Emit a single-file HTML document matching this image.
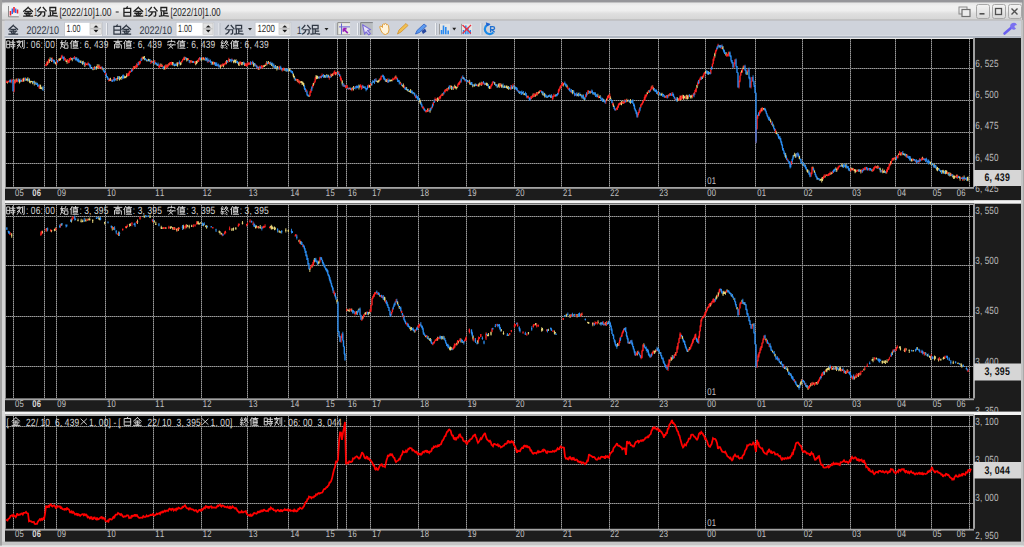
<!DOCTYPE html>
<html><head><meta charset="utf-8"><style>
html,body{margin:0;padding:0;width:1024px;height:547px;overflow:hidden;background:#a9a9a9;}
svg{display:block;} text{white-space:pre;}
</style></head><body>
<svg width="1024" height="547" viewBox="0 0 1024 547" xml:space="preserve" text-rendering="geometricPrecision">
<defs>
<symbol id="g_kin" viewBox="0 0 10 10" overflow="visible"><path d="M5 0.5L0.5 4.5M5 0.5L9.5 4.5M2.5 4.5H7.5M1.5 6.5H8.5M5 4.5V9.5M0.5 9.5H9.5M3 7.5L3.8 9M7 7.5L6.2 9" fill="none" stroke="currentColor" stroke-linecap="square"/></symbol>
<symbol id="g_haku" viewBox="0 0 10 10" overflow="visible"><path d="M5 0L4 1.5M1.5 1.5H8.5V9.5H1.5ZM1.5 5.5H8.5" fill="none" stroke="currentColor" stroke-linecap="square"/></symbol>
<symbol id="g_bun" viewBox="0 0 10 10" overflow="visible"><path d="M3.5 0.5L0.5 4M6.5 0.5L9.5 4M2 5H8V8.5Q8 9.5 6.5 9.5M4.5 5Q4.5 8 1 9.5" fill="none" stroke="currentColor" stroke-linecap="square"/></symbol>
<symbol id="g_soku" viewBox="0 0 10 10" overflow="visible"><path d="M2 0.5H8V4H2ZM5 4V8.5M5 6.5H8.5M2.5 5.5V8.5M0.5 9.5Q5 8.5 9.5 9.5" fill="none" stroke="currentColor" stroke-linecap="square"/></symbol>
<symbol id="g_ji" viewBox="0 0 10 10" overflow="visible"><path d="M0.5 1H3.5V9H0.5ZM0.5 5H3.5M4.5 2.5H9.5M7 0.5V5M4.5 5H9.5M5 7H9.5M8 5V9.5L7 9.5M5.5 7.5L6.3 8.5" fill="none" stroke="currentColor" stroke-linecap="square"/></symbol>
<symbol id="g_koku" viewBox="0 0 10 10" overflow="visible"><path d="M3 0.5V1.5M0.5 1.5H6M1 3H5L1 6.5M3.5 5L1 9.5M3.5 6L5.5 9M7 1V7.5M9 0.5V9.5L8 9.5" fill="none" stroke="currentColor" stroke-linecap="square"/></symbol>
<symbol id="g_shi" viewBox="0 0 10 10" overflow="visible"><path d="M2 0.5L1 5L4 5.5M0.5 3H4M3 3L0.5 9.5M1.5 7L4 8.5M6.5 0.5L5 3.5H9L8.5 3M5.5 5.5H9V9.5H5.5Z" fill="none" stroke="currentColor" stroke-linecap="square"/></symbol>
<symbol id="g_ne" viewBox="0 0 10 10" overflow="visible"><path d="M2.5 0.5L0.5 4M1.5 3V9.5M3.5 1.5H9.5M6.5 0.5V2.5M4.5 2.5H8.5V8H4.5ZM4.5 4.5H8.5M4.5 6.2H8.5M3.5 9.5H9.5" fill="none" stroke="currentColor" stroke-linecap="square"/></symbol>
<symbol id="g_taka" viewBox="0 0 10 10" overflow="visible"><path d="M5 0V1.5M0.5 1.5H9.5M3 2.8H7V4.5H3ZM1 5.5H9V9.5M1 5.5V9.5M3.5 7H6.5V8.8H3.5Z" fill="none" stroke="currentColor" stroke-linecap="square"/></symbol>
<symbol id="g_an" viewBox="0 0 10 10" overflow="visible"><path d="M5 0V1.5M1 3V1.5H9V3M0.5 5.5H9.5M4.5 3.5L3 6.5L6.5 9.5M7 5.5L2 9.5" fill="none" stroke="currentColor" stroke-linecap="square"/></symbol>
<symbol id="g_shu" viewBox="0 0 10 10" overflow="visible"><path d="M2 0.5L0.5 3.5L3 4M3 2L0.5 6.5H3.5M2 6.5V9.5M0.5 8L1 9M3.5 8L4 9M6.5 0.5L4.5 4M5.5 2H8.5L5 6.5M6 3L9.5 6M6.5 7L7.5 7.8M6 9L7.5 9.8" fill="none" stroke="currentColor" stroke-linecap="square"/></symbol>
</defs>
<rect x="0" y="0" width="1024" height="547" fill="#a2a2a2"/><rect x="0" y="0" width="1024" height="2.7" fill="#96969a"/>
<rect x="2" y="2.5" width="1020" height="545" fill="#d4d4d4"/>
<linearGradient id="tg" x1="0" y1="0" x2="0" y2="1"><stop offset="0" stop-color="#e6e6e6"/><stop offset="0.2" stop-color="#f1f1f1"/><stop offset="0.45" stop-color="#eeeeee"/><stop offset="0.62" stop-color="#dfdfdf"/><stop offset="1" stop-color="#d5d5d5"/></linearGradient>
<path d="M2 20.3V6Q2 2.7 5.5 2.7H1018.5Q1021.5 2.7 1021.5 6V20.3Z" fill="url(#tg)"/>
<rect x="2" y="19.6" width="1019.5" height="1" fill="#a8a8a8"/>
<rect x="8" y="6" width="10.8" height="10.5" fill="#f2f2f2"/>
<path d="M8.5 6V16.8H18.8" fill="none" stroke="#8a8a8a" stroke-width="1"/>
<path d="M10.5 15.5V11M14 12.5V7M17.5 13.5V9.5" stroke="#f02030" stroke-width="1.6"/>
<path d="M12.3 14V8.5M15.7 13V8.5" stroke="#2a70f0" stroke-width="1.4"/>
<use href="#g_kin" x="23.3" y="7.0" width="9.6" height="9.6" stroke-width="1.35" style="color:#202020"/>
<text x="34.00" y="15.6" font-size="11.5" fill="#202020" font-family="Liberation Sans, sans-serif" font-weight="normal" text-anchor="start" textLength="3.20" lengthAdjust="spacingAndGlyphs">1</text>
<use href="#g_bun" x="37" y="7.0" width="9.6" height="9.6" stroke-width="1.35" style="color:#202020"/>
<use href="#g_soku" x="48" y="7.0" width="9.6" height="9.6" stroke-width="1.35" style="color:#202020"/>
<text x="59.50" y="15.6" font-size="11.5" fill="#202020" font-family="Liberation Sans, sans-serif" font-weight="normal" text-anchor="start" textLength="52.00" lengthAdjust="spacingAndGlyphs">[2022/10]1.00</text>
<rect x="115.7" y="11.5" width="3" height="1" fill="#202020"/>
<use href="#g_haku" x="122.5" y="7.0" width="9.6" height="9.6" stroke-width="1.35" style="color:#202020"/>
<use href="#g_kin" x="133.5" y="7.0" width="9.6" height="9.6" stroke-width="1.35" style="color:#202020"/>
<text x="144.50" y="15.6" font-size="11.5" fill="#202020" font-family="Liberation Sans, sans-serif" font-weight="normal" text-anchor="start" textLength="3.20" lengthAdjust="spacingAndGlyphs">1</text>
<use href="#g_bun" x="148" y="7.0" width="9.6" height="9.6" stroke-width="1.35" style="color:#202020"/>
<use href="#g_soku" x="159" y="7.0" width="9.6" height="9.6" stroke-width="1.35" style="color:#202020"/>
<text x="170.50" y="15.6" font-size="11.5" fill="#202020" font-family="Liberation Sans, sans-serif" font-weight="normal" text-anchor="start" textLength="50.00" lengthAdjust="spacingAndGlyphs">[2022/10]1.00</text>
<rect x="959" y="7" width="8" height="7" fill="none" stroke="#8a8a8a" stroke-width="1"/>
<rect x="962" y="9.5" width="8" height="7" fill="#ececec" stroke="#707070" stroke-width="1.2"/>
<linearGradient id="bg" x1="0" y1="0" x2="0" y2="1"><stop offset="0" stop-color="#f4f4f4"/><stop offset="1" stop-color="#d8d8d8"/></linearGradient>
<rect x="976.5" y="4.5" width="13" height="14" rx="2" fill="url(#bg)" stroke="#a8a8a8"/>
<rect x="992.5" y="4.5" width="13" height="14" rx="2" fill="url(#bg)" stroke="#a8a8a8"/>
<rect x="1008.5" y="4.5" width="13" height="14" rx="2" fill="url(#bg)" stroke="#a8a8a8"/>
<rect x="979.5" y="13" width="5" height="1.6" fill="#505050"/>
<rect x="995.5" y="8.5" width="6" height="6" fill="none" stroke="#505050" stroke-width="1.3"/>
<path d="M1011.5 8.5L1017.5 14.5M1017.5 8.5L1011.5 14.5" stroke="#505050" stroke-width="1.4"/>
<rect x="4.6" y="20.6" width="1016.4" height="15.4" fill="#cfd3db"/>
<rect x="4.6" y="35" width="1016.4" height="1" fill="#d9dce2"/>
<rect x="4.6" y="36" width="1016.4" height="2" fill="#b0b7c2"/>
<use href="#g_kin" x="8.5" y="25" width="9.5" height="9.5" stroke-width="1.3" style="color:#303844"/>
<text x="26.5" y="33.6" font-size="11" fill="#303844" font-family="Liberation Sans, sans-serif" font-weight="normal" text-anchor="start" textLength="32.5" lengthAdjust="spacingAndGlyphs">2022/10</text>
<rect x="64.2" y="21.9" width="38.6" height="14.4" fill="#c2c6ce"/>
<rect x="65" y="22.7" width="37" height="13.1" fill="#ffffff"/>
<rect x="90" y="23.1" width="11.5" height="11.2" fill="#e2e2e2" stroke="#c4c4c4" stroke-width="0.7"/>
<path d="M93.5 27.6L96.0 25.2L98.5 27.6ZM93.5 29.8L96.0 32.4L98.5 29.8Z" fill="#181818"/>
<rect x="90.5" y="28.4" width="10.5" height="0.8" fill="#b0b0b0"/>
<text x="66.5" y="31.5" font-size="10.5" fill="#2a2a2a" font-family="Liberation Sans, sans-serif" font-weight="normal" text-anchor="start" textLength="14" lengthAdjust="spacingAndGlyphs">1.00</text>
<rect x="106" y="23" width="1" height="12" fill="#eef0f3"/><rect x="107" y="23" width="1" height="12" fill="#b8bdc6"/>
<use href="#g_haku" x="112.5" y="25" width="9.5" height="9.5" stroke-width="1.3" style="color:#303844"/>
<use href="#g_kin" x="121.5" y="25" width="9.5" height="9.5" stroke-width="1.3" style="color:#303844"/>
<text x="139.5" y="33.6" font-size="11" fill="#303844" font-family="Liberation Sans, sans-serif" font-weight="normal" text-anchor="start" textLength="32.5" lengthAdjust="spacingAndGlyphs">2022/10</text>
<rect x="175.7" y="21.9" width="38.6" height="14.4" fill="#c2c6ce"/>
<rect x="176.5" y="22.7" width="37.0" height="13.1" fill="#ffffff"/>
<rect x="203" y="23.1" width="10.0" height="11.2" fill="#e2e2e2" stroke="#c4c4c4" stroke-width="0.7"/>
<path d="M205.75 27.6L208.25 25.2L210.75 27.6ZM205.75 29.8L208.25 32.4L210.75 29.8Z" fill="#181818"/>
<rect x="203.5" y="28.4" width="9.0" height="0.8" fill="#b0b0b0"/>
<text x="178" y="31.5" font-size="10.5" fill="#2a2a2a" font-family="Liberation Sans, sans-serif" font-weight="normal" text-anchor="start" textLength="14" lengthAdjust="spacingAndGlyphs">1.00</text>
<rect x="218.5" y="23" width="1" height="12" fill="#eef0f3"/><rect x="219.5" y="23" width="1" height="12" fill="#b8bdc6"/>
<use href="#g_bun" x="225" y="25" width="9.5" height="9.5" stroke-width="1.3" style="color:#303844"/>
<use href="#g_soku" x="234" y="25" width="9.5" height="9.5" stroke-width="1.3" style="color:#303844"/>
<path d="M248 28L252 28L250 30.5Z" fill="#202020"/>
<rect x="254.7" y="21.9" width="36.6" height="14.4" fill="#c2c6ce"/>
<rect x="255.5" y="22.7" width="35.0" height="13.1" fill="#ffffff"/>
<rect x="279" y="23.1" width="11.0" height="11.2" fill="#e2e2e2" stroke="#c4c4c4" stroke-width="0.7"/>
<path d="M282.25 27.6L284.75 25.2L287.25 27.6ZM282.25 29.8L284.75 32.4L287.25 29.8Z" fill="#181818"/>
<rect x="279.5" y="28.4" width="10.0" height="0.8" fill="#b0b0b0"/>
<text x="257.5" y="31.5" font-size="10.5" fill="#2a2a2a" font-family="Liberation Sans, sans-serif" font-weight="normal" text-anchor="start" textLength="17.5" lengthAdjust="spacingAndGlyphs">1200</text>
<text x="296.8" y="33.6" font-size="11" fill="#303844" font-family="Liberation Sans, sans-serif" font-weight="normal" text-anchor="start" textLength="5" lengthAdjust="spacingAndGlyphs">1</text>
<use href="#g_bun" x="301.5" y="25" width="9.5" height="9.5" stroke-width="1.3" style="color:#303844"/>
<use href="#g_soku" x="310.5" y="25" width="9.5" height="9.5" stroke-width="1.3" style="color:#303844"/>
<path d="M324.5 28L328.5 28L326.5 30.5Z" fill="#202020"/>
<rect x="334.5" y="23" width="1" height="12" fill="#eef0f3"/><rect x="335.5" y="23" width="1" height="12" fill="#b8bdc6"/>
<rect x="357" y="23" width="1" height="12" fill="#eef0f3"/><rect x="358" y="23" width="1" height="12" fill="#b8bdc6"/>
<rect x="435" y="23" width="1" height="12" fill="#eef0f3"/><rect x="436" y="23" width="1" height="12" fill="#b8bdc6"/>
<rect x="480.5" y="23" width="1" height="12" fill="#eef0f3"/><rect x="481.5" y="23" width="1" height="12" fill="#b8bdc6"/>
<rect x="337.2" y="22.1" width="12.9" height="12.9" fill="#e9e9e2"/><path d="M337.7 35V22.6H350.1" fill="none" stroke="#8a8a8a" stroke-width="1"/><path d="M337.7 34.5H350" stroke="#a8a8a8" stroke-width="0.8"/>
<path d="M339 26.8H350" stroke="#9898dc" stroke-width="1.6"/><path d="M341.5 23.5V34.5" stroke="#6a64d0" stroke-width="1"/>
<path d="M347.8 33.2L343.6 29M343.4 28.6V31.8M343.4 28.6H346.6" stroke="#9a20b8" stroke-width="1.7"/>
<rect x="360.2" y="22.1" width="12.6" height="12.9" fill="#b9bdc1"/><path d="M360.7 35V22.6H372.8" fill="none" stroke="#7e8286" stroke-width="1"/>
<path d="M362.6 24.8L370.6 29.6L367.6 30.6L370.4 33.6L368.9 34.8L366.1 31.8L364.6 34.2Z" fill="#e6e2fa" stroke="#7a6ad8" stroke-width="1.1" stroke-linejoin="round"/>
<path d="M380 28Q379 26 381 26L382.5 27.5V24.5Q383.5 23.5 384.5 24.5V23.8Q385.7 23 386.5 24V24.8Q388 24.3 388.5 25.5L389 30Q389 34 385.5 34.5Q382 34.5 380 28Z" fill="#fff4dc" stroke="#e0a040" stroke-width="1"/>
<path d="M397.5 34L399 30L406 23.5L408 25.5L401 32Z" fill="#f2c050" stroke="#d09030" stroke-width="0.8"/>
<path d="M415.5 34L417 30.5L424 24L426.5 26L419.5 32.5Z" fill="#5a9af0" stroke="#3060c0" stroke-width="0.8"/><path d="M421.5 31L425 28.5L426.5 31.5L423 34Z" fill="#2a4aa0"/>
<rect x="439" y="23.8" width="11" height="10.7" fill="#e6e6e6"/><path d="M439.5 23.8V34.5" stroke="#9a9a9a" stroke-width="1"/>
<path d="M441.5 34.3V30M443.5 34.3V25.5M445.8 34.3V27M448.2 34.3V30.5" stroke="#2a8af0" stroke-width="1.6"/>
<path d="M452.3 27.8L456.2 27.8L454.25 30.5Z" fill="#202020"/>
<rect x="461" y="23.8" width="11" height="10.7" fill="#e6e6e6"/><path d="M461.5 23.8V34.5" stroke="#9a9a9a" stroke-width="1"/>
<path d="M463.5 34.3V30M465.8 34.3V25.5M468 34.3V27.5M470.3 34.3V30" stroke="#2a8af0" stroke-width="1.5"/>
<path d="M462.5 25L471 33.5M471 25L462.5 33.5" stroke="#e83040" stroke-width="1.3"/>
<path d="M489.5 24.3A4.9 4.9 0 1 0 493.3 32.6" fill="none" stroke="#1a8ae8" stroke-width="2.1"/><path d="M485.8 22.3L490.6 24.3L486.8 26.6Z" fill="#2060d0"/>
<path d="M490.6 32.3V26.6H492.8Q494.6 26.6 494.6 28.2Q494.6 29.6 492.8 29.6H491.6L494.6 32.3" fill="none" stroke="#2070d0" stroke-width="1.3"/>
<g transform="translate(18.5 0)"><path d="M986 33.5L993 27.5" stroke="#6a60f0" stroke-width="2.6" stroke-linecap="round"/><path d="M992 27.5A3.2 3.2 0 1 1 998.5 25L996.5 25.5L995.8 27L997.5 28.5A3.2 3.2 0 0 1 992 27.5Z" fill="#7a70f0"/></g>
<rect x="5" y="38" width="1016" height="505" fill="#1c1c1c"/>
<rect x="6" y="39" width="967" height="148" fill="#000"/>
<rect x="5" y="38" width="969" height="1" fill="#e8e8e8"/>
<rect x="5" y="39" width="1" height="148" fill="#8c8c8c"/>
<rect x="973" y="38" width="2" height="149" fill="#a0a0a0"/>
<rect x="5" y="187" width="969" height="1.8" fill="#a4a4a4"/>
<line x1="6" y1="68.5" x2="973" y2="68.5" stroke="#5c5c5c" stroke-width="1"/><line x1="6" y1="68.5" x2="973" y2="68.5" stroke="#9c9c9c" stroke-width="1" stroke-dasharray="1 1"/>
<line x1="6" y1="100.5" x2="973" y2="100.5" stroke="#5c5c5c" stroke-width="1"/><line x1="6" y1="100.5" x2="973" y2="100.5" stroke="#9c9c9c" stroke-width="1" stroke-dasharray="1 1"/>
<line x1="6" y1="132.5" x2="973" y2="132.5" stroke="#5c5c5c" stroke-width="1"/><line x1="6" y1="132.5" x2="973" y2="132.5" stroke="#9c9c9c" stroke-width="1" stroke-dasharray="1 1"/>
<line x1="6" y1="163.5" x2="973" y2="163.5" stroke="#5c5c5c" stroke-width="1"/><line x1="6" y1="163.5" x2="973" y2="163.5" stroke="#9c9c9c" stroke-width="1" stroke-dasharray="1 1"/>
<line x1="13.5" y1="39" x2="13.5" y2="187" stroke="#5c5c5c" stroke-width="1"/><line x1="13.5" y1="39" x2="13.5" y2="187" stroke="#9c9c9c" stroke-width="1" stroke-dasharray="1 1"/>
<line x1="44.5" y1="39" x2="44.5" y2="187" stroke="#5c5c5c" stroke-width="1"/><line x1="44.5" y1="39" x2="44.5" y2="187" stroke="#9c9c9c" stroke-width="1" stroke-dasharray="1 1"/>
<line x1="56.5" y1="39" x2="56.5" y2="187" stroke="#5c5c5c" stroke-width="1"/><line x1="56.5" y1="39" x2="56.5" y2="187" stroke="#9c9c9c" stroke-width="1" stroke-dasharray="1 1"/>
<line x1="105.5" y1="39" x2="105.5" y2="187" stroke="#5c5c5c" stroke-width="1"/><line x1="105.5" y1="39" x2="105.5" y2="187" stroke="#9c9c9c" stroke-width="1" stroke-dasharray="1 1"/>
<line x1="153.5" y1="39" x2="153.5" y2="187" stroke="#5c5c5c" stroke-width="1"/><line x1="153.5" y1="39" x2="153.5" y2="187" stroke="#9c9c9c" stroke-width="1" stroke-dasharray="1 1"/>
<line x1="201.5" y1="39" x2="201.5" y2="187" stroke="#5c5c5c" stroke-width="1"/><line x1="201.5" y1="39" x2="201.5" y2="187" stroke="#9c9c9c" stroke-width="1" stroke-dasharray="1 1"/>
<line x1="247.5" y1="39" x2="247.5" y2="187" stroke="#5c5c5c" stroke-width="1"/><line x1="247.5" y1="39" x2="247.5" y2="187" stroke="#9c9c9c" stroke-width="1" stroke-dasharray="1 1"/>
<line x1="288.5" y1="39" x2="288.5" y2="187" stroke="#5c5c5c" stroke-width="1"/><line x1="288.5" y1="39" x2="288.5" y2="187" stroke="#9c9c9c" stroke-width="1" stroke-dasharray="1 1"/>
<line x1="337.5" y1="39" x2="337.5" y2="187" stroke="#5c5c5c" stroke-width="1"/><line x1="337.5" y1="39" x2="337.5" y2="187" stroke="#9c9c9c" stroke-width="1" stroke-dasharray="1 1"/>
<line x1="346.5" y1="39" x2="346.5" y2="187" stroke="#5c5c5c" stroke-width="1"/><line x1="346.5" y1="39" x2="346.5" y2="187" stroke="#9c9c9c" stroke-width="1" stroke-dasharray="1 1"/>
<line x1="370.5" y1="39" x2="370.5" y2="187" stroke="#5c5c5c" stroke-width="1"/><line x1="370.5" y1="39" x2="370.5" y2="187" stroke="#9c9c9c" stroke-width="1" stroke-dasharray="1 1"/>
<line x1="418.5" y1="39" x2="418.5" y2="187" stroke="#5c5c5c" stroke-width="1"/><line x1="418.5" y1="39" x2="418.5" y2="187" stroke="#9c9c9c" stroke-width="1" stroke-dasharray="1 1"/>
<line x1="466.5" y1="39" x2="466.5" y2="187" stroke="#5c5c5c" stroke-width="1"/><line x1="466.5" y1="39" x2="466.5" y2="187" stroke="#9c9c9c" stroke-width="1" stroke-dasharray="1 1"/>
<line x1="514.5" y1="39" x2="514.5" y2="187" stroke="#5c5c5c" stroke-width="1"/><line x1="514.5" y1="39" x2="514.5" y2="187" stroke="#9c9c9c" stroke-width="1" stroke-dasharray="1 1"/>
<line x1="561.5" y1="39" x2="561.5" y2="187" stroke="#5c5c5c" stroke-width="1"/><line x1="561.5" y1="39" x2="561.5" y2="187" stroke="#9c9c9c" stroke-width="1" stroke-dasharray="1 1"/>
<line x1="609.5" y1="39" x2="609.5" y2="187" stroke="#5c5c5c" stroke-width="1"/><line x1="609.5" y1="39" x2="609.5" y2="187" stroke="#9c9c9c" stroke-width="1" stroke-dasharray="1 1"/>
<line x1="658.5" y1="39" x2="658.5" y2="187" stroke="#5c5c5c" stroke-width="1"/><line x1="658.5" y1="39" x2="658.5" y2="187" stroke="#9c9c9c" stroke-width="1" stroke-dasharray="1 1"/>
<line x1="705.5" y1="39" x2="705.5" y2="187" stroke="#5c5c5c" stroke-width="1"/><line x1="705.5" y1="39" x2="705.5" y2="187" stroke="#9c9c9c" stroke-width="1" stroke-dasharray="1 1"/>
<line x1="755.5" y1="39" x2="755.5" y2="187" stroke="#5c5c5c" stroke-width="1"/><line x1="755.5" y1="39" x2="755.5" y2="187" stroke="#9c9c9c" stroke-width="1" stroke-dasharray="1 1"/>
<line x1="802.5" y1="39" x2="802.5" y2="187" stroke="#5c5c5c" stroke-width="1"/><line x1="802.5" y1="39" x2="802.5" y2="187" stroke="#9c9c9c" stroke-width="1" stroke-dasharray="1 1"/>
<line x1="850.5" y1="39" x2="850.5" y2="187" stroke="#5c5c5c" stroke-width="1"/><line x1="850.5" y1="39" x2="850.5" y2="187" stroke="#9c9c9c" stroke-width="1" stroke-dasharray="1 1"/>
<line x1="895.5" y1="39" x2="895.5" y2="187" stroke="#5c5c5c" stroke-width="1"/><line x1="895.5" y1="39" x2="895.5" y2="187" stroke="#9c9c9c" stroke-width="1" stroke-dasharray="1 1"/>
<line x1="931.5" y1="39" x2="931.5" y2="187" stroke="#5c5c5c" stroke-width="1"/><line x1="931.5" y1="39" x2="931.5" y2="187" stroke="#9c9c9c" stroke-width="1" stroke-dasharray="1 1"/>
<line x1="969.5" y1="39" x2="969.5" y2="187" stroke="#5c5c5c" stroke-width="1"/><line x1="969.5" y1="39" x2="969.5" y2="187" stroke="#9c9c9c" stroke-width="1" stroke-dasharray="1 1"/>
<g transform="translate(14.50 0) scale(0.78 1)"><text x="0.59 6.49" y="195.60" font-size="9.8" fill="#c4c4c4" font-family="Liberation Sans, sans-serif" font-weight="normal">05</text></g>
<g transform="translate(31.70 0) scale(0.78 1)"><text x="0.59 6.49" y="195.60" font-size="9.8" fill="#dadada" font-family="Liberation Sans, sans-serif" font-weight="bold">06</text></g>
<g transform="translate(56.70 0) scale(0.78 1)"><text x="0.59 6.49" y="195.60" font-size="9.8" fill="#c4c4c4" font-family="Liberation Sans, sans-serif" font-weight="normal">09</text></g>
<g transform="translate(106.50 0) scale(0.78 1)"><text x="0.59 6.49" y="195.60" font-size="9.8" fill="#c4c4c4" font-family="Liberation Sans, sans-serif" font-weight="normal">10</text></g>
<g transform="translate(154.90 0) scale(0.78 1)"><text x="0.59 6.49" y="195.60" font-size="9.8" fill="#c4c4c4" font-family="Liberation Sans, sans-serif" font-weight="normal">11</text></g>
<g transform="translate(202.20 0) scale(0.78 1)"><text x="0.59 6.49" y="195.60" font-size="9.8" fill="#c4c4c4" font-family="Liberation Sans, sans-serif" font-weight="normal">12</text></g>
<g transform="translate(248.20 0) scale(0.78 1)"><text x="0.59 6.49" y="195.60" font-size="9.8" fill="#c4c4c4" font-family="Liberation Sans, sans-serif" font-weight="normal">13</text></g>
<g transform="translate(290.00 0) scale(0.78 1)"><text x="0.59 6.49" y="195.60" font-size="9.8" fill="#c4c4c4" font-family="Liberation Sans, sans-serif" font-weight="normal">14</text></g>
<g transform="translate(325.40 0) scale(0.78 1)"><text x="0.59 6.49" y="195.60" font-size="9.8" fill="#c4c4c4" font-family="Liberation Sans, sans-serif" font-weight="normal">15</text></g>
<g transform="translate(347.50 0) scale(0.78 1)"><text x="0.59 6.49" y="195.60" font-size="9.8" fill="#c4c4c4" font-family="Liberation Sans, sans-serif" font-weight="normal">16</text></g>
<g transform="translate(371.70 0) scale(0.78 1)"><text x="0.59 6.49" y="195.60" font-size="9.8" fill="#c4c4c4" font-family="Liberation Sans, sans-serif" font-weight="normal">17</text></g>
<g transform="translate(419.70 0) scale(0.78 1)"><text x="0.59 6.49" y="195.60" font-size="9.8" fill="#c4c4c4" font-family="Liberation Sans, sans-serif" font-weight="normal">18</text></g>
<g transform="translate(467.20 0) scale(0.78 1)"><text x="0.59 6.49" y="195.60" font-size="9.8" fill="#c4c4c4" font-family="Liberation Sans, sans-serif" font-weight="normal">19</text></g>
<g transform="translate(515.20 0) scale(0.78 1)"><text x="0.59 6.49" y="195.60" font-size="9.8" fill="#c4c4c4" font-family="Liberation Sans, sans-serif" font-weight="normal">20</text></g>
<g transform="translate(562.60 0) scale(0.78 1)"><text x="0.59 6.49" y="195.60" font-size="9.8" fill="#c4c4c4" font-family="Liberation Sans, sans-serif" font-weight="normal">21</text></g>
<g transform="translate(609.70 0) scale(0.78 1)"><text x="0.59 6.49" y="195.60" font-size="9.8" fill="#c4c4c4" font-family="Liberation Sans, sans-serif" font-weight="normal">22</text></g>
<g transform="translate(658.70 0) scale(0.78 1)"><text x="0.59 6.49" y="195.60" font-size="9.8" fill="#c4c4c4" font-family="Liberation Sans, sans-serif" font-weight="normal">23</text></g>
<g transform="translate(706.70 0) scale(0.78 1)"><text x="0.59 6.49" y="195.60" font-size="9.8" fill="#c4c4c4" font-family="Liberation Sans, sans-serif" font-weight="normal">00</text></g>
<g transform="translate(756.70 0) scale(0.78 1)"><text x="0.59 6.49" y="195.60" font-size="9.8" fill="#c4c4c4" font-family="Liberation Sans, sans-serif" font-weight="normal">01</text></g>
<g transform="translate(803.20 0) scale(0.78 1)"><text x="0.59 6.49" y="195.60" font-size="9.8" fill="#c4c4c4" font-family="Liberation Sans, sans-serif" font-weight="normal">02</text></g>
<g transform="translate(851.70 0) scale(0.78 1)"><text x="0.59 6.49" y="195.60" font-size="9.8" fill="#c4c4c4" font-family="Liberation Sans, sans-serif" font-weight="normal">03</text></g>
<g transform="translate(896.70 0) scale(0.78 1)"><text x="0.59 6.49" y="195.60" font-size="9.8" fill="#c4c4c4" font-family="Liberation Sans, sans-serif" font-weight="normal">04</text></g>
<g transform="translate(932.20 0) scale(0.78 1)"><text x="0.59 6.49" y="195.60" font-size="9.8" fill="#c4c4c4" font-family="Liberation Sans, sans-serif" font-weight="normal">05</text></g>
<g transform="translate(956.20 0) scale(0.78 1)"><text x="0.59 6.49" y="195.60" font-size="9.8" fill="#c4c4c4" font-family="Liberation Sans, sans-serif" font-weight="normal">06</text></g>
<g transform="translate(706.70 0) scale(0.78 1)"><text x="0.59 6.49" y="184.00" font-size="9.8" fill="#c4c4c4" font-family="Liberation Sans, sans-serif" font-weight="normal">01</text></g>
<rect x="6" y="205" width="967" height="193.39999999999998" fill="#000"/>
<rect x="5" y="204" width="969" height="1" fill="#b4b4b4"/>
<rect x="5" y="205" width="1" height="193.39999999999998" fill="#8c8c8c"/>
<rect x="973" y="204" width="2" height="194.39999999999998" fill="#a0a0a0"/>
<rect x="5" y="398.4" width="969" height="1.8" fill="#a4a4a4"/>
<line x1="6" y1="216.5" x2="973" y2="216.5" stroke="#5c5c5c" stroke-width="1"/><line x1="6" y1="216.5" x2="973" y2="216.5" stroke="#9c9c9c" stroke-width="1" stroke-dasharray="1 1"/>
<line x1="6" y1="265.5" x2="973" y2="265.5" stroke="#5c5c5c" stroke-width="1"/><line x1="6" y1="265.5" x2="973" y2="265.5" stroke="#9c9c9c" stroke-width="1" stroke-dasharray="1 1"/>
<line x1="6" y1="316.5" x2="973" y2="316.5" stroke="#5c5c5c" stroke-width="1"/><line x1="6" y1="316.5" x2="973" y2="316.5" stroke="#9c9c9c" stroke-width="1" stroke-dasharray="1 1"/>
<line x1="6" y1="366.5" x2="973" y2="366.5" stroke="#5c5c5c" stroke-width="1"/><line x1="6" y1="366.5" x2="973" y2="366.5" stroke="#9c9c9c" stroke-width="1" stroke-dasharray="1 1"/>
<line x1="13.5" y1="205" x2="13.5" y2="398.4" stroke="#5c5c5c" stroke-width="1"/><line x1="13.5" y1="205" x2="13.5" y2="398.4" stroke="#9c9c9c" stroke-width="1" stroke-dasharray="1 1"/>
<line x1="44.5" y1="205" x2="44.5" y2="398.4" stroke="#5c5c5c" stroke-width="1"/><line x1="44.5" y1="205" x2="44.5" y2="398.4" stroke="#9c9c9c" stroke-width="1" stroke-dasharray="1 1"/>
<line x1="56.5" y1="205" x2="56.5" y2="398.4" stroke="#5c5c5c" stroke-width="1"/><line x1="56.5" y1="205" x2="56.5" y2="398.4" stroke="#9c9c9c" stroke-width="1" stroke-dasharray="1 1"/>
<line x1="105.5" y1="205" x2="105.5" y2="398.4" stroke="#5c5c5c" stroke-width="1"/><line x1="105.5" y1="205" x2="105.5" y2="398.4" stroke="#9c9c9c" stroke-width="1" stroke-dasharray="1 1"/>
<line x1="153.5" y1="205" x2="153.5" y2="398.4" stroke="#5c5c5c" stroke-width="1"/><line x1="153.5" y1="205" x2="153.5" y2="398.4" stroke="#9c9c9c" stroke-width="1" stroke-dasharray="1 1"/>
<line x1="201.5" y1="205" x2="201.5" y2="398.4" stroke="#5c5c5c" stroke-width="1"/><line x1="201.5" y1="205" x2="201.5" y2="398.4" stroke="#9c9c9c" stroke-width="1" stroke-dasharray="1 1"/>
<line x1="247.5" y1="205" x2="247.5" y2="398.4" stroke="#5c5c5c" stroke-width="1"/><line x1="247.5" y1="205" x2="247.5" y2="398.4" stroke="#9c9c9c" stroke-width="1" stroke-dasharray="1 1"/>
<line x1="288.5" y1="205" x2="288.5" y2="398.4" stroke="#5c5c5c" stroke-width="1"/><line x1="288.5" y1="205" x2="288.5" y2="398.4" stroke="#9c9c9c" stroke-width="1" stroke-dasharray="1 1"/>
<line x1="337.5" y1="205" x2="337.5" y2="398.4" stroke="#5c5c5c" stroke-width="1"/><line x1="337.5" y1="205" x2="337.5" y2="398.4" stroke="#9c9c9c" stroke-width="1" stroke-dasharray="1 1"/>
<line x1="346.5" y1="205" x2="346.5" y2="398.4" stroke="#5c5c5c" stroke-width="1"/><line x1="346.5" y1="205" x2="346.5" y2="398.4" stroke="#9c9c9c" stroke-width="1" stroke-dasharray="1 1"/>
<line x1="370.5" y1="205" x2="370.5" y2="398.4" stroke="#5c5c5c" stroke-width="1"/><line x1="370.5" y1="205" x2="370.5" y2="398.4" stroke="#9c9c9c" stroke-width="1" stroke-dasharray="1 1"/>
<line x1="418.5" y1="205" x2="418.5" y2="398.4" stroke="#5c5c5c" stroke-width="1"/><line x1="418.5" y1="205" x2="418.5" y2="398.4" stroke="#9c9c9c" stroke-width="1" stroke-dasharray="1 1"/>
<line x1="466.5" y1="205" x2="466.5" y2="398.4" stroke="#5c5c5c" stroke-width="1"/><line x1="466.5" y1="205" x2="466.5" y2="398.4" stroke="#9c9c9c" stroke-width="1" stroke-dasharray="1 1"/>
<line x1="514.5" y1="205" x2="514.5" y2="398.4" stroke="#5c5c5c" stroke-width="1"/><line x1="514.5" y1="205" x2="514.5" y2="398.4" stroke="#9c9c9c" stroke-width="1" stroke-dasharray="1 1"/>
<line x1="561.5" y1="205" x2="561.5" y2="398.4" stroke="#5c5c5c" stroke-width="1"/><line x1="561.5" y1="205" x2="561.5" y2="398.4" stroke="#9c9c9c" stroke-width="1" stroke-dasharray="1 1"/>
<line x1="609.5" y1="205" x2="609.5" y2="398.4" stroke="#5c5c5c" stroke-width="1"/><line x1="609.5" y1="205" x2="609.5" y2="398.4" stroke="#9c9c9c" stroke-width="1" stroke-dasharray="1 1"/>
<line x1="658.5" y1="205" x2="658.5" y2="398.4" stroke="#5c5c5c" stroke-width="1"/><line x1="658.5" y1="205" x2="658.5" y2="398.4" stroke="#9c9c9c" stroke-width="1" stroke-dasharray="1 1"/>
<line x1="705.5" y1="205" x2="705.5" y2="398.4" stroke="#5c5c5c" stroke-width="1"/><line x1="705.5" y1="205" x2="705.5" y2="398.4" stroke="#9c9c9c" stroke-width="1" stroke-dasharray="1 1"/>
<line x1="755.5" y1="205" x2="755.5" y2="398.4" stroke="#5c5c5c" stroke-width="1"/><line x1="755.5" y1="205" x2="755.5" y2="398.4" stroke="#9c9c9c" stroke-width="1" stroke-dasharray="1 1"/>
<line x1="802.5" y1="205" x2="802.5" y2="398.4" stroke="#5c5c5c" stroke-width="1"/><line x1="802.5" y1="205" x2="802.5" y2="398.4" stroke="#9c9c9c" stroke-width="1" stroke-dasharray="1 1"/>
<line x1="850.5" y1="205" x2="850.5" y2="398.4" stroke="#5c5c5c" stroke-width="1"/><line x1="850.5" y1="205" x2="850.5" y2="398.4" stroke="#9c9c9c" stroke-width="1" stroke-dasharray="1 1"/>
<line x1="895.5" y1="205" x2="895.5" y2="398.4" stroke="#5c5c5c" stroke-width="1"/><line x1="895.5" y1="205" x2="895.5" y2="398.4" stroke="#9c9c9c" stroke-width="1" stroke-dasharray="1 1"/>
<line x1="931.5" y1="205" x2="931.5" y2="398.4" stroke="#5c5c5c" stroke-width="1"/><line x1="931.5" y1="205" x2="931.5" y2="398.4" stroke="#9c9c9c" stroke-width="1" stroke-dasharray="1 1"/>
<line x1="969.5" y1="205" x2="969.5" y2="398.4" stroke="#5c5c5c" stroke-width="1"/><line x1="969.5" y1="205" x2="969.5" y2="398.4" stroke="#9c9c9c" stroke-width="1" stroke-dasharray="1 1"/>
<g transform="translate(14.50 0) scale(0.78 1)"><text x="0.59 6.49" y="407.00" font-size="9.8" fill="#c4c4c4" font-family="Liberation Sans, sans-serif" font-weight="normal">05</text></g>
<g transform="translate(31.70 0) scale(0.78 1)"><text x="0.59 6.49" y="407.00" font-size="9.8" fill="#dadada" font-family="Liberation Sans, sans-serif" font-weight="bold">06</text></g>
<g transform="translate(56.70 0) scale(0.78 1)"><text x="0.59 6.49" y="407.00" font-size="9.8" fill="#c4c4c4" font-family="Liberation Sans, sans-serif" font-weight="normal">09</text></g>
<g transform="translate(106.50 0) scale(0.78 1)"><text x="0.59 6.49" y="407.00" font-size="9.8" fill="#c4c4c4" font-family="Liberation Sans, sans-serif" font-weight="normal">10</text></g>
<g transform="translate(154.90 0) scale(0.78 1)"><text x="0.59 6.49" y="407.00" font-size="9.8" fill="#c4c4c4" font-family="Liberation Sans, sans-serif" font-weight="normal">11</text></g>
<g transform="translate(202.20 0) scale(0.78 1)"><text x="0.59 6.49" y="407.00" font-size="9.8" fill="#c4c4c4" font-family="Liberation Sans, sans-serif" font-weight="normal">12</text></g>
<g transform="translate(248.20 0) scale(0.78 1)"><text x="0.59 6.49" y="407.00" font-size="9.8" fill="#c4c4c4" font-family="Liberation Sans, sans-serif" font-weight="normal">13</text></g>
<g transform="translate(290.00 0) scale(0.78 1)"><text x="0.59 6.49" y="407.00" font-size="9.8" fill="#c4c4c4" font-family="Liberation Sans, sans-serif" font-weight="normal">14</text></g>
<g transform="translate(325.40 0) scale(0.78 1)"><text x="0.59 6.49" y="407.00" font-size="9.8" fill="#c4c4c4" font-family="Liberation Sans, sans-serif" font-weight="normal">15</text></g>
<g transform="translate(347.50 0) scale(0.78 1)"><text x="0.59 6.49" y="407.00" font-size="9.8" fill="#c4c4c4" font-family="Liberation Sans, sans-serif" font-weight="normal">16</text></g>
<g transform="translate(371.70 0) scale(0.78 1)"><text x="0.59 6.49" y="407.00" font-size="9.8" fill="#c4c4c4" font-family="Liberation Sans, sans-serif" font-weight="normal">17</text></g>
<g transform="translate(419.70 0) scale(0.78 1)"><text x="0.59 6.49" y="407.00" font-size="9.8" fill="#c4c4c4" font-family="Liberation Sans, sans-serif" font-weight="normal">18</text></g>
<g transform="translate(467.20 0) scale(0.78 1)"><text x="0.59 6.49" y="407.00" font-size="9.8" fill="#c4c4c4" font-family="Liberation Sans, sans-serif" font-weight="normal">19</text></g>
<g transform="translate(515.20 0) scale(0.78 1)"><text x="0.59 6.49" y="407.00" font-size="9.8" fill="#c4c4c4" font-family="Liberation Sans, sans-serif" font-weight="normal">20</text></g>
<g transform="translate(562.60 0) scale(0.78 1)"><text x="0.59 6.49" y="407.00" font-size="9.8" fill="#c4c4c4" font-family="Liberation Sans, sans-serif" font-weight="normal">21</text></g>
<g transform="translate(609.70 0) scale(0.78 1)"><text x="0.59 6.49" y="407.00" font-size="9.8" fill="#c4c4c4" font-family="Liberation Sans, sans-serif" font-weight="normal">22</text></g>
<g transform="translate(658.70 0) scale(0.78 1)"><text x="0.59 6.49" y="407.00" font-size="9.8" fill="#c4c4c4" font-family="Liberation Sans, sans-serif" font-weight="normal">23</text></g>
<g transform="translate(706.70 0) scale(0.78 1)"><text x="0.59 6.49" y="407.00" font-size="9.8" fill="#c4c4c4" font-family="Liberation Sans, sans-serif" font-weight="normal">00</text></g>
<g transform="translate(756.70 0) scale(0.78 1)"><text x="0.59 6.49" y="407.00" font-size="9.8" fill="#c4c4c4" font-family="Liberation Sans, sans-serif" font-weight="normal">01</text></g>
<g transform="translate(803.20 0) scale(0.78 1)"><text x="0.59 6.49" y="407.00" font-size="9.8" fill="#c4c4c4" font-family="Liberation Sans, sans-serif" font-weight="normal">02</text></g>
<g transform="translate(851.70 0) scale(0.78 1)"><text x="0.59 6.49" y="407.00" font-size="9.8" fill="#c4c4c4" font-family="Liberation Sans, sans-serif" font-weight="normal">03</text></g>
<g transform="translate(896.70 0) scale(0.78 1)"><text x="0.59 6.49" y="407.00" font-size="9.8" fill="#c4c4c4" font-family="Liberation Sans, sans-serif" font-weight="normal">04</text></g>
<g transform="translate(932.20 0) scale(0.78 1)"><text x="0.59 6.49" y="407.00" font-size="9.8" fill="#c4c4c4" font-family="Liberation Sans, sans-serif" font-weight="normal">05</text></g>
<g transform="translate(956.20 0) scale(0.78 1)"><text x="0.59 6.49" y="407.00" font-size="9.8" fill="#c4c4c4" font-family="Liberation Sans, sans-serif" font-weight="normal">06</text></g>
<g transform="translate(706.70 0) scale(0.78 1)"><text x="0.59 6.49" y="395.40" font-size="9.8" fill="#c4c4c4" font-family="Liberation Sans, sans-serif" font-weight="normal">01</text></g>
<rect x="6" y="416" width="967" height="112.79999999999995" fill="#000"/>
<rect x="5" y="415" width="969" height="1" fill="#b4b4b4"/>
<rect x="5" y="416" width="1" height="112.79999999999995" fill="#8c8c8c"/>
<rect x="973" y="415" width="2" height="113.79999999999995" fill="#a0a0a0"/>
<rect x="5" y="528.8" width="969" height="1.8" fill="#a4a4a4"/>
<line x1="6" y1="426.5" x2="973" y2="426.5" stroke="#5c5c5c" stroke-width="1"/><line x1="6" y1="426.5" x2="973" y2="426.5" stroke="#9c9c9c" stroke-width="1" stroke-dasharray="1 1"/>
<line x1="6" y1="464.5" x2="973" y2="464.5" stroke="#5c5c5c" stroke-width="1"/><line x1="6" y1="464.5" x2="973" y2="464.5" stroke="#9c9c9c" stroke-width="1" stroke-dasharray="1 1"/>
<line x1="6" y1="503.5" x2="973" y2="503.5" stroke="#5c5c5c" stroke-width="1"/><line x1="6" y1="503.5" x2="973" y2="503.5" stroke="#9c9c9c" stroke-width="1" stroke-dasharray="1 1"/>
<line x1="13.5" y1="416" x2="13.5" y2="528.8" stroke="#5c5c5c" stroke-width="1"/><line x1="13.5" y1="416" x2="13.5" y2="528.8" stroke="#9c9c9c" stroke-width="1" stroke-dasharray="1 1"/>
<line x1="44.5" y1="416" x2="44.5" y2="528.8" stroke="#5c5c5c" stroke-width="1"/><line x1="44.5" y1="416" x2="44.5" y2="528.8" stroke="#9c9c9c" stroke-width="1" stroke-dasharray="1 1"/>
<line x1="56.5" y1="416" x2="56.5" y2="528.8" stroke="#5c5c5c" stroke-width="1"/><line x1="56.5" y1="416" x2="56.5" y2="528.8" stroke="#9c9c9c" stroke-width="1" stroke-dasharray="1 1"/>
<line x1="105.5" y1="416" x2="105.5" y2="528.8" stroke="#5c5c5c" stroke-width="1"/><line x1="105.5" y1="416" x2="105.5" y2="528.8" stroke="#9c9c9c" stroke-width="1" stroke-dasharray="1 1"/>
<line x1="153.5" y1="416" x2="153.5" y2="528.8" stroke="#5c5c5c" stroke-width="1"/><line x1="153.5" y1="416" x2="153.5" y2="528.8" stroke="#9c9c9c" stroke-width="1" stroke-dasharray="1 1"/>
<line x1="201.5" y1="416" x2="201.5" y2="528.8" stroke="#5c5c5c" stroke-width="1"/><line x1="201.5" y1="416" x2="201.5" y2="528.8" stroke="#9c9c9c" stroke-width="1" stroke-dasharray="1 1"/>
<line x1="247.5" y1="416" x2="247.5" y2="528.8" stroke="#5c5c5c" stroke-width="1"/><line x1="247.5" y1="416" x2="247.5" y2="528.8" stroke="#9c9c9c" stroke-width="1" stroke-dasharray="1 1"/>
<line x1="288.5" y1="416" x2="288.5" y2="528.8" stroke="#5c5c5c" stroke-width="1"/><line x1="288.5" y1="416" x2="288.5" y2="528.8" stroke="#9c9c9c" stroke-width="1" stroke-dasharray="1 1"/>
<line x1="337.5" y1="416" x2="337.5" y2="528.8" stroke="#5c5c5c" stroke-width="1"/><line x1="337.5" y1="416" x2="337.5" y2="528.8" stroke="#9c9c9c" stroke-width="1" stroke-dasharray="1 1"/>
<line x1="346.5" y1="416" x2="346.5" y2="528.8" stroke="#5c5c5c" stroke-width="1"/><line x1="346.5" y1="416" x2="346.5" y2="528.8" stroke="#9c9c9c" stroke-width="1" stroke-dasharray="1 1"/>
<line x1="370.5" y1="416" x2="370.5" y2="528.8" stroke="#5c5c5c" stroke-width="1"/><line x1="370.5" y1="416" x2="370.5" y2="528.8" stroke="#9c9c9c" stroke-width="1" stroke-dasharray="1 1"/>
<line x1="418.5" y1="416" x2="418.5" y2="528.8" stroke="#5c5c5c" stroke-width="1"/><line x1="418.5" y1="416" x2="418.5" y2="528.8" stroke="#9c9c9c" stroke-width="1" stroke-dasharray="1 1"/>
<line x1="466.5" y1="416" x2="466.5" y2="528.8" stroke="#5c5c5c" stroke-width="1"/><line x1="466.5" y1="416" x2="466.5" y2="528.8" stroke="#9c9c9c" stroke-width="1" stroke-dasharray="1 1"/>
<line x1="514.5" y1="416" x2="514.5" y2="528.8" stroke="#5c5c5c" stroke-width="1"/><line x1="514.5" y1="416" x2="514.5" y2="528.8" stroke="#9c9c9c" stroke-width="1" stroke-dasharray="1 1"/>
<line x1="561.5" y1="416" x2="561.5" y2="528.8" stroke="#5c5c5c" stroke-width="1"/><line x1="561.5" y1="416" x2="561.5" y2="528.8" stroke="#9c9c9c" stroke-width="1" stroke-dasharray="1 1"/>
<line x1="609.5" y1="416" x2="609.5" y2="528.8" stroke="#5c5c5c" stroke-width="1"/><line x1="609.5" y1="416" x2="609.5" y2="528.8" stroke="#9c9c9c" stroke-width="1" stroke-dasharray="1 1"/>
<line x1="658.5" y1="416" x2="658.5" y2="528.8" stroke="#5c5c5c" stroke-width="1"/><line x1="658.5" y1="416" x2="658.5" y2="528.8" stroke="#9c9c9c" stroke-width="1" stroke-dasharray="1 1"/>
<line x1="705.5" y1="416" x2="705.5" y2="528.8" stroke="#5c5c5c" stroke-width="1"/><line x1="705.5" y1="416" x2="705.5" y2="528.8" stroke="#9c9c9c" stroke-width="1" stroke-dasharray="1 1"/>
<line x1="755.5" y1="416" x2="755.5" y2="528.8" stroke="#5c5c5c" stroke-width="1"/><line x1="755.5" y1="416" x2="755.5" y2="528.8" stroke="#9c9c9c" stroke-width="1" stroke-dasharray="1 1"/>
<line x1="802.5" y1="416" x2="802.5" y2="528.8" stroke="#5c5c5c" stroke-width="1"/><line x1="802.5" y1="416" x2="802.5" y2="528.8" stroke="#9c9c9c" stroke-width="1" stroke-dasharray="1 1"/>
<line x1="850.5" y1="416" x2="850.5" y2="528.8" stroke="#5c5c5c" stroke-width="1"/><line x1="850.5" y1="416" x2="850.5" y2="528.8" stroke="#9c9c9c" stroke-width="1" stroke-dasharray="1 1"/>
<line x1="895.5" y1="416" x2="895.5" y2="528.8" stroke="#5c5c5c" stroke-width="1"/><line x1="895.5" y1="416" x2="895.5" y2="528.8" stroke="#9c9c9c" stroke-width="1" stroke-dasharray="1 1"/>
<line x1="931.5" y1="416" x2="931.5" y2="528.8" stroke="#5c5c5c" stroke-width="1"/><line x1="931.5" y1="416" x2="931.5" y2="528.8" stroke="#9c9c9c" stroke-width="1" stroke-dasharray="1 1"/>
<line x1="969.5" y1="416" x2="969.5" y2="528.8" stroke="#5c5c5c" stroke-width="1"/><line x1="969.5" y1="416" x2="969.5" y2="528.8" stroke="#9c9c9c" stroke-width="1" stroke-dasharray="1 1"/>
<g transform="translate(14.50 0) scale(0.78 1)"><text x="0.59 6.49" y="537.40" font-size="9.8" fill="#c4c4c4" font-family="Liberation Sans, sans-serif" font-weight="normal">05</text></g>
<g transform="translate(31.70 0) scale(0.78 1)"><text x="0.59 6.49" y="537.40" font-size="9.8" fill="#dadada" font-family="Liberation Sans, sans-serif" font-weight="bold">06</text></g>
<g transform="translate(56.70 0) scale(0.78 1)"><text x="0.59 6.49" y="537.40" font-size="9.8" fill="#c4c4c4" font-family="Liberation Sans, sans-serif" font-weight="normal">09</text></g>
<g transform="translate(106.50 0) scale(0.78 1)"><text x="0.59 6.49" y="537.40" font-size="9.8" fill="#c4c4c4" font-family="Liberation Sans, sans-serif" font-weight="normal">10</text></g>
<g transform="translate(154.90 0) scale(0.78 1)"><text x="0.59 6.49" y="537.40" font-size="9.8" fill="#c4c4c4" font-family="Liberation Sans, sans-serif" font-weight="normal">11</text></g>
<g transform="translate(202.20 0) scale(0.78 1)"><text x="0.59 6.49" y="537.40" font-size="9.8" fill="#c4c4c4" font-family="Liberation Sans, sans-serif" font-weight="normal">12</text></g>
<g transform="translate(248.20 0) scale(0.78 1)"><text x="0.59 6.49" y="537.40" font-size="9.8" fill="#c4c4c4" font-family="Liberation Sans, sans-serif" font-weight="normal">13</text></g>
<g transform="translate(290.00 0) scale(0.78 1)"><text x="0.59 6.49" y="537.40" font-size="9.8" fill="#c4c4c4" font-family="Liberation Sans, sans-serif" font-weight="normal">14</text></g>
<g transform="translate(325.40 0) scale(0.78 1)"><text x="0.59 6.49" y="537.40" font-size="9.8" fill="#c4c4c4" font-family="Liberation Sans, sans-serif" font-weight="normal">15</text></g>
<g transform="translate(347.50 0) scale(0.78 1)"><text x="0.59 6.49" y="537.40" font-size="9.8" fill="#c4c4c4" font-family="Liberation Sans, sans-serif" font-weight="normal">16</text></g>
<g transform="translate(371.70 0) scale(0.78 1)"><text x="0.59 6.49" y="537.40" font-size="9.8" fill="#c4c4c4" font-family="Liberation Sans, sans-serif" font-weight="normal">17</text></g>
<g transform="translate(419.70 0) scale(0.78 1)"><text x="0.59 6.49" y="537.40" font-size="9.8" fill="#c4c4c4" font-family="Liberation Sans, sans-serif" font-weight="normal">18</text></g>
<g transform="translate(467.20 0) scale(0.78 1)"><text x="0.59 6.49" y="537.40" font-size="9.8" fill="#c4c4c4" font-family="Liberation Sans, sans-serif" font-weight="normal">19</text></g>
<g transform="translate(515.20 0) scale(0.78 1)"><text x="0.59 6.49" y="537.40" font-size="9.8" fill="#c4c4c4" font-family="Liberation Sans, sans-serif" font-weight="normal">20</text></g>
<g transform="translate(562.60 0) scale(0.78 1)"><text x="0.59 6.49" y="537.40" font-size="9.8" fill="#c4c4c4" font-family="Liberation Sans, sans-serif" font-weight="normal">21</text></g>
<g transform="translate(609.70 0) scale(0.78 1)"><text x="0.59 6.49" y="537.40" font-size="9.8" fill="#c4c4c4" font-family="Liberation Sans, sans-serif" font-weight="normal">22</text></g>
<g transform="translate(658.70 0) scale(0.78 1)"><text x="0.59 6.49" y="537.40" font-size="9.8" fill="#c4c4c4" font-family="Liberation Sans, sans-serif" font-weight="normal">23</text></g>
<g transform="translate(706.70 0) scale(0.78 1)"><text x="0.59 6.49" y="537.40" font-size="9.8" fill="#c4c4c4" font-family="Liberation Sans, sans-serif" font-weight="normal">00</text></g>
<g transform="translate(756.70 0) scale(0.78 1)"><text x="0.59 6.49" y="537.40" font-size="9.8" fill="#c4c4c4" font-family="Liberation Sans, sans-serif" font-weight="normal">01</text></g>
<g transform="translate(803.20 0) scale(0.78 1)"><text x="0.59 6.49" y="537.40" font-size="9.8" fill="#c4c4c4" font-family="Liberation Sans, sans-serif" font-weight="normal">02</text></g>
<g transform="translate(851.70 0) scale(0.78 1)"><text x="0.59 6.49" y="537.40" font-size="9.8" fill="#c4c4c4" font-family="Liberation Sans, sans-serif" font-weight="normal">03</text></g>
<g transform="translate(896.70 0) scale(0.78 1)"><text x="0.59 6.49" y="537.40" font-size="9.8" fill="#c4c4c4" font-family="Liberation Sans, sans-serif" font-weight="normal">04</text></g>
<g transform="translate(932.20 0) scale(0.78 1)"><text x="0.59 6.49" y="537.40" font-size="9.8" fill="#c4c4c4" font-family="Liberation Sans, sans-serif" font-weight="normal">05</text></g>
<g transform="translate(956.20 0) scale(0.78 1)"><text x="0.59 6.49" y="537.40" font-size="9.8" fill="#c4c4c4" font-family="Liberation Sans, sans-serif" font-weight="normal">06</text></g>
<g transform="translate(706.70 0) scale(0.78 1)"><text x="0.59 6.49" y="525.80" font-size="9.8" fill="#c4c4c4" font-family="Liberation Sans, sans-serif" font-weight="normal">01</text></g>
<rect x="0" y="200.3" width="1021" height="3.1" fill="#f4f4f4"/>
<rect x="0" y="411.6" width="1021" height="3.1" fill="#f4f4f4"/>
<rect x="2" y="200" width="3" height="5" fill="#d9d9d9"/><rect x="2" y="411.5" width="3" height="5" fill="#d9d9d9"/>
<path fill="#e6d67a" d="M7.1 81.6h0.9v2.0h-0.9zM6.8 81.7h1.4v1.3h-1.4zM14.3 79.5h0.9v3.9h-0.9zM14.1 80.9h1.4v1.3h-1.4zM15.8 78.4h0.9v3.3h-0.9zM15.6 80.3h1.4v1.3h-1.4zM18.9 78.8h0.9v4.6h-0.9zM18.6 80.3h1.4v1.3h-1.4zM19.6 80.1h0.9v2.5h-0.9zM19.3 80.1h1.4v1.3h-1.4zM21.2 79.9h0.9v1.9h-0.9zM20.9 79.9h1.4v1.3h-1.4zM22.7 78.3h0.9v3.4h-0.9zM22.4 78.8h1.4v1.3h-1.4zM23.5 77.6h0.9v3.8h-0.9zM23.2 78.4h1.4v1.3h-1.4zM25.8 78.6h0.9v2.2h-0.9zM25.5 78.8h1.4v1.3h-1.4zM26.6 78.8h0.9v1.8h-0.9zM26.3 78.8h1.4v1.3h-1.4zM27.4 77.3h0.9v4.3h-0.9zM27.1 79.2h1.4v1.3h-1.4zM29.0 78.5h0.9v4.3h-0.9zM28.7 80.1h1.4v1.3h-1.4zM29.8 81.2h0.9v2.4h-0.9zM29.5 81.3h1.4v1.3h-1.4zM30.6 80.7h0.9v1.6h-0.9zM30.3 80.9h1.4v1.3h-1.4zM31.4 80.9h0.9v1.4h-0.9zM31.1 80.9h1.4v1.3h-1.4zM32.2 81.3h0.9v2.9h-0.9zM31.9 81.3h1.4v1.3h-1.4zM33.8 80.8h0.9v4.8h-0.9zM33.5 82.3h1.4v1.3h-1.4zM35.4 81.7h0.9v2.9h-0.9zM35.1 83.2h1.4v1.3h-1.4zM39.4 84.4h0.9v4.7h-0.9zM39.1 85.9h1.4v1.3h-1.4zM40.2 84.8h0.9v4.1h-0.9zM39.9 86.3h1.4v1.4h-1.4zM41.0 87.2h0.9v1.7h-0.9zM40.7 87.6h1.4v1.3h-1.4zM41.8 87.2h0.9v2.7h-0.9zM41.5 87.5h1.4v1.3h-1.4zM47.2 61.2h0.9v3.8h-0.9zM46.9 62.2h1.4v1.3h-1.4zM48.8 60.1h0.9v2.8h-0.9zM48.5 60.3h1.4v1.3h-1.4zM49.6 57.2h0.9v3.7h-0.9zM49.3 59.1h1.4v1.3h-1.4zM51.1 57.7h0.9v4.4h-0.9zM50.8 59.4h1.4v1.3h-1.4zM54.9 61.7h0.9v2.4h-0.9zM54.5 62.0h1.4v1.3h-1.4zM55.6 61.9h0.9v3.1h-0.9zM55.3 62.0h1.4v1.3h-1.4zM58.6 58.6h0.9v2.3h-0.9zM58.3 58.7h1.4v1.5h-1.4zM59.4 58.3h0.9v2.4h-0.9zM59.0 58.7h1.4v1.3h-1.4zM60.1 58.0h0.9v2.2h-0.9zM59.8 58.1h1.4v1.3h-1.4zM65.8 60.5h0.9v1.6h-0.9zM65.5 60.5h1.4v1.3h-1.4zM66.6 59.3h0.9v4.4h-0.9zM66.3 60.6h1.4v1.3h-1.4zM71.1 58.1h0.9v1.7h-0.9zM70.8 58.1h1.4v1.3h-1.4zM71.8 57.9h0.9v3.3h-0.9zM71.5 57.9h1.4v1.3h-1.4zM75.7 57.2h0.9v3.0h-0.9zM75.4 58.3h1.4v1.3h-1.4zM79.6 61.2h0.9v1.5h-0.9zM79.3 61.2h1.4v1.3h-1.4zM80.4 60.2h0.9v2.9h-0.9zM80.1 61.5h1.4v1.3h-1.4zM82.0 61.3h0.9v3.4h-0.9zM81.7 62.5h1.4v1.3h-1.4zM82.8 60.8h0.9v3.2h-0.9zM82.5 62.5h1.4v1.3h-1.4zM84.4 62.6h0.9v4.4h-0.9zM84.1 63.7h1.4v1.3h-1.4zM86.0 63.7h0.9v1.4h-0.9zM85.7 63.7h1.4v1.3h-1.4zM90.9 67.1h0.9v1.8h-0.9zM90.6 67.1h1.4v1.3h-1.4zM92.6 68.4h0.9v1.9h-0.9zM92.3 68.5h1.4v1.3h-1.4zM94.3 66.2h0.9v3.6h-0.9zM94.0 67.5h1.4v1.3h-1.4zM95.9 66.2h0.9v3.5h-0.9zM95.6 67.5h1.4v1.3h-1.4zM96.8 64.2h0.9v4.4h-0.9zM96.5 65.9h1.4v1.8h-1.4zM98.4 64.3h0.9v4.2h-0.9zM98.1 65.7h1.4v1.3h-1.4zM100.1 67.0h0.9v1.8h-0.9zM99.8 67.1h1.4v1.3h-1.4zM102.6 67.8h0.9v2.8h-0.9zM102.3 68.5h1.4v1.3h-1.4zM109.2 78.4h0.9v2.7h-0.9zM108.9 79.1h1.4v1.3h-1.4zM110.1 77.8h0.9v3.1h-0.9zM109.8 79.5h1.4v1.3h-1.4zM116.6 77.9h0.9v3.2h-0.9zM116.3 78.3h1.4v1.3h-1.4zM117.4 76.1h0.9v2.9h-0.9zM117.1 77.6h1.4v1.3h-1.4zM119.0 76.2h0.9v4.2h-0.9zM118.7 78.2h1.4v1.3h-1.4zM119.8 77.5h0.9v1.6h-0.9zM119.5 77.8h1.4v1.3h-1.4zM120.6 76.7h0.9v3.4h-0.9zM120.3 77.0h1.4v1.3h-1.4zM121.4 75.9h0.9v2.2h-0.9zM121.1 76.6h1.4v1.3h-1.4zM123.8 75.4h0.9v3.1h-0.9zM123.5 76.7h1.4v1.3h-1.4zM124.6 76.5h0.9v1.6h-0.9zM124.3 76.8h1.4v1.3h-1.4zM125.4 76.0h0.9v2.3h-0.9zM125.1 76.6h1.4v1.3h-1.4zM126.3 73.2h0.9v3.7h-0.9zM126.0 75.1h1.4v1.5h-1.4zM133.8 66.0h0.9v3.1h-0.9zM133.5 67.6h1.4v1.3h-1.4zM142.4 56.7h0.9v2.9h-0.9zM142.1 57.5h1.4v1.3h-1.4zM143.2 56.6h0.9v2.2h-0.9zM142.9 57.5h1.4v1.3h-1.4zM144.0 56.1h0.9v4.2h-0.9zM143.7 57.9h1.4v1.3h-1.4zM146.4 59.4h0.9v2.1h-0.9zM146.1 59.9h1.4v1.3h-1.4zM148.0 58.7h0.9v2.6h-0.9zM147.7 59.8h1.4v1.3h-1.4zM148.8 59.1h0.9v2.2h-0.9zM148.5 59.8h1.4v1.3h-1.4zM151.2 60.5h0.9v2.0h-0.9zM150.9 60.8h1.4v1.3h-1.4zM153.6 60.2h0.9v4.6h-0.9zM153.3 61.8h1.4v1.3h-1.4zM156.8 64.0h0.9v2.0h-0.9zM156.5 64.3h1.4v1.3h-1.4zM159.8 63.5h0.9v3.0h-0.9zM159.6 65.2h1.4v1.3h-1.4zM161.3 63.7h0.9v3.3h-0.9zM161.1 65.5h1.4v1.3h-1.4zM163.6 67.4h0.9v2.6h-0.9zM163.3 67.4h1.4v1.3h-1.4zM164.3 65.6h0.9v3.1h-0.9zM164.1 67.4h1.4v1.3h-1.4zM166.6 64.2h0.9v4.0h-0.9zM166.3 65.7h1.4v1.3h-1.4zM168.8 63.2h0.9v1.6h-0.9zM168.6 63.4h1.4v1.3h-1.4zM171.8 62.0h0.9v3.4h-0.9zM171.6 63.0h1.4v1.3h-1.4zM172.6 61.9h0.9v2.5h-0.9zM172.3 63.0h1.4v1.3h-1.4zM174.1 64.5h0.9v1.8h-0.9zM173.8 64.7h1.4v1.3h-1.4zM176.4 62.5h0.9v3.3h-0.9zM176.1 64.4h1.4v1.3h-1.4zM177.2 62.2h0.9v4.6h-0.9zM176.9 63.7h1.4v1.3h-1.4zM179.7 62.5h0.9v2.9h-0.9zM179.4 62.7h1.4v1.3h-1.4zM180.5 61.7h0.9v3.2h-0.9zM180.2 62.6h1.4v1.3h-1.4zM183.8 56.8h0.9v3.5h-0.9zM183.5 58.2h1.4v1.3h-1.4zM186.3 57.9h0.9v3.5h-0.9zM186.0 58.3h1.4v1.3h-1.4zM187.1 58.2h0.9v2.3h-0.9zM186.8 58.6h1.4v1.3h-1.4zM190.4 60.4h0.9v2.1h-0.9zM190.1 60.4h1.4v1.3h-1.4zM192.1 61.0h0.9v1.7h-0.9zM191.8 61.1h1.4v1.3h-1.4zM195.3 61.2h0.9v4.0h-0.9zM195.1 62.9h1.4v1.3h-1.4zM196.1 61.1h0.9v2.9h-0.9zM195.8 62.5h1.4v1.3h-1.4zM196.8 59.9h0.9v2.9h-0.9zM196.6 61.3h1.4v1.3h-1.4zM200.6 58.1h0.9v2.7h-0.9zM200.3 58.6h1.4v1.3h-1.4zM201.4 57.9h0.9v2.5h-0.9zM201.1 58.5h1.4v1.3h-1.4zM202.9 57.2h0.9v2.1h-0.9zM202.6 57.8h1.4v1.3h-1.4zM203.7 58.6h0.9v2.0h-0.9zM203.4 58.7h1.4v1.3h-1.4zM206.0 58.1h0.9v2.5h-0.9zM205.7 58.8h1.4v1.3h-1.4zM211.6 61.4h0.9v2.4h-0.9zM211.3 62.2h1.4v1.3h-1.4zM212.4 61.7h0.9v3.2h-0.9zM212.1 61.8h1.4v1.3h-1.4zM214.0 61.9h0.9v2.7h-0.9zM213.7 62.9h1.4v1.3h-1.4zM219.3 65.4h0.9v1.4h-0.9zM219.1 65.5h1.4v1.3h-1.4zM220.1 64.7h0.9v3.7h-0.9zM219.8 65.5h1.4v1.3h-1.4zM221.6 64.8h0.9v1.8h-0.9zM221.3 64.8h1.4v1.3h-1.4zM223.1 64.1h0.9v3.2h-0.9zM222.8 64.2h1.4v1.3h-1.4zM226.1 60.0h0.9v4.3h-0.9zM225.8 61.8h1.4v1.3h-1.4zM229.2 58.9h0.9v3.0h-0.9zM228.9 59.6h1.4v1.3h-1.4zM233.2 60.2h0.9v3.0h-0.9zM232.9 60.6h1.4v1.3h-1.4zM234.0 59.4h0.9v2.8h-0.9zM233.7 60.6h1.4v1.3h-1.4zM234.8 59.9h0.9v3.4h-0.9zM234.5 61.3h1.4v1.3h-1.4zM235.6 59.3h0.9v3.4h-0.9zM235.3 61.2h1.4v1.3h-1.4zM238.0 62.2h0.9v3.2h-0.9zM237.7 62.4h1.4v1.3h-1.4zM238.8 61.7h0.9v4.3h-0.9zM238.5 62.8h1.4v1.3h-1.4zM241.1 62.2h0.9v3.1h-0.9zM240.8 62.3h1.4v1.3h-1.4zM241.8 62.1h0.9v3.1h-0.9zM241.6 62.2h1.4v1.3h-1.4zM242.6 62.2h0.9v1.3h-0.9zM242.3 62.2h1.4v1.3h-1.4zM244.1 62.8h0.9v3.2h-0.9zM243.8 63.2h1.4v1.3h-1.4zM248.6 63.1h0.9v1.6h-0.9zM248.3 63.1h1.4v1.3h-1.4zM253.1 62.3h0.9v4.5h-0.9zM252.8 63.6h1.4v1.3h-1.4zM253.8 62.9h0.9v3.4h-0.9zM253.6 63.6h1.4v1.3h-1.4zM258.4 66.7h0.9v3.0h-0.9zM258.1 68.4h1.4v1.3h-1.4zM263.2 65.3h0.9v2.0h-0.9zM262.9 65.4h1.4v1.3h-1.4zM264.0 65.2h0.9v1.8h-0.9zM263.7 65.3h1.4v1.3h-1.4zM264.8 64.6h0.9v1.5h-0.9zM264.5 64.8h1.4v1.3h-1.4zM266.4 61.1h0.9v4.4h-0.9zM266.1 63.0h1.4v1.3h-1.4zM268.0 61.0h0.9v3.1h-0.9zM267.7 62.3h1.4v1.3h-1.4zM269.6 61.9h0.9v3.2h-0.9zM269.3 62.4h1.4v1.3h-1.4zM271.1 62.9h0.9v3.1h-0.9zM270.8 63.4h1.4v1.3h-1.4zM272.6 63.7h0.9v4.1h-0.9zM272.3 64.9h1.4v1.3h-1.4zM274.9 65.1h0.9v3.9h-0.9zM274.6 66.5h1.4v1.3h-1.4zM276.4 66.3h0.9v4.2h-0.9zM276.1 67.4h1.4v1.3h-1.4zM277.2 66.1h0.9v3.1h-0.9zM276.9 67.4h1.4v1.3h-1.4zM279.5 66.5h0.9v3.3h-0.9zM279.2 67.3h1.4v1.3h-1.4zM282.6 68.3h0.9v2.1h-0.9zM282.3 68.6h1.4v1.3h-1.4zM284.2 67.9h0.9v2.8h-0.9zM283.9 68.1h1.4v1.3h-1.4zM285.7 69.1h0.9v2.7h-0.9zM285.4 69.2h1.4v1.3h-1.4zM288.0 68.5h0.9v2.3h-0.9zM287.7 69.1h1.4v1.3h-1.4zM288.8 68.1h0.9v3.2h-0.9zM288.5 69.6h1.4v1.3h-1.4zM289.6 69.2h0.9v2.0h-0.9zM289.3 69.6h1.4v1.3h-1.4zM292.9 73.5h0.9v3.8h-0.9zM292.6 73.5h1.4v2.3h-1.4zM293.8 75.7h0.9v3.5h-0.9zM293.5 75.8h1.4v1.9h-1.4zM295.4 79.0h0.9v1.5h-0.9zM295.1 79.1h1.4v1.3h-1.4zM296.9 79.0h0.9v3.1h-0.9zM296.6 79.1h1.4v1.3h-1.4zM298.5 80.4h0.9v2.6h-0.9zM298.2 80.6h1.4v1.3h-1.4zM300.0 81.2h0.9v1.6h-0.9zM299.7 81.4h1.4v1.3h-1.4zM300.8 81.1h0.9v2.0h-0.9zM300.5 81.7h1.4v1.3h-1.4zM301.6 81.2h0.9v3.7h-0.9zM301.3 82.0h1.4v1.3h-1.4zM302.4 81.7h0.9v2.8h-0.9zM302.1 82.3h1.4v1.3h-1.4zM303.3 83.0h0.9v3.6h-0.9zM303.0 83.5h1.4v2.6h-1.4zM308.6 95.0h0.9v2.1h-0.9zM308.3 95.1h1.4v1.3h-1.4zM313.1 83.0h0.9v3.0h-0.9zM312.8 83.1h1.4v1.8h-1.4zM315.6 75.1h0.9v4.3h-0.9zM315.3 76.8h1.4v1.6h-1.4zM316.4 75.7h0.9v3.4h-0.9zM316.1 76.8h1.4v1.3h-1.4zM317.1 75.8h0.9v3.0h-0.9zM316.8 76.9h1.4v1.3h-1.4zM317.9 76.8h0.9v1.5h-0.9zM317.6 76.9h1.4v1.3h-1.4zM324.0 75.0h0.9v2.5h-0.9zM323.7 76.0h1.4v1.3h-1.4zM324.8 75.5h0.9v2.4h-0.9zM324.5 75.5h1.4v1.3h-1.4zM326.4 73.9h0.9v2.7h-0.9zM326.1 75.1h1.4v1.3h-1.4zM328.0 74.8h0.9v2.6h-0.9zM327.7 76.1h1.4v1.3h-1.4zM331.2 74.2h0.9v3.0h-0.9zM330.9 74.3h1.4v1.3h-1.4zM332.0 73.4h0.9v2.6h-0.9zM331.7 73.8h1.4v1.3h-1.4zM335.2 72.1h0.9v3.2h-0.9zM334.9 72.1h1.4v1.3h-1.4zM336.8 71.6h0.9v2.6h-0.9zM336.5 72.6h1.4v1.3h-1.4zM341.8 80.2h0.9v5.4h-0.9zM341.5 81.3h1.4v2.5h-1.4zM349.2 87.7h0.9v1.4h-0.9zM348.9 87.8h1.4v1.3h-1.4zM350.7 87.7h0.9v2.6h-0.9zM350.4 88.6h1.4v1.3h-1.4zM352.3 87.2h0.9v2.4h-0.9zM352.0 88.0h1.4v1.3h-1.4zM353.0 86.1h0.9v4.5h-0.9zM352.7 87.9h1.4v1.3h-1.4zM358.5 84.4h0.9v5.1h-0.9zM358.2 86.3h1.4v1.3h-1.4zM359.3 85.6h0.9v2.0h-0.9zM359.0 85.8h1.4v1.3h-1.4zM363.2 86.5h0.9v1.6h-0.9zM362.9 86.8h1.4v1.3h-1.4zM368.6 85.4h0.9v1.5h-0.9zM368.3 85.6h1.4v1.3h-1.4zM369.4 85.0h0.9v3.0h-0.9zM369.1 85.1h1.4v1.3h-1.4zM370.9 83.4h0.9v2.1h-0.9zM370.6 83.5h1.4v1.3h-1.4zM373.2 80.9h0.9v1.7h-0.9zM372.9 81.2h1.4v1.3h-1.4zM376.4 80.5h0.9v1.4h-0.9zM376.1 80.6h1.4v1.3h-1.4zM377.2 80.8h0.9v2.0h-0.9zM376.9 81.0h1.4v1.3h-1.4zM378.0 80.3h0.9v2.3h-0.9zM377.7 81.1h1.4v1.3h-1.4zM378.8 78.7h0.9v2.7h-0.9zM378.5 79.9h1.4v1.3h-1.4zM385.4 79.3h0.9v2.7h-0.9zM385.1 79.8h1.4v1.3h-1.4zM386.1 79.3h0.9v2.6h-0.9zM385.8 79.9h1.4v1.3h-1.4zM389.2 79.5h0.9v2.1h-0.9zM388.9 80.2h1.4v1.3h-1.4zM389.9 80.1h0.9v1.5h-0.9zM389.6 80.2h1.4v1.3h-1.4zM390.7 79.6h0.9v1.4h-0.9zM390.4 79.6h1.4v1.3h-1.4zM391.5 79.4h0.9v2.2h-0.9zM391.2 79.4h1.4v1.3h-1.4zM395.4 75.6h0.9v2.7h-0.9zM395.1 76.9h1.4v1.3h-1.4zM399.6 81.7h0.9v2.1h-0.9zM399.3 81.7h1.4v1.3h-1.4zM402.1 85.0h0.9v1.4h-0.9zM401.8 85.0h1.4v1.3h-1.4zM402.9 83.6h0.9v4.3h-0.9zM402.6 85.4h1.4v1.5h-1.4zM406.2 86.9h0.9v3.4h-0.9zM405.9 88.8h1.4v1.3h-1.4zM407.0 89.0h0.9v2.3h-0.9zM406.7 89.1h1.4v1.3h-1.4zM408.6 90.4h0.9v1.5h-0.9zM408.3 90.5h1.4v1.3h-1.4zM409.4 90.5h0.9v1.8h-0.9zM409.1 90.8h1.4v1.3h-1.4zM410.2 89.1h0.9v3.8h-0.9zM409.9 90.6h1.4v1.3h-1.4zM412.6 92.0h0.9v2.2h-0.9zM412.3 92.2h1.4v1.3h-1.4zM419.2 98.1h0.9v4.2h-0.9zM418.9 99.6h1.4v2.0h-1.4zM419.9 100.2h0.9v3.8h-0.9zM419.6 101.6h1.4v1.9h-1.4zM427.1 108.4h0.9v3.4h-0.9zM426.8 110.1h1.4v1.3h-1.4zM429.6 108.3h0.9v4.4h-0.9zM429.3 110.0h1.4v1.3h-1.4zM435.4 98.9h0.9v1.8h-0.9zM435.1 99.0h1.4v1.3h-1.4zM437.0 97.4h0.9v4.7h-0.9zM436.7 98.9h1.4v1.3h-1.4zM437.8 98.3h0.9v1.7h-0.9zM437.5 98.4h1.4v1.3h-1.4zM441.8 93.2h0.9v2.6h-0.9zM441.5 94.3h1.4v1.3h-1.4zM446.5 88.3h0.9v2.9h-0.9zM446.2 89.5h1.4v1.3h-1.4zM448.0 87.1h0.9v2.4h-0.9zM447.7 87.7h1.4v1.3h-1.4zM450.4 85.4h0.9v3.3h-0.9zM450.1 85.7h1.4v1.3h-1.4zM451.2 85.8h0.9v4.1h-0.9zM450.9 86.8h1.4v1.3h-1.4zM452.7 86.6h0.9v3.3h-0.9zM452.4 87.0h1.4v1.3h-1.4zM454.3 84.8h0.9v3.5h-0.9zM454.0 86.7h1.4v1.3h-1.4zM455.0 86.0h0.9v2.5h-0.9zM454.7 86.7h1.4v1.3h-1.4zM455.8 86.7h0.9v2.9h-0.9zM455.5 86.8h1.4v1.3h-1.4zM456.6 86.5h0.9v1.8h-0.9zM456.3 86.7h1.4v1.3h-1.4zM463.1 76.9h0.9v2.4h-0.9zM462.8 77.9h1.4v1.3h-1.4zM466.9 79.9h0.9v2.4h-0.9zM466.6 80.4h1.4v1.3h-1.4zM469.2 79.7h0.9v4.8h-0.9zM468.9 81.4h1.4v1.5h-1.4zM469.9 82.7h0.9v2.4h-0.9zM469.6 82.7h1.4v1.3h-1.4zM472.3 84.2h0.9v3.1h-0.9zM472.0 84.3h1.4v1.3h-1.4zM473.8 84.6h0.9v2.1h-0.9zM473.5 84.9h1.4v1.3h-1.4zM474.6 83.6h0.9v2.5h-0.9zM474.3 84.6h1.4v1.3h-1.4zM476.2 84.3h0.9v1.7h-0.9zM475.9 84.7h1.4v1.3h-1.4zM477.7 84.9h0.9v1.6h-0.9zM477.4 84.9h1.4v1.3h-1.4zM478.5 83.4h0.9v3.3h-0.9zM478.2 83.6h1.4v1.4h-1.4zM479.3 82.4h0.9v2.9h-0.9zM479.0 83.6h1.4v1.3h-1.4zM480.8 81.8h0.9v4.2h-0.9zM480.5 83.6h1.4v1.3h-1.4zM485.4 83.1h0.9v2.0h-0.9zM485.1 83.6h1.4v1.3h-1.4zM486.3 82.4h0.9v3.6h-0.9zM486.0 83.6h1.4v1.3h-1.4zM487.1 83.3h0.9v2.6h-0.9zM486.8 84.1h1.4v1.3h-1.4zM488.8 86.0h0.9v3.1h-0.9zM488.5 86.4h1.4v1.3h-1.4zM489.6 86.3h0.9v2.5h-0.9zM489.3 86.4h1.4v1.3h-1.4zM494.2 82.0h0.9v2.9h-0.9zM493.9 82.1h1.4v1.7h-1.4zM495.8 84.2h0.9v2.1h-0.9zM495.5 85.0h1.4v1.3h-1.4zM497.4 85.8h0.9v1.6h-0.9zM497.1 86.0h1.4v1.3h-1.4zM498.1 83.5h0.9v3.1h-0.9zM497.8 85.0h1.4v1.3h-1.4zM498.9 83.2h0.9v4.6h-0.9zM498.6 84.8h1.4v1.3h-1.4zM500.4 83.2h0.9v3.1h-0.9zM500.1 84.7h1.4v1.3h-1.4zM501.1 84.5h0.9v3.2h-0.9zM500.8 84.9h1.4v1.3h-1.4zM501.9 84.4h0.9v3.1h-0.9zM501.6 85.2h1.4v1.3h-1.4zM503.4 86.2h0.9v1.7h-0.9zM503.1 86.3h1.4v1.3h-1.4zM504.2 85.3h0.9v2.6h-0.9zM503.9 86.4h1.4v1.3h-1.4zM505.7 85.5h0.9v2.5h-0.9zM505.4 86.7h1.4v1.3h-1.4zM506.5 85.4h0.9v3.2h-0.9zM506.2 86.8h1.4v1.3h-1.4zM507.3 86.4h0.9v2.6h-0.9zM507.0 87.1h1.4v1.3h-1.4zM508.0 85.9h0.9v3.9h-0.9zM507.7 87.0h1.4v1.3h-1.4zM509.6 87.8h0.9v1.5h-0.9zM509.3 88.0h1.4v1.3h-1.4zM511.9 85.8h0.9v3.3h-0.9zM511.6 86.9h1.4v1.3h-1.4zM514.3 85.9h0.9v3.0h-0.9zM514.0 87.0h1.4v1.3h-1.4zM519.1 91.6h0.9v2.1h-0.9zM518.8 91.7h1.4v1.3h-1.4zM522.1 91.9h0.9v1.9h-0.9zM521.8 92.3h1.4v1.3h-1.4zM523.6 93.2h0.9v2.0h-0.9zM523.3 93.4h1.4v1.3h-1.4zM524.4 93.2h0.9v1.8h-0.9zM524.0 93.4h1.4v1.3h-1.4zM527.4 95.8h0.9v1.8h-0.9zM527.0 95.9h1.4v1.3h-1.4zM532.6 93.5h0.9v3.7h-0.9zM532.3 95.1h1.4v1.3h-1.4zM534.9 93.9h0.9v2.9h-0.9zM534.5 94.0h1.4v1.3h-1.4zM536.4 91.9h0.9v3.9h-0.9zM536.1 93.5h1.4v1.3h-1.4zM538.0 91.8h0.9v1.9h-0.9zM537.7 92.0h1.4v1.3h-1.4zM538.8 91.0h0.9v2.2h-0.9zM538.5 91.5h1.4v1.3h-1.4zM541.9 91.4h0.9v3.9h-0.9zM541.6 92.2h1.4v1.3h-1.4zM543.5 92.8h0.9v3.3h-0.9zM543.2 93.8h1.4v1.3h-1.4zM544.3 93.2h0.9v4.3h-0.9zM544.0 94.6h1.4v1.3h-1.4zM546.6 96.2h0.9v1.7h-0.9zM546.3 96.3h1.4v1.3h-1.4zM548.1 95.3h0.9v1.8h-0.9zM547.8 95.8h1.4v1.3h-1.4zM550.4 94.7h0.9v3.3h-0.9zM550.0 95.9h1.4v1.3h-1.4zM555.0 94.5h0.9v2.0h-0.9zM554.7 95.0h1.4v1.3h-1.4zM562.8 82.9h0.9v3.5h-0.9zM562.5 83.8h1.4v1.3h-1.4zM566.6 84.7h0.9v3.0h-0.9zM566.3 86.0h1.4v1.3h-1.4zM571.9 90.0h0.9v4.3h-0.9zM571.5 91.3h1.4v1.3h-1.4zM572.6 89.9h0.9v2.9h-0.9zM572.3 91.3h1.4v1.3h-1.4zM577.1 93.8h0.9v2.1h-0.9zM576.8 94.1h1.4v1.3h-1.4zM577.9 92.8h0.9v3.6h-0.9zM577.5 94.1h1.4v1.3h-1.4zM580.1 93.9h0.9v2.0h-0.9zM579.8 94.2h1.4v1.3h-1.4zM581.6 94.6h0.9v3.8h-0.9zM581.3 95.5h1.4v1.3h-1.4zM583.9 97.4h0.9v3.3h-0.9zM583.5 97.5h1.4v1.3h-1.4zM588.4 90.8h0.9v3.3h-0.9zM588.0 90.8h1.4v1.3h-1.4zM589.9 91.0h0.9v2.6h-0.9zM589.5 91.1h1.4v1.3h-1.4zM593.6 92.4h0.9v2.6h-0.9zM593.3 92.9h1.4v1.3h-1.4zM597.4 93.8h0.9v3.3h-0.9zM597.0 95.8h1.4v1.3h-1.4zM598.9 96.4h0.9v1.6h-0.9zM598.5 96.5h1.4v1.3h-1.4zM599.6 94.9h0.9v3.0h-0.9zM599.3 96.6h1.4v1.3h-1.4zM602.9 98.8h0.9v3.0h-0.9zM602.6 100.0h1.4v1.3h-1.4zM606.2 98.4h0.9v2.7h-0.9zM605.9 99.2h1.4v1.3h-1.4zM608.6 94.4h0.9v3.3h-0.9zM608.3 95.1h1.4v1.6h-1.4zM610.1 96.3h0.9v3.1h-0.9zM609.8 97.8h1.4v1.6h-1.4zM613.1 103.6h0.9v3.3h-0.9zM612.8 104.9h1.4v1.8h-1.4zM620.4 102.2h0.9v2.6h-0.9zM620.0 102.7h1.4v1.3h-1.4zM621.1 100.9h0.9v4.4h-0.9zM620.8 102.8h1.4v1.3h-1.4zM622.6 101.1h0.9v2.7h-0.9zM622.3 101.9h1.4v1.3h-1.4zM626.4 98.8h0.9v3.2h-0.9zM626.0 99.9h1.4v1.3h-1.4zM627.1 99.9h0.9v1.6h-0.9zM626.8 99.9h1.4v1.3h-1.4zM627.9 99.8h0.9v1.4h-0.9zM627.5 99.9h1.4v1.3h-1.4zM629.4 100.6h0.9v2.5h-0.9zM629.0 100.7h1.4v1.3h-1.4zM630.1 99.0h0.9v4.7h-0.9zM629.8 101.0h1.4v1.3h-1.4zM646.9 91.9h0.9v2.4h-0.9zM646.6 92.2h1.4v1.8h-1.4zM648.5 89.9h0.9v2.9h-0.9zM648.2 91.5h1.4v1.3h-1.4zM651.6 85.5h0.9v2.9h-0.9zM651.3 87.0h1.4v1.3h-1.4zM653.1 87.2h0.9v3.3h-0.9zM652.8 88.5h1.4v1.3h-1.4zM657.6 92.2h0.9v2.8h-0.9zM657.3 92.4h1.4v1.3h-1.4zM660.7 93.7h0.9v2.3h-0.9zM660.4 93.8h1.4v1.3h-1.4zM661.5 92.7h0.9v2.5h-0.9zM661.2 93.8h1.4v1.3h-1.4zM665.4 95.8h0.9v2.0h-0.9zM665.1 96.0h1.4v1.3h-1.4zM668.5 94.5h0.9v1.7h-0.9zM668.2 94.6h1.4v1.3h-1.4zM677.1 97.2h0.9v4.4h-0.9zM676.8 98.5h1.4v1.3h-1.4zM677.9 98.4h0.9v2.5h-0.9zM677.5 98.5h1.4v1.3h-1.4zM680.1 95.8h0.9v4.6h-0.9zM679.8 97.3h1.4v1.3h-1.4zM682.4 94.7h0.9v3.9h-0.9zM682.0 96.6h1.4v1.3h-1.4zM683.1 95.1h0.9v4.6h-0.9zM682.8 96.9h1.4v1.3h-1.4zM683.9 96.2h0.9v1.7h-0.9zM683.5 96.4h1.4v1.3h-1.4zM684.6 95.5h0.9v3.7h-0.9zM684.3 96.2h1.4v1.3h-1.4zM686.1 94.7h0.9v4.6h-0.9zM685.8 96.5h1.4v1.3h-1.4zM686.9 95.5h0.9v3.9h-0.9zM686.5 96.5h1.4v1.3h-1.4zM687.6 94.7h0.9v4.2h-0.9zM687.3 96.2h1.4v1.3h-1.4zM689.9 95.2h0.9v3.3h-0.9zM689.5 95.6h1.4v1.3h-1.4zM690.6 95.6h0.9v1.6h-0.9zM690.3 95.6h1.4v1.3h-1.4zM691.4 94.7h0.9v3.8h-0.9zM691.0 95.8h1.4v1.3h-1.4zM696.6 84.8h0.9v3.4h-0.9zM696.3 85.1h1.4v2.7h-1.4zM701.9 75.9h0.9v3.2h-0.9zM701.5 76.5h1.4v1.3h-1.4zM704.9 70.9h0.9v2.6h-0.9zM704.5 71.9h1.4v1.3h-1.4zM705.6 70.7h0.9v2.6h-0.9zM705.3 71.5h1.4v1.3h-1.4zM708.0 71.2h0.9v3.6h-0.9zM707.7 72.1h1.4v1.3h-1.4zM714.4 52.8h0.9v4.9h-0.9zM714.1 53.8h1.4v2.5h-1.4zM719.2 45.5h0.9v2.1h-0.9zM718.9 45.6h1.4v1.3h-1.4zM722.4 46.1h0.9v3.4h-0.9zM722.1 46.5h1.4v2.5h-1.4zM725.6 52.1h0.9v3.8h-0.9zM725.3 53.2h1.4v1.8h-1.4zM728.6 51.8h0.9v4.0h-0.9zM728.3 52.8h1.4v1.3h-1.4zM741.2 70.1h0.9v3.0h-0.9zM740.9 71.0h1.4v1.6h-1.4zM742.8 65.8h0.9v3.5h-0.9zM742.5 67.6h1.4v1.3h-1.4zM746.6 71.0h0.9v3.9h-0.9zM746.3 71.8h1.4v2.6h-1.4zM761.2 107.7h0.9v3.7h-0.9zM760.9 109.4h1.4v1.3h-1.4zM762.8 107.9h0.9v1.7h-0.9zM762.5 108.1h1.4v1.3h-1.4zM763.6 108.0h0.9v2.3h-0.9zM763.3 108.1h1.4v1.3h-1.4zM769.6 118.8h0.9v1.7h-0.9zM769.3 118.8h1.4v1.6h-1.4zM770.4 120.4h0.9v2.1h-0.9zM770.0 120.4h1.4v2.1h-1.4zM772.6 123.8h0.9v2.7h-0.9zM772.3 125.1h1.4v1.3h-1.4zM775.6 130.7h0.9v3.2h-0.9zM775.3 131.4h1.4v1.6h-1.4zM776.4 132.9h0.9v1.4h-0.9zM776.1 132.9h1.4v1.3h-1.4zM785.2 153.1h0.9v5.1h-0.9zM784.9 154.8h1.4v1.9h-1.4zM793.4 154.8h0.9v2.6h-0.9zM793.1 155.1h1.4v1.3h-1.4zM794.2 152.8h0.9v3.3h-0.9zM793.9 154.7h1.4v1.3h-1.4zM795.0 153.8h0.9v3.9h-0.9zM794.7 154.6h1.4v1.3h-1.4zM799.0 155.8h0.9v3.1h-0.9zM798.7 156.1h1.4v2.6h-1.4zM802.1 163.2h0.9v1.8h-0.9zM801.8 163.6h1.4v1.3h-1.4zM803.6 164.2h0.9v1.5h-0.9zM803.3 164.4h1.4v1.3h-1.4zM806.8 169.0h0.9v2.9h-0.9zM806.5 170.1h1.4v1.5h-1.4zM807.6 169.8h0.9v3.1h-0.9zM807.3 171.5h1.4v1.3h-1.4zM812.4 166.7h0.9v3.5h-0.9zM812.1 166.8h1.4v2.0h-1.4zM814.0 170.3h0.9v2.6h-0.9zM813.7 170.6h1.4v1.8h-1.4zM817.2 177.5h0.9v2.0h-0.9zM816.9 178.1h1.4v1.3h-1.4zM819.6 178.7h0.9v2.4h-0.9zM819.3 179.2h1.4v1.3h-1.4zM820.4 179.1h0.9v1.5h-0.9zM820.1 179.2h1.4v1.3h-1.4zM821.3 177.6h0.9v4.8h-0.9zM821.0 179.2h1.4v1.3h-1.4zM822.1 177.1h0.9v3.9h-0.9zM821.8 178.9h1.4v1.3h-1.4zM824.6 175.3h0.9v2.3h-0.9zM824.3 175.9h1.4v1.3h-1.4zM826.3 174.6h0.9v1.5h-0.9zM826.0 174.7h1.4v1.3h-1.4zM830.4 172.5h0.9v2.4h-0.9zM830.1 172.7h1.4v1.3h-1.4zM831.3 172.2h0.9v1.5h-0.9zM831.0 172.4h1.4v1.3h-1.4zM835.4 167.2h0.9v3.0h-0.9zM835.1 168.7h1.4v1.3h-1.4zM836.3 168.5h0.9v3.4h-0.9zM836.0 168.7h1.4v1.3h-1.4zM841.3 163.6h0.9v3.0h-0.9zM841.0 165.3h1.4v1.3h-1.4zM842.1 164.4h0.9v2.8h-0.9zM841.8 165.3h1.4v1.3h-1.4zM845.4 163.4h0.9v4.8h-0.9zM845.1 165.3h1.4v1.3h-1.4zM849.6 168.3h0.9v2.7h-0.9zM849.3 169.5h1.4v1.3h-1.4zM851.3 167.4h0.9v2.9h-0.9zM851.0 168.3h1.4v1.3h-1.4zM852.1 168.3h0.9v2.0h-0.9zM851.8 168.3h1.4v1.3h-1.4zM853.8 169.1h0.9v2.1h-0.9zM853.5 169.3h1.4v1.3h-1.4zM854.6 169.5h0.9v3.7h-0.9zM854.3 170.0h1.4v1.3h-1.4zM855.4 169.2h0.9v3.0h-0.9zM855.1 170.4h1.4v1.3h-1.4zM857.9 169.6h0.9v2.2h-0.9zM857.6 169.6h1.4v1.3h-1.4zM859.6 169.6h0.9v2.0h-0.9zM859.3 170.2h1.4v1.3h-1.4zM860.4 169.8h0.9v3.6h-0.9zM860.0 170.2h1.4v1.3h-1.4zM871.6 168.7h0.9v2.7h-0.9zM871.3 169.9h1.4v1.3h-1.4zM875.8 166.2h0.9v2.1h-0.9zM875.5 166.4h1.4v1.3h-1.4zM877.4 165.3h0.9v3.5h-0.9zM877.1 166.3h1.4v1.3h-1.4zM879.8 167.8h0.9v4.4h-0.9zM879.5 169.0h1.4v1.3h-1.4zM882.3 168.6h0.9v4.7h-0.9zM882.0 170.4h1.4v1.3h-1.4zM883.1 170.7h0.9v2.1h-0.9zM882.8 170.7h1.4v1.3h-1.4zM883.9 169.8h0.9v3.3h-0.9zM883.6 171.0h1.4v1.3h-1.4zM885.6 170.9h0.9v2.6h-0.9zM885.3 172.0h1.4v1.3h-1.4zM890.2 161.1h0.9v3.7h-0.9zM889.9 162.4h1.4v1.8h-1.4zM893.4 157.8h0.9v2.8h-0.9zM893.1 158.0h1.4v1.3h-1.4zM895.1 157.2h0.9v2.8h-0.9zM894.8 157.4h1.4v1.3h-1.4zM898.4 153.3h0.9v2.0h-0.9zM898.1 153.7h1.4v1.4h-1.4zM900.0 152.8h0.9v2.7h-0.9zM899.7 152.9h1.4v1.3h-1.4zM901.6 152.6h0.9v2.6h-0.9zM901.3 152.6h1.4v1.3h-1.4zM903.3 153.1h0.9v2.0h-0.9zM903.0 153.4h1.4v1.3h-1.4zM904.1 153.8h0.9v1.8h-0.9zM903.8 154.2h1.4v1.3h-1.4zM905.8 153.9h0.9v3.3h-0.9zM905.5 154.2h1.4v1.3h-1.4zM910.8 158.7h0.9v2.9h-0.9zM910.5 158.7h1.4v1.3h-1.4zM911.6 158.5h0.9v3.1h-0.9zM911.3 158.9h1.4v1.3h-1.4zM913.1 158.7h0.9v1.7h-0.9zM912.8 159.0h1.4v1.3h-1.4zM922.1 156.8h0.9v2.9h-0.9zM921.8 158.3h1.4v1.3h-1.4zM929.6 161.4h0.9v2.8h-0.9zM929.3 162.0h1.4v1.3h-1.4zM930.4 162.1h0.9v2.6h-0.9zM930.1 162.6h1.4v1.3h-1.4zM932.1 163.3h0.9v1.8h-0.9zM931.8 163.5h1.4v1.3h-1.4zM933.8 164.0h0.9v3.8h-0.9zM933.5 165.2h1.4v1.3h-1.4zM936.3 166.6h0.9v3.8h-0.9zM936.0 168.0h1.4v1.3h-1.4zM937.1 167.0h0.9v4.3h-0.9zM936.8 168.0h1.4v1.3h-1.4zM937.9 168.1h0.9v1.7h-0.9zM937.6 168.4h1.4v1.3h-1.4zM940.4 170.5h0.9v2.1h-0.9zM940.0 170.6h1.4v1.3h-1.4zM941.9 170.2h0.9v2.3h-0.9zM941.5 171.1h1.4v1.3h-1.4zM942.6 169.8h0.9v4.3h-0.9zM942.3 171.0h1.4v1.3h-1.4zM943.4 170.4h0.9v2.3h-0.9zM943.0 171.0h1.4v1.3h-1.4zM944.9 170.2h0.9v4.1h-0.9zM944.5 171.7h1.4v1.3h-1.4zM945.6 169.9h0.9v3.6h-0.9zM945.3 171.6h1.4v1.3h-1.4zM946.4 170.8h0.9v3.2h-0.9zM946.0 171.6h1.4v1.3h-1.4zM947.9 172.2h0.9v3.3h-0.9zM947.5 173.1h1.4v1.3h-1.4zM949.4 172.2h0.9v4.4h-0.9zM949.0 173.9h1.4v1.3h-1.4zM950.1 173.2h0.9v2.6h-0.9zM949.8 173.8h1.4v1.3h-1.4zM952.4 174.6h0.9v2.9h-0.9zM952.1 176.0h1.4v1.3h-1.4zM953.2 175.6h0.9v3.5h-0.9zM952.9 176.0h1.4v1.3h-1.4zM954.0 175.6h0.9v3.2h-0.9zM953.7 176.0h1.4v1.3h-1.4zM954.8 176.0h0.9v1.5h-0.9zM954.5 176.0h1.4v1.3h-1.4zM956.4 174.4h0.9v3.8h-0.9zM956.1 175.6h1.4v1.3h-1.4zM958.8 176.2h0.9v1.8h-0.9zM958.5 176.6h1.4v1.3h-1.4zM959.6 176.6h0.9v4.1h-0.9zM959.3 177.6h1.4v1.3h-1.4zM963.6 175.6h0.9v5.2h-0.9zM963.3 177.5h1.4v1.3h-1.4zM966.8 176.9h0.9v3.9h-0.9zM966.5 178.6h1.4v1.3h-1.4zM967.6 176.6h0.9v4.7h-0.9zM967.3 178.4h1.4v1.3h-1.4z"/>
<path fill="#ff2020" d="M6.3 80.6h0.9v2.4h-0.9zM6.0 81.7h1.4v1.3h-1.4zM7.8 80.7h0.9v1.4h-0.9zM7.5 80.7h1.4v1.3h-1.4zM8.6 80.6h0.9v1.6h-0.9zM8.3 80.7h1.4v1.3h-1.4zM10.8 80.2h0.9v3.1h-0.9zM10.6 80.5h1.4v1.3h-1.4zM11.6 78.8h0.9v2.8h-0.9zM11.3 79.8h1.4v1.3h-1.4zM13.6 80.8h0.9v11.5h-0.9zM13.3 81.1h1.4v10.3h-1.4zM15.1 79.6h0.9v3.7h-0.9zM14.8 80.3h1.4v1.3h-1.4zM16.6 80.3h0.9v2.1h-0.9zM16.3 80.4h1.4v1.3h-1.4zM17.4 78.2h0.9v3.5h-0.9zM17.1 79.6h1.4v1.3h-1.4zM21.9 79.2h0.9v2.7h-0.9zM21.6 79.3h1.4v1.3h-1.4zM24.3 78.1h0.9v2.1h-0.9zM24.0 78.4h1.4v1.3h-1.4zM38.6 85.1h0.9v3.4h-0.9zM38.3 85.9h1.4v1.3h-1.4zM45.6 63.9h0.9v2.3h-0.9zM45.3 64.1h1.4v1.9h-1.4zM46.4 61.5h0.9v4.3h-0.9zM46.1 62.4h1.4v1.6h-1.4zM48.0 58.8h0.9v4.8h-0.9zM47.7 60.5h1.4v1.7h-1.4zM51.9 57.5h0.9v4.3h-0.9zM51.5 59.4h1.4v1.3h-1.4zM56.4 60.5h0.9v3.9h-0.9zM56.0 61.4h1.4v1.3h-1.4zM57.9 59.6h0.9v2.0h-0.9zM57.5 60.2h1.4v1.3h-1.4zM60.9 55.6h0.9v3.4h-0.9zM60.5 56.9h1.4v1.3h-1.4zM61.6 54.7h0.9v3.6h-0.9zM61.3 56.4h1.4v1.3h-1.4zM64.1 56.6h0.9v3.4h-0.9zM63.8 58.4h1.4v1.3h-1.4zM64.9 58.1h0.9v2.9h-0.9zM64.6 59.6h1.4v1.3h-1.4zM67.3 59.2h0.9v2.5h-0.9zM67.0 60.2h1.4v1.3h-1.4zM68.1 60.0h0.9v3.3h-0.9zM67.8 60.2h1.4v1.3h-1.4zM68.8 58.1h0.9v4.8h-0.9zM68.5 60.1h1.4v1.3h-1.4zM69.6 58.3h0.9v2.4h-0.9zM69.3 59.0h1.4v1.3h-1.4zM70.3 57.0h0.9v2.5h-0.9zM70.0 58.2h1.4v1.3h-1.4zM73.4 57.2h0.9v1.7h-0.9zM73.1 57.5h1.4v1.3h-1.4zM74.2 56.0h0.9v3.0h-0.9zM73.9 57.5h1.4v1.3h-1.4zM85.2 62.5h0.9v3.5h-0.9zM84.9 63.7h1.4v1.3h-1.4zM86.8 63.3h0.9v1.7h-0.9zM86.5 63.5h1.4v1.3h-1.4zM87.6 61.8h0.9v4.0h-0.9zM87.3 63.4h1.4v1.3h-1.4zM93.4 67.1h0.9v1.9h-0.9zM93.1 67.5h1.4v1.3h-1.4zM97.6 65.6h0.9v2.2h-0.9zM97.3 65.7h1.4v1.3h-1.4zM99.3 65.2h0.9v3.6h-0.9zM99.0 66.3h1.4v1.3h-1.4zM100.9 66.4h0.9v3.1h-0.9zM100.6 67.2h1.4v1.3h-1.4zM105.1 71.7h0.9v3.4h-0.9zM104.8 72.4h1.4v2.3h-1.4zM108.4 78.0h0.9v3.5h-0.9zM108.1 79.1h1.4v1.3h-1.4zM110.9 79.5h0.9v1.9h-0.9zM110.6 79.5h1.4v1.3h-1.4zM113.3 77.1h0.9v3.2h-0.9zM113.0 79.0h1.4v1.3h-1.4zM115.8 77.9h0.9v2.2h-0.9zM115.5 78.5h1.4v1.3h-1.4zM127.1 73.7h0.9v2.6h-0.9zM126.8 74.5h1.4v1.3h-1.4zM127.9 72.8h0.9v3.4h-0.9zM127.6 73.0h1.4v1.5h-1.4zM128.8 70.7h0.9v5.0h-0.9zM128.5 72.4h1.4v1.3h-1.4zM129.6 71.5h0.9v1.5h-0.9zM129.3 71.7h1.4v1.3h-1.4zM130.4 70.5h0.9v1.8h-0.9zM130.1 70.7h1.4v1.3h-1.4zM132.1 69.0h0.9v2.1h-0.9zM131.8 69.4h1.4v1.3h-1.4zM132.9 66.1h0.9v3.4h-0.9zM132.6 68.0h1.4v1.4h-1.4zM134.6 66.2h0.9v2.4h-0.9zM134.3 66.7h1.4v1.3h-1.4zM135.4 65.1h0.9v2.9h-0.9zM135.1 66.7h1.4v1.3h-1.4zM136.2 63.2h0.9v4.2h-0.9zM135.9 64.8h1.4v1.9h-1.4zM136.9 63.7h0.9v3.6h-0.9zM136.6 64.2h1.4v1.3h-1.4zM138.5 61.3h0.9v3.7h-0.9zM138.2 62.1h1.4v1.8h-1.4zM139.3 60.9h0.9v3.7h-0.9zM139.0 62.0h1.4v1.3h-1.4zM140.0 60.7h0.9v2.7h-0.9zM139.7 60.7h1.4v1.3h-1.4zM141.6 56.7h0.9v3.7h-0.9zM141.3 57.7h1.4v1.5h-1.4zM150.4 60.4h0.9v3.5h-0.9zM150.1 60.8h1.4v1.3h-1.4zM152.0 61.1h0.9v1.9h-0.9zM151.7 61.2h1.4v1.3h-1.4zM154.4 60.1h0.9v3.5h-0.9zM154.1 61.8h1.4v1.3h-1.4zM158.3 64.3h0.9v3.3h-0.9zM158.1 65.7h1.4v1.3h-1.4zM159.1 64.8h0.9v3.5h-0.9zM158.8 65.2h1.4v1.3h-1.4zM160.6 63.9h0.9v2.6h-0.9zM160.3 65.2h1.4v1.3h-1.4zM162.1 65.1h0.9v2.0h-0.9zM161.8 65.5h1.4v1.3h-1.4zM165.1 64.5h0.9v5.0h-0.9zM164.8 66.4h1.4v1.3h-1.4zM165.8 65.1h0.9v2.5h-0.9zM165.6 65.7h1.4v1.3h-1.4zM167.3 64.8h0.9v2.6h-0.9zM167.1 65.8h1.4v1.3h-1.4zM168.1 63.2h0.9v2.7h-0.9zM167.8 64.6h1.4v1.3h-1.4zM169.6 61.9h0.9v3.6h-0.9zM169.3 62.3h1.4v1.3h-1.4zM170.3 62.0h0.9v1.6h-0.9zM170.1 62.3h1.4v1.3h-1.4zM171.1 61.8h0.9v3.1h-0.9zM170.8 63.0h1.4v1.3h-1.4zM178.1 62.3h0.9v1.7h-0.9zM177.8 62.3h1.4v1.4h-1.4zM181.3 60.9h0.9v1.8h-0.9zM181.0 61.0h1.4v1.6h-1.4zM182.1 58.9h0.9v2.5h-0.9zM181.8 59.9h1.4v1.3h-1.4zM183.0 57.5h0.9v2.6h-0.9zM182.7 58.6h1.4v1.3h-1.4zM184.6 56.7h0.9v2.6h-0.9zM184.3 57.2h1.4v1.3h-1.4zM187.9 58.3h0.9v1.9h-0.9zM187.6 58.8h1.4v1.3h-1.4zM189.6 59.9h0.9v3.5h-0.9zM189.3 60.4h1.4v1.3h-1.4zM191.3 60.5h0.9v2.3h-0.9zM191.0 60.6h1.4v1.3h-1.4zM193.8 61.2h0.9v1.6h-0.9zM193.5 61.4h1.4v1.3h-1.4zM194.6 61.6h0.9v2.0h-0.9zM194.3 62.2h1.4v1.3h-1.4zM197.6 59.4h0.9v2.5h-0.9zM197.3 60.2h1.4v1.3h-1.4zM198.3 57.9h0.9v4.2h-0.9zM198.1 59.1h1.4v1.3h-1.4zM199.1 56.9h0.9v2.6h-0.9zM198.8 58.2h1.4v1.3h-1.4zM202.2 57.2h0.9v2.2h-0.9zM201.9 57.8h1.4v1.3h-1.4zM204.5 57.5h0.9v2.0h-0.9zM204.2 58.2h1.4v1.3h-1.4zM207.6 59.7h0.9v3.4h-0.9zM207.3 59.9h1.4v1.3h-1.4zM209.2 60.3h0.9v1.7h-0.9zM208.9 60.3h1.4v1.3h-1.4zM213.2 61.7h0.9v2.8h-0.9zM212.9 61.8h1.4v1.3h-1.4zM217.1 64.3h0.9v2.0h-0.9zM216.8 64.9h1.4v1.3h-1.4zM220.8 64.3h0.9v2.4h-0.9zM220.6 65.3h1.4v1.3h-1.4zM222.3 63.3h0.9v2.4h-0.9zM222.1 64.2h1.4v1.3h-1.4zM223.8 63.2h0.9v2.4h-0.9zM223.6 63.2h1.4v1.3h-1.4zM224.6 62.7h0.9v2.1h-0.9zM224.3 63.2h1.4v1.3h-1.4zM225.3 61.1h0.9v2.8h-0.9zM225.1 61.9h1.4v1.6h-1.4zM227.6 60.1h0.9v2.7h-0.9zM227.3 60.1h1.4v1.3h-1.4zM228.4 57.8h0.9v3.2h-0.9zM228.1 59.6h1.4v1.3h-1.4zM231.6 58.4h0.9v3.2h-0.9zM231.3 59.7h1.4v1.3h-1.4zM239.6 61.3h0.9v4.0h-0.9zM239.3 62.5h1.4v1.3h-1.4zM240.3 61.6h0.9v2.5h-0.9zM240.1 62.5h1.4v1.3h-1.4zM244.8 63.2h0.9v2.9h-0.9zM244.6 63.2h1.4v1.3h-1.4zM245.6 64.3h0.9v1.6h-0.9zM245.3 64.4h1.4v1.3h-1.4zM246.3 62.7h0.9v4.3h-0.9zM246.1 64.2h1.4v1.3h-1.4zM247.1 63.3h0.9v2.6h-0.9zM246.8 64.2h1.4v1.3h-1.4zM247.8 62.1h0.9v2.8h-0.9zM247.6 63.4h1.4v1.3h-1.4zM249.3 62.3h0.9v2.1h-0.9zM249.1 62.7h1.4v1.3h-1.4zM250.8 61.9h0.9v3.2h-0.9zM250.6 62.4h1.4v1.3h-1.4zM251.6 61.4h0.9v2.3h-0.9zM251.3 62.2h1.4v1.3h-1.4zM255.3 64.2h0.9v1.8h-0.9zM255.1 64.5h1.4v1.3h-1.4zM256.9 65.7h0.9v3.8h-0.9zM256.6 66.9h1.4v1.3h-1.4zM259.2 65.7h0.9v3.7h-0.9zM258.9 67.4h1.4v1.3h-1.4zM260.8 65.1h0.9v3.6h-0.9zM260.5 66.4h1.4v1.3h-1.4zM261.6 65.5h0.9v3.0h-0.9zM261.3 65.7h1.4v1.3h-1.4zM262.4 65.4h0.9v2.0h-0.9zM262.1 65.5h1.4v1.3h-1.4zM265.6 62.7h0.9v2.2h-0.9zM265.3 63.4h1.4v1.3h-1.4zM268.8 62.5h0.9v1.6h-0.9zM268.5 62.6h1.4v1.3h-1.4zM278.7 65.7h0.9v3.8h-0.9zM278.4 67.5h1.4v1.3h-1.4zM281.8 68.3h0.9v3.3h-0.9zM281.5 68.3h1.4v1.3h-1.4zM283.4 67.6h0.9v3.0h-0.9zM283.1 68.1h1.4v1.3h-1.4zM296.2 78.7h0.9v1.8h-0.9zM295.9 79.1h1.4v1.3h-1.4zM297.7 79.1h0.9v4.1h-0.9zM297.4 80.2h1.4v1.3h-1.4zM299.3 80.7h0.9v3.5h-0.9zM299.0 81.3h1.4v1.3h-1.4zM305.8 89.2h0.9v3.3h-0.9zM305.5 89.9h1.4v1.9h-1.4zM309.6 90.9h0.9v5.4h-0.9zM309.3 92.4h1.4v3.6h-1.4zM310.6 88.8h0.9v3.9h-0.9zM310.3 89.5h1.4v2.9h-1.4zM312.3 84.5h0.9v3.7h-0.9zM312.0 84.8h1.4v2.4h-1.4zM313.9 81.6h0.9v1.8h-0.9zM313.6 81.6h1.4v1.4h-1.4zM314.8 76.7h0.9v5.9h-0.9zM314.5 78.4h1.4v3.2h-1.4zM319.4 76.2h0.9v2.4h-0.9zM319.1 77.0h1.4v1.3h-1.4zM320.1 75.8h0.9v2.2h-0.9zM319.8 76.1h1.4v1.3h-1.4zM321.6 73.5h0.9v3.6h-0.9zM321.3 75.0h1.4v1.3h-1.4zM328.8 76.1h0.9v3.7h-0.9zM328.5 76.7h1.4v1.3h-1.4zM330.4 73.6h0.9v3.0h-0.9zM330.1 75.0h1.4v1.5h-1.4zM332.8 73.0h0.9v2.8h-0.9zM332.5 73.2h1.4v1.3h-1.4zM333.6 71.3h0.9v2.8h-0.9zM333.3 72.3h1.4v1.3h-1.4zM334.4 70.3h0.9v4.5h-0.9zM334.1 72.1h1.4v1.3h-1.4zM336.0 71.9h0.9v2.6h-0.9zM335.7 72.3h1.4v1.3h-1.4zM338.4 71.0h0.9v3.9h-0.9zM338.1 72.5h1.4v2.2h-1.4zM340.1 75.7h0.9v4.5h-0.9zM339.8 75.8h1.4v2.9h-1.4zM340.9 77.8h0.9v3.8h-0.9zM340.6 78.7h1.4v2.6h-1.4zM343.4 83.5h0.9v3.3h-0.9zM343.1 85.3h1.4v1.3h-1.4zM345.1 84.9h0.9v3.3h-0.9zM344.8 86.3h1.4v1.3h-1.4zM345.9 85.2h0.9v2.9h-0.9zM345.6 86.6h1.4v1.3h-1.4zM346.8 85.1h0.9v3.7h-0.9zM346.5 86.7h1.4v1.3h-1.4zM348.4 87.5h0.9v2.6h-0.9zM348.1 88.0h1.4v1.3h-1.4zM351.5 88.0h0.9v3.3h-0.9zM351.2 88.0h1.4v1.3h-1.4zM354.6 86.4h0.9v1.4h-0.9zM354.3 86.5h1.4v1.3h-1.4zM360.0 84.3h0.9v2.8h-0.9zM359.7 85.8h1.4v1.3h-1.4zM360.8 85.7h0.9v4.3h-0.9zM360.5 86.7h1.4v1.3h-1.4zM361.6 84.7h0.9v4.4h-0.9zM361.3 86.0h1.4v1.3h-1.4zM367.9 84.5h0.9v3.4h-0.9zM367.6 86.0h1.4v1.3h-1.4zM370.1 83.6h0.9v1.8h-0.9zM369.8 83.7h1.4v1.4h-1.4zM374.8 78.4h0.9v3.0h-0.9zM374.5 80.1h1.4v1.3h-1.4zM379.6 77.9h0.9v2.9h-0.9zM379.3 78.9h1.4v1.3h-1.4zM380.6 75.8h0.9v4.3h-0.9zM380.3 76.7h1.4v2.1h-1.4zM381.6 75.4h0.9v1.5h-0.9zM381.3 75.6h1.4v1.3h-1.4zM386.9 78.4h0.9v4.4h-0.9zM386.6 79.9h1.4v1.3h-1.4zM392.3 77.7h0.9v2.5h-0.9zM392.0 78.9h1.4v1.3h-1.4zM393.0 78.8h0.9v1.4h-0.9zM392.7 78.8h1.4v1.3h-1.4zM393.8 77.6h0.9v1.7h-0.9zM393.5 77.9h1.4v1.3h-1.4zM394.6 76.0h0.9v3.8h-0.9zM394.3 76.9h1.4v1.3h-1.4zM396.3 76.7h0.9v2.7h-0.9zM396.0 77.2h1.4v1.7h-1.4zM400.4 82.7h0.9v2.1h-0.9zM400.1 83.0h1.4v1.4h-1.4zM403.8 85.2h0.9v3.0h-0.9zM403.5 86.9h1.4v1.3h-1.4zM415.1 95.3h0.9v3.0h-0.9zM414.8 95.6h1.4v1.3h-1.4zM422.3 105.9h0.9v2.7h-0.9zM422.0 106.7h1.4v1.3h-1.4zM423.0 106.6h0.9v2.9h-0.9zM422.7 107.6h1.4v1.5h-1.4zM425.4 110.0h0.9v2.6h-0.9zM425.1 110.7h1.4v1.3h-1.4zM426.3 110.0h0.9v2.3h-0.9zM426.0 110.1h1.4v1.3h-1.4zM427.9 108.3h0.9v3.3h-0.9zM427.6 110.2h1.4v1.3h-1.4zM431.3 106.5h0.9v2.8h-0.9zM431.0 106.9h1.4v1.4h-1.4zM432.9 102.0h0.9v3.7h-0.9zM432.6 102.5h1.4v2.4h-1.4zM434.6 97.6h0.9v4.0h-0.9zM434.3 99.5h1.4v1.7h-1.4zM436.2 98.3h0.9v2.1h-0.9zM435.9 99.0h1.4v1.3h-1.4zM438.6 97.1h0.9v1.6h-0.9zM438.3 97.2h1.4v1.3h-1.4zM439.4 96.0h0.9v3.7h-0.9zM439.1 96.4h1.4v1.3h-1.4zM440.2 95.2h0.9v3.2h-0.9zM439.9 95.7h1.4v1.3h-1.4zM441.0 94.4h0.9v1.6h-0.9zM440.7 94.4h1.4v1.3h-1.4zM442.6 93.1h0.9v2.6h-0.9zM442.3 93.4h1.4v1.3h-1.4zM444.2 89.7h0.9v2.9h-0.9zM443.9 91.0h1.4v1.5h-1.4zM444.9 89.1h0.9v3.5h-0.9zM444.6 89.8h1.4v1.3h-1.4zM445.7 89.6h0.9v1.3h-0.9zM445.4 89.6h1.4v1.3h-1.4zM447.3 88.0h0.9v3.2h-0.9zM447.0 88.1h1.4v1.4h-1.4zM449.6 85.5h0.9v1.6h-0.9zM449.3 85.7h1.4v1.3h-1.4zM453.5 86.8h0.9v1.7h-0.9zM453.2 87.0h1.4v1.3h-1.4zM457.4 83.6h0.9v3.5h-0.9zM457.1 84.7h1.4v2.0h-1.4zM458.3 82.6h0.9v2.4h-0.9zM458.0 82.6h1.4v2.0h-1.4zM459.1 81.3h0.9v3.4h-0.9zM458.8 81.9h1.4v1.3h-1.4zM459.9 80.3h0.9v2.9h-0.9zM459.6 80.7h1.4v1.3h-1.4zM461.6 76.3h0.9v2.4h-0.9zM461.3 76.9h1.4v1.7h-1.4zM464.6 79.0h0.9v2.8h-0.9zM464.3 79.5h1.4v1.3h-1.4zM468.4 81.0h0.9v2.1h-0.9zM468.1 81.3h1.4v1.3h-1.4zM476.9 84.4h0.9v1.6h-0.9zM476.6 84.7h1.4v1.3h-1.4zM480.0 83.3h0.9v1.6h-0.9zM479.7 83.6h1.4v1.3h-1.4zM481.6 82.3h0.9v2.9h-0.9zM481.3 83.3h1.4v1.3h-1.4zM482.4 81.7h0.9v2.6h-0.9zM482.1 82.2h1.4v1.3h-1.4zM483.9 82.9h0.9v2.4h-0.9zM483.6 83.2h1.4v1.3h-1.4zM490.4 85.0h0.9v4.1h-0.9zM490.1 86.3h1.4v1.3h-1.4zM491.1 83.9h0.9v2.6h-0.9zM490.8 84.3h1.4v2.0h-1.4zM491.9 82.3h0.9v3.2h-0.9zM491.6 82.4h1.4v1.9h-1.4zM492.6 81.1h0.9v2.3h-0.9zM492.3 81.4h1.4v1.3h-1.4zM499.6 83.2h0.9v4.1h-0.9zM499.3 84.7h1.4v1.3h-1.4zM510.4 85.1h0.9v4.9h-0.9zM510.1 87.0h1.4v1.3h-1.4zM512.6 83.8h0.9v3.8h-0.9zM512.3 85.7h1.4v1.3h-1.4zM517.6 90.0h0.9v1.6h-0.9zM517.3 90.2h1.4v1.3h-1.4zM526.6 95.5h0.9v3.0h-0.9zM526.3 95.9h1.4v1.3h-1.4zM528.1 95.8h0.9v2.5h-0.9zM527.8 97.0h1.4v1.3h-1.4zM530.4 96.0h0.9v3.7h-0.9zM530.0 97.5h1.4v1.3h-1.4zM531.1 96.3h0.9v2.8h-0.9zM530.8 96.4h1.4v1.3h-1.4zM531.9 95.2h0.9v2.7h-0.9zM531.5 95.6h1.4v1.3h-1.4zM533.4 93.2h0.9v3.1h-0.9zM533.0 95.0h1.4v1.3h-1.4zM534.1 93.4h0.9v3.6h-0.9zM533.8 94.1h1.4v1.3h-1.4zM535.6 92.8h0.9v2.1h-0.9zM535.3 93.5h1.4v1.3h-1.4zM537.2 91.9h0.9v3.3h-0.9zM536.9 92.1h1.4v1.4h-1.4zM539.6 90.0h0.9v1.7h-0.9zM539.3 90.3h1.4v1.3h-1.4zM540.4 90.3h0.9v1.4h-0.9zM540.1 90.3h1.4v1.3h-1.4zM551.9 95.6h0.9v4.1h-0.9zM551.5 96.4h1.4v1.3h-1.4zM552.6 95.9h0.9v3.5h-0.9zM552.3 96.4h1.4v1.3h-1.4zM553.4 93.8h0.9v3.3h-0.9zM553.1 95.5h1.4v1.3h-1.4zM554.2 94.8h0.9v1.7h-0.9zM553.9 95.0h1.4v1.3h-1.4zM558.1 88.7h0.9v5.5h-0.9zM557.8 90.3h1.4v2.9h-1.4zM558.9 88.6h0.9v3.0h-0.9zM558.5 89.0h1.4v1.3h-1.4zM559.6 85.9h0.9v3.5h-0.9zM559.3 87.0h1.4v2.0h-1.4zM560.4 85.2h0.9v2.7h-0.9zM560.1 85.2h1.4v1.7h-1.4zM561.2 83.5h0.9v2.5h-0.9zM560.9 84.4h1.4v1.3h-1.4zM562.0 82.1h0.9v3.9h-0.9zM561.7 83.8h1.4v1.3h-1.4zM563.6 82.8h0.9v1.5h-0.9zM563.3 82.9h1.4v1.3h-1.4zM567.4 86.6h0.9v2.2h-0.9zM567.0 87.2h1.4v1.3h-1.4zM568.1 88.3h0.9v1.4h-0.9zM567.8 88.4h1.4v1.3h-1.4zM570.4 90.7h0.9v2.0h-0.9zM570.0 90.7h1.4v1.3h-1.4zM574.9 93.6h0.9v2.4h-0.9zM574.5 93.6h1.4v1.3h-1.4zM585.4 94.1h0.9v3.5h-0.9zM585.0 95.2h1.4v2.3h-1.4zM586.9 92.4h0.9v2.9h-0.9zM586.5 92.6h1.4v1.3h-1.4zM587.6 90.1h0.9v2.7h-0.9zM587.3 90.8h1.4v1.8h-1.4zM590.6 90.4h0.9v2.1h-0.9zM590.3 91.1h1.4v1.3h-1.4zM598.1 95.7h0.9v2.5h-0.9zM597.8 96.0h1.4v1.3h-1.4zM605.4 100.1h0.9v3.8h-0.9zM605.1 100.3h1.4v1.8h-1.4zM607.0 95.8h0.9v4.1h-0.9zM606.7 97.6h1.4v1.6h-1.4zM607.8 95.2h0.9v3.0h-0.9zM607.5 96.7h1.4v1.3h-1.4zM609.4 93.5h0.9v4.3h-0.9zM609.0 95.1h1.4v2.7h-1.4zM612.4 102.1h0.9v3.4h-0.9zM612.0 103.3h1.4v1.6h-1.4zM615.4 108.6h0.9v2.0h-0.9zM615.1 108.6h1.4v1.8h-1.4zM616.3 107.5h0.9v1.9h-0.9zM616.0 107.9h1.4v1.3h-1.4zM617.1 106.1h0.9v3.9h-0.9zM616.8 107.1h1.4v1.3h-1.4zM617.9 103.6h0.9v4.4h-0.9zM617.6 105.0h1.4v2.1h-1.4zM618.8 102.9h0.9v2.5h-0.9zM618.5 103.5h1.4v1.5h-1.4zM619.6 102.2h0.9v2.8h-0.9zM619.3 102.7h1.4v1.3h-1.4zM621.9 101.6h0.9v1.7h-0.9zM621.5 101.9h1.4v1.3h-1.4zM623.4 101.8h0.9v2.2h-0.9zM623.0 101.9h1.4v1.3h-1.4zM624.1 99.6h0.9v3.4h-0.9zM623.8 101.1h1.4v1.3h-1.4zM625.6 98.9h0.9v3.6h-0.9zM625.3 100.0h1.4v1.3h-1.4zM637.4 113.1h0.9v4.3h-0.9zM637.0 113.8h1.4v3.0h-1.4zM638.1 111.8h0.9v3.5h-0.9zM637.8 112.0h1.4v1.8h-1.4zM638.9 108.2h0.9v4.7h-0.9zM638.5 109.6h1.4v2.4h-1.4zM640.4 104.0h0.9v3.7h-0.9zM640.1 105.0h1.4v2.6h-1.4zM641.3 103.1h0.9v2.4h-0.9zM641.0 104.0h1.4v1.3h-1.4zM642.1 101.2h0.9v3.4h-0.9zM641.8 102.6h1.4v1.3h-1.4zM642.9 100.3h0.9v2.5h-0.9zM642.6 100.6h1.4v2.0h-1.4zM643.8 97.1h0.9v3.7h-0.9zM643.5 98.9h1.4v1.8h-1.4zM644.6 94.4h0.9v6.3h-0.9zM644.3 95.7h1.4v3.1h-1.4zM645.4 94.4h0.9v3.3h-0.9zM645.1 94.6h1.4v1.3h-1.4zM646.2 94.0h0.9v2.5h-0.9zM645.9 94.0h1.4v1.3h-1.4zM647.7 90.8h0.9v2.3h-0.9zM647.4 91.6h1.4v1.3h-1.4zM650.0 89.0h0.9v2.5h-0.9zM649.7 89.3h1.4v1.5h-1.4zM650.8 86.2h0.9v3.6h-0.9zM650.5 87.5h1.4v1.8h-1.4zM652.4 85.2h0.9v4.0h-0.9zM652.0 87.0h1.4v1.5h-1.4zM658.4 92.4h0.9v1.7h-0.9zM658.1 92.7h1.4v1.3h-1.4zM664.6 95.9h0.9v2.2h-0.9zM664.3 96.1h1.4v1.3h-1.4zM666.2 95.1h0.9v3.1h-0.9zM665.9 95.3h1.4v1.3h-1.4zM667.7 94.4h0.9v3.3h-0.9zM667.4 95.2h1.4v1.3h-1.4zM669.3 93.1h0.9v2.4h-0.9zM669.0 93.9h1.4v1.3h-1.4zM670.8 93.6h0.9v2.5h-0.9zM670.5 94.8h1.4v1.3h-1.4zM671.6 92.1h0.9v3.2h-0.9zM671.3 94.1h1.4v1.3h-1.4zM674.8 97.6h0.9v2.5h-0.9zM674.5 98.7h1.4v1.3h-1.4zM678.6 98.5h0.9v2.6h-0.9zM678.3 98.6h1.4v1.3h-1.4zM679.4 95.6h0.9v4.3h-0.9zM679.0 97.5h1.4v1.3h-1.4zM680.9 95.8h0.9v4.2h-0.9zM680.5 97.3h1.4v1.3h-1.4zM681.6 95.1h0.9v4.2h-0.9zM681.3 96.6h1.4v1.3h-1.4zM685.4 95.7h0.9v3.2h-0.9zM685.0 96.2h1.4v1.3h-1.4zM688.4 95.3h0.9v1.4h-0.9zM688.0 95.3h1.4v1.3h-1.4zM692.1 95.0h0.9v2.8h-0.9zM691.8 95.0h1.4v1.3h-1.4zM692.9 92.7h0.9v3.6h-0.9zM692.5 94.5h1.4v1.3h-1.4zM694.4 90.1h0.9v4.9h-0.9zM694.0 91.9h1.4v2.4h-1.4zM695.1 89.0h0.9v3.0h-0.9zM694.8 90.5h1.4v1.4h-1.4zM695.9 87.7h0.9v4.6h-0.9zM695.5 87.8h1.4v2.7h-1.4zM697.4 81.4h0.9v4.4h-0.9zM697.0 83.0h1.4v2.1h-1.4zM698.9 79.2h0.9v4.3h-0.9zM698.5 79.8h1.4v1.9h-1.4zM699.6 77.6h0.9v2.8h-0.9zM699.3 78.6h1.4v1.3h-1.4zM700.4 76.3h0.9v3.7h-0.9zM700.0 78.0h1.4v1.3h-1.4zM702.6 74.8h0.9v2.6h-0.9zM702.3 76.1h1.4v1.3h-1.4zM703.4 72.7h0.9v5.1h-0.9zM703.0 74.5h1.4v1.6h-1.4zM704.1 72.0h0.9v2.5h-0.9zM703.8 72.9h1.4v1.7h-1.4zM710.4 69.2h0.9v4.9h-0.9zM710.1 69.5h1.4v4.1h-1.4zM712.0 63.4h0.9v4.0h-0.9zM711.7 63.7h1.4v3.1h-1.4zM712.8 58.6h0.9v5.6h-0.9zM712.5 59.1h1.4v4.6h-1.4zM713.6 56.2h0.9v4.6h-0.9zM713.3 56.4h1.4v2.7h-1.4zM715.2 49.9h0.9v4.5h-0.9zM714.9 51.2h1.4v2.6h-1.4zM716.0 48.0h0.9v3.6h-0.9zM715.7 49.3h1.4v2.0h-1.4zM717.6 43.8h0.9v3.2h-0.9zM717.3 45.1h1.4v1.8h-1.4zM720.8 44.8h0.9v4.2h-0.9zM720.5 45.8h1.4v1.3h-1.4zM726.4 53.9h0.9v3.1h-0.9zM726.0 54.2h1.4v1.3h-1.4zM727.1 53.8h0.9v2.5h-0.9zM726.8 53.9h1.4v1.3h-1.4zM727.9 51.8h0.9v4.7h-0.9zM727.5 53.4h1.4v1.3h-1.4zM733.6 62.6h0.9v5.2h-0.9zM733.3 64.1h1.4v3.3h-1.4zM734.6 59.3h0.9v5.0h-0.9zM734.3 59.4h1.4v4.7h-1.4zM738.6 80.6h0.9v8.0h-0.9zM738.3 80.8h1.4v6.3h-1.4zM739.6 75.6h0.9v6.6h-0.9zM739.3 75.6h1.4v5.2h-1.4zM740.4 72.1h0.9v3.6h-0.9zM740.1 72.6h1.4v3.0h-1.4zM742.0 68.7h0.9v3.9h-0.9zM741.7 68.9h1.4v2.1h-1.4zM743.6 65.3h0.9v2.4h-0.9zM743.3 66.0h1.4v1.7h-1.4zM747.6 69.3h0.9v2.8h-0.9zM747.3 69.4h1.4v2.3h-1.4zM750.6 81.3h0.9v7.3h-0.9zM750.3 81.3h1.4v5.7h-1.4zM751.6 76.9h0.9v4.8h-0.9zM751.3 77.1h1.4v4.2h-1.4zM755.6 128.1h0.9v14.8h-0.9zM755.3 128.7h1.4v12.6h-1.4zM756.6 116.3h0.9v13.1h-0.9zM756.3 117.1h1.4v11.6h-1.4zM757.4 115.1h0.9v3.7h-0.9zM757.0 115.1h1.4v2.0h-1.4zM758.9 111.4h0.9v4.3h-0.9zM758.5 112.8h1.4v1.3h-1.4zM759.6 110.2h0.9v3.5h-0.9zM759.3 110.4h1.4v2.5h-1.4zM760.4 108.3h0.9v4.2h-0.9zM760.1 109.8h1.4v1.3h-1.4zM762.0 107.3h0.9v3.9h-0.9zM761.7 108.2h1.4v1.3h-1.4zM771.1 122.3h0.9v2.6h-0.9zM770.8 122.5h1.4v1.3h-1.4zM774.9 129.0h0.9v4.0h-0.9zM774.5 129.0h1.4v2.4h-1.4zM786.8 158.3h0.9v3.3h-0.9zM786.5 158.5h1.4v1.3h-1.4zM791.1 161.1h0.9v3.8h-0.9zM790.8 161.1h1.4v3.5h-1.4zM796.6 153.1h0.9v3.3h-0.9zM796.3 153.4h1.4v1.3h-1.4zM810.6 172.2h0.9v4.5h-0.9zM810.3 172.4h1.4v4.3h-1.4zM811.6 166.7h0.9v7.5h-0.9zM811.3 166.8h1.4v5.5h-1.4zM822.9 175.8h0.9v3.3h-0.9zM822.6 177.4h1.4v1.5h-1.4zM823.8 174.2h0.9v3.8h-0.9zM823.5 175.9h1.4v1.4h-1.4zM825.4 174.3h0.9v1.8h-0.9zM825.1 174.7h1.4v1.3h-1.4zM827.1 174.4h0.9v1.9h-0.9zM826.8 174.4h1.4v1.3h-1.4zM827.9 173.7h0.9v2.2h-0.9zM827.6 173.9h1.4v1.3h-1.4zM828.8 173.0h0.9v2.8h-0.9zM828.5 173.1h1.4v1.3h-1.4zM829.6 171.4h0.9v3.3h-0.9zM829.3 172.9h1.4v1.3h-1.4zM832.1 171.1h0.9v2.7h-0.9zM831.8 171.2h1.4v1.3h-1.4zM837.1 167.6h0.9v2.8h-0.9zM836.8 168.0h1.4v1.3h-1.4zM837.9 166.5h0.9v3.0h-0.9zM837.6 166.6h1.4v1.4h-1.4zM838.8 165.3h0.9v2.2h-0.9zM838.5 165.6h1.4v1.3h-1.4zM839.6 165.5h0.9v1.6h-0.9zM839.3 165.6h1.4v1.3h-1.4zM850.4 168.3h0.9v3.2h-0.9zM850.1 169.1h1.4v1.3h-1.4zM852.9 167.9h0.9v2.5h-0.9zM852.6 168.9h1.4v1.3h-1.4zM856.3 170.4h0.9v1.6h-0.9zM856.0 170.5h1.4v1.3h-1.4zM857.1 169.7h0.9v1.4h-0.9zM856.8 169.7h1.4v1.3h-1.4zM861.1 169.2h0.9v3.3h-0.9zM860.8 170.2h1.4v1.3h-1.4zM862.6 167.9h0.9v3.7h-0.9zM862.3 169.3h1.4v1.3h-1.4zM864.1 167.2h0.9v2.8h-0.9zM863.8 168.4h1.4v1.3h-1.4zM864.9 167.6h0.9v2.6h-0.9zM864.5 167.7h1.4v1.3h-1.4zM865.6 166.8h0.9v2.8h-0.9zM865.3 167.1h1.4v1.3h-1.4zM867.9 168.2h0.9v2.2h-0.9zM867.5 168.9h1.4v1.3h-1.4zM868.6 168.0h0.9v1.5h-0.9zM868.3 168.1h1.4v1.3h-1.4zM872.4 169.6h0.9v2.2h-0.9zM872.1 169.7h1.4v1.3h-1.4zM873.3 166.9h0.9v4.2h-0.9zM873.0 168.3h1.4v1.4h-1.4zM874.1 166.3h0.9v3.2h-0.9zM873.8 167.3h1.4v1.3h-1.4zM874.9 165.6h0.9v2.3h-0.9zM874.6 166.4h1.4v1.3h-1.4zM876.6 166.3h0.9v2.5h-0.9zM876.3 166.3h1.4v1.3h-1.4zM878.2 166.5h0.9v1.8h-0.9zM877.9 166.7h1.4v1.3h-1.4zM881.4 170.3h0.9v1.4h-0.9zM881.1 170.4h1.4v1.3h-1.4zM886.4 169.1h0.9v4.3h-0.9zM886.0 170.3h1.4v1.8h-1.4zM887.1 167.0h0.9v5.1h-0.9zM886.8 168.8h1.4v1.5h-1.4zM887.9 167.2h0.9v2.9h-0.9zM887.5 167.8h1.4v1.3h-1.4zM888.6 164.1h0.9v5.4h-0.9zM888.3 166.0h1.4v1.7h-1.4zM889.4 163.2h0.9v3.1h-0.9zM889.1 164.2h1.4v1.8h-1.4zM891.0 160.8h0.9v3.5h-0.9zM890.7 160.9h1.4v1.6h-1.4zM891.8 158.0h0.9v3.0h-0.9zM891.5 159.3h1.4v1.5h-1.4zM892.6 157.8h0.9v2.3h-0.9zM892.3 158.0h1.4v1.4h-1.4zM894.3 157.3h0.9v1.6h-0.9zM894.0 157.4h1.4v1.3h-1.4zM896.8 155.3h0.9v3.1h-0.9zM896.5 155.9h1.4v1.3h-1.4zM897.6 154.9h0.9v3.3h-0.9zM897.3 155.1h1.4v1.3h-1.4zM899.2 151.0h0.9v3.4h-0.9zM898.9 152.9h1.4v1.3h-1.4zM900.8 152.1h0.9v3.3h-0.9zM900.5 152.6h1.4v1.3h-1.4zM906.6 154.2h0.9v3.8h-0.9zM906.3 155.5h1.4v1.3h-1.4zM912.4 158.8h0.9v1.9h-0.9zM912.0 159.0h1.4v1.3h-1.4zM915.4 160.0h0.9v2.6h-0.9zM915.0 160.4h1.4v1.3h-1.4zM917.6 160.3h0.9v2.7h-0.9zM917.3 161.1h1.4v1.3h-1.4zM919.1 158.3h0.9v4.3h-0.9zM918.8 160.1h1.4v1.3h-1.4zM920.6 158.5h0.9v1.9h-0.9zM920.3 159.0h1.4v1.3h-1.4zM921.4 157.6h0.9v3.1h-0.9zM921.0 159.0h1.4v1.3h-1.4zM922.9 157.7h0.9v2.3h-0.9zM922.5 158.3h1.4v1.3h-1.4zM924.4 158.6h0.9v2.3h-0.9zM924.0 158.7h1.4v1.3h-1.4zM947.1 172.0h0.9v1.8h-0.9zM946.8 172.1h1.4v1.3h-1.4zM950.9 173.4h0.9v2.5h-0.9zM950.5 173.8h1.4v1.3h-1.4zM955.6 175.6h0.9v1.6h-0.9zM955.3 175.7h1.4v1.3h-1.4zM957.2 174.8h0.9v4.0h-0.9zM956.9 175.6h1.4v1.5h-1.4zM960.4 177.4h0.9v1.4h-0.9zM960.1 177.5h1.4v1.3h-1.4zM962.0 176.5h0.9v4.3h-0.9zM961.7 177.6h1.4v1.3h-1.4zM965.2 178.0h0.9v2.1h-0.9zM964.9 178.1h1.4v1.3h-1.4z"/>
<path fill="#2a8cf0" d="M9.3 79.8h0.9v2.7h-0.9zM9.1 80.7h1.4v1.3h-1.4zM10.1 79.4h0.9v3.2h-0.9zM9.8 81.0h1.4v1.3h-1.4zM12.6 79.8h0.9v11.8h-0.9zM12.3 79.8h1.4v11.5h-1.4zM18.1 78.4h0.9v3.4h-0.9zM17.8 79.6h1.4v1.3h-1.4zM20.4 78.6h0.9v3.1h-0.9zM20.1 80.1h1.4v1.3h-1.4zM25.0 77.4h0.9v3.3h-0.9zM24.7 79.2h1.4v1.3h-1.4zM28.2 78.4h0.9v2.4h-0.9zM27.9 79.5h1.4v1.3h-1.4zM33.0 81.0h0.9v2.0h-0.9zM32.7 81.3h1.4v1.3h-1.4zM34.6 82.6h0.9v1.4h-0.9zM34.3 82.7h1.4v1.3h-1.4zM36.2 82.8h0.9v2.2h-0.9zM35.9 83.6h1.4v1.3h-1.4zM37.0 82.8h0.9v4.0h-0.9zM36.7 83.6h1.4v1.3h-1.4zM37.8 84.4h0.9v2.1h-0.9zM37.5 84.6h1.4v1.4h-1.4zM42.6 85.7h0.9v5.4h-0.9zM42.3 87.5h1.4v1.7h-1.4zM50.4 57.9h0.9v2.7h-0.9zM50.0 59.1h1.4v1.3h-1.4zM52.6 59.4h0.9v1.4h-0.9zM52.3 59.5h1.4v1.3h-1.4zM53.4 59.4h0.9v4.1h-0.9zM53.0 60.1h1.4v1.6h-1.4zM54.1 60.3h0.9v3.0h-0.9zM53.8 61.7h1.4v1.3h-1.4zM57.1 60.0h0.9v2.8h-0.9zM56.8 60.7h1.4v1.3h-1.4zM62.4 55.7h0.9v3.2h-0.9zM62.1 56.4h1.4v1.3h-1.4zM63.3 56.9h0.9v3.8h-0.9zM63.0 57.6h1.4v1.3h-1.4zM72.6 57.8h0.9v1.6h-0.9zM72.3 57.8h1.4v1.3h-1.4zM74.9 57.3h0.9v3.3h-0.9zM74.6 58.2h1.4v1.3h-1.4zM76.5 57.6h0.9v3.7h-0.9zM76.2 58.6h1.4v1.3h-1.4zM77.3 58.9h0.9v2.9h-0.9zM77.0 58.9h1.4v1.3h-1.4zM78.0 58.6h0.9v3.9h-0.9zM77.7 59.4h1.4v1.3h-1.4zM78.8 59.8h0.9v2.3h-0.9zM78.5 60.6h1.4v1.3h-1.4zM81.2 61.5h0.9v1.7h-0.9zM80.9 61.9h1.4v1.3h-1.4zM83.6 61.9h0.9v3.5h-0.9zM83.3 62.5h1.4v1.3h-1.4zM88.4 63.1h0.9v2.2h-0.9zM88.1 63.4h1.4v1.3h-1.4zM89.3 64.1h0.9v3.4h-0.9zM89.0 64.4h1.4v1.3h-1.4zM90.1 64.8h0.9v4.2h-0.9zM89.8 65.0h1.4v2.1h-1.4zM91.8 67.4h0.9v2.2h-0.9zM91.5 67.6h1.4v1.3h-1.4zM95.1 67.0h0.9v2.2h-0.9zM94.8 67.5h1.4v1.3h-1.4zM101.8 66.6h0.9v2.0h-0.9zM101.5 67.3h1.4v1.3h-1.4zM103.4 68.6h0.9v3.3h-0.9zM103.1 69.8h1.4v1.8h-1.4zM104.3 70.4h0.9v2.7h-0.9zM104.0 71.6h1.4v1.3h-1.4zM105.9 73.3h0.9v3.9h-0.9zM105.6 74.6h1.4v1.6h-1.4zM106.8 76.1h0.9v2.3h-0.9zM106.5 76.2h1.4v1.9h-1.4zM107.6 77.3h0.9v2.8h-0.9zM107.3 78.1h1.4v2.0h-1.4zM111.7 79.7h0.9v2.2h-0.9zM111.4 80.3h1.4v1.3h-1.4zM112.5 79.4h0.9v2.4h-0.9zM112.2 79.6h1.4v1.3h-1.4zM114.1 77.3h0.9v4.1h-0.9zM113.8 79.0h1.4v1.3h-1.4zM115.0 78.5h0.9v2.0h-0.9zM114.7 79.2h1.4v1.3h-1.4zM118.2 75.9h0.9v3.3h-0.9zM117.9 77.6h1.4v1.3h-1.4zM122.2 74.8h0.9v4.4h-0.9zM121.9 76.4h1.4v1.3h-1.4zM123.0 74.6h0.9v3.9h-0.9zM122.7 76.4h1.4v1.3h-1.4zM131.3 69.0h0.9v3.1h-0.9zM131.0 70.3h1.4v1.3h-1.4zM137.7 62.0h0.9v3.4h-0.9zM137.4 63.9h1.4v1.3h-1.4zM140.8 58.1h0.9v2.9h-0.9zM140.5 59.2h1.4v1.5h-1.4zM144.8 57.9h0.9v1.8h-0.9zM144.5 58.1h1.4v1.3h-1.4zM145.6 58.9h0.9v1.6h-0.9zM145.3 59.2h1.4v1.3h-1.4zM147.2 59.7h0.9v1.5h-0.9zM146.9 59.9h1.4v1.3h-1.4zM149.6 58.9h0.9v3.0h-0.9zM149.3 60.4h1.4v1.3h-1.4zM152.8 61.8h0.9v1.4h-0.9zM152.5 61.9h1.4v1.3h-1.4zM155.2 61.9h0.9v2.6h-0.9zM154.9 63.1h1.4v1.3h-1.4zM156.0 62.8h0.9v2.1h-0.9zM155.7 63.2h1.4v1.3h-1.4zM157.6 62.5h0.9v3.6h-0.9zM157.3 64.3h1.4v1.6h-1.4zM162.8 66.3h0.9v2.8h-0.9zM162.6 66.6h1.4v1.3h-1.4zM173.3 63.1h0.9v2.6h-0.9zM173.1 63.9h1.4v1.3h-1.4zM174.8 63.5h0.9v2.5h-0.9zM174.6 64.4h1.4v1.3h-1.4zM175.6 63.7h0.9v2.2h-0.9zM175.3 64.4h1.4v1.3h-1.4zM178.9 60.6h0.9v3.5h-0.9zM178.6 62.3h1.4v1.3h-1.4zM185.4 57.1h0.9v2.6h-0.9zM185.1 57.2h1.4v1.3h-1.4zM188.8 59.9h0.9v3.0h-0.9zM188.5 59.9h1.4v1.3h-1.4zM192.9 61.0h0.9v2.1h-0.9zM192.6 61.1h1.4v1.3h-1.4zM199.8 57.3h0.9v3.0h-0.9zM199.6 58.2h1.4v1.3h-1.4zM205.3 57.0h0.9v3.9h-0.9zM205.0 58.2h1.4v1.3h-1.4zM206.8 57.4h0.9v4.8h-0.9zM206.5 59.0h1.4v1.3h-1.4zM208.4 58.4h0.9v3.2h-0.9zM208.1 60.1h1.4v1.3h-1.4zM210.0 59.5h0.9v3.3h-0.9zM209.7 61.2h1.4v1.3h-1.4zM210.8 61.1h0.9v3.8h-0.9zM210.5 61.8h1.4v1.3h-1.4zM214.8 62.0h0.9v4.0h-0.9zM214.5 62.9h1.4v1.5h-1.4zM215.6 63.2h0.9v2.8h-0.9zM215.3 64.1h1.4v1.3h-1.4zM216.3 62.2h0.9v4.1h-0.9zM216.1 64.1h1.4v1.3h-1.4zM217.8 63.4h0.9v3.0h-0.9zM217.6 64.9h1.4v1.3h-1.4zM218.6 64.6h0.9v3.3h-0.9zM218.3 65.5h1.4v1.3h-1.4zM226.8 60.7h0.9v2.1h-0.9zM226.6 60.7h1.4v1.3h-1.4zM230.0 59.3h0.9v2.0h-0.9zM229.7 59.6h1.4v1.3h-1.4zM230.8 58.7h0.9v3.9h-0.9zM230.5 60.1h1.4v1.3h-1.4zM232.4 59.5h0.9v1.6h-0.9zM232.1 59.7h1.4v1.3h-1.4zM236.4 60.9h0.9v1.8h-0.9zM236.1 61.2h1.4v1.3h-1.4zM237.2 60.8h0.9v2.9h-0.9zM236.9 62.0h1.4v1.3h-1.4zM243.3 61.4h0.9v3.7h-0.9zM243.1 62.6h1.4v1.3h-1.4zM250.1 61.2h0.9v3.8h-0.9zM249.8 62.7h1.4v1.3h-1.4zM252.3 60.7h0.9v3.2h-0.9zM252.1 62.2h1.4v1.6h-1.4zM254.6 63.3h0.9v3.2h-0.9zM254.3 63.7h1.4v1.3h-1.4zM256.1 65.2h0.9v2.6h-0.9zM255.8 65.3h1.4v1.6h-1.4zM257.6 66.5h0.9v2.3h-0.9zM257.3 67.0h1.4v1.3h-1.4zM260.0 66.5h0.9v2.1h-0.9zM259.7 66.7h1.4v1.3h-1.4zM267.2 62.2h0.9v1.8h-0.9zM266.9 62.3h1.4v1.3h-1.4zM270.4 61.4h0.9v2.9h-0.9zM270.1 62.4h1.4v1.3h-1.4zM271.9 62.5h0.9v3.6h-0.9zM271.6 63.4h1.4v1.5h-1.4zM273.4 63.6h0.9v4.0h-0.9zM273.1 65.2h1.4v1.3h-1.4zM274.1 65.8h0.9v2.6h-0.9zM273.8 66.2h1.4v1.3h-1.4zM275.6 65.9h0.9v2.5h-0.9zM275.3 66.5h1.4v1.3h-1.4zM277.9 67.4h0.9v2.1h-0.9zM277.6 67.4h1.4v1.3h-1.4zM280.3 65.8h0.9v3.5h-0.9zM280.0 67.3h1.4v1.3h-1.4zM281.0 67.8h0.9v2.6h-0.9zM280.7 68.0h1.4v1.3h-1.4zM284.9 68.2h0.9v2.9h-0.9zM284.6 68.4h1.4v1.3h-1.4zM286.5 68.6h0.9v2.8h-0.9zM286.2 69.2h1.4v1.3h-1.4zM287.3 68.7h0.9v2.7h-0.9zM287.0 69.1h1.4v1.3h-1.4zM290.4 70.1h0.9v2.5h-0.9zM290.1 70.1h1.4v1.3h-1.4zM291.3 70.8h0.9v2.3h-0.9zM291.0 71.1h1.4v1.3h-1.4zM292.1 71.0h0.9v2.9h-0.9zM291.8 72.1h1.4v1.4h-1.4zM294.6 77.8h0.9v3.1h-0.9zM294.3 77.8h1.4v1.3h-1.4zM304.1 85.1h0.9v4.9h-0.9zM303.8 86.1h1.4v2.9h-1.4zM304.9 87.9h0.9v4.2h-0.9zM304.6 89.0h1.4v1.3h-1.4zM306.6 90.6h0.9v5.1h-0.9zM306.3 91.8h1.4v2.9h-1.4zM307.6 94.3h0.9v2.4h-0.9zM307.3 94.8h1.4v1.3h-1.4zM311.4 86.2h0.9v4.7h-0.9zM311.1 87.3h1.4v2.2h-1.4zM318.6 76.0h0.9v2.8h-0.9zM318.3 77.0h1.4v1.3h-1.4zM320.9 76.1h0.9v2.2h-0.9zM320.6 76.1h1.4v1.3h-1.4zM322.4 75.0h0.9v1.8h-0.9zM322.1 75.0h1.4v1.3h-1.4zM323.2 74.1h0.9v3.9h-0.9zM322.9 76.0h1.4v1.3h-1.4zM325.6 75.1h0.9v3.0h-0.9zM325.3 75.2h1.4v1.3h-1.4zM327.2 75.0h0.9v2.7h-0.9zM326.9 75.1h1.4v1.3h-1.4zM329.6 75.4h0.9v2.5h-0.9zM329.3 76.6h1.4v1.3h-1.4zM337.6 72.0h0.9v2.9h-0.9zM337.3 72.5h1.4v1.3h-1.4zM339.3 74.1h0.9v2.7h-0.9zM339.0 74.6h1.4v1.3h-1.4zM342.6 83.0h0.9v3.7h-0.9zM342.3 83.8h1.4v1.5h-1.4zM344.3 84.7h0.9v2.1h-0.9zM344.0 85.4h1.4v1.3h-1.4zM347.6 87.7h0.9v1.6h-0.9zM347.3 87.9h1.4v1.3h-1.4zM349.9 87.7h0.9v2.4h-0.9zM349.6 87.8h1.4v1.3h-1.4zM353.8 87.5h0.9v1.6h-0.9zM353.5 87.8h1.4v1.3h-1.4zM355.4 85.9h0.9v3.7h-0.9zM355.1 86.5h1.4v1.3h-1.4zM356.2 85.6h0.9v2.7h-0.9zM355.9 86.5h1.4v1.3h-1.4zM356.9 85.9h0.9v2.4h-0.9zM356.6 86.1h1.4v1.3h-1.4zM357.7 85.1h0.9v2.9h-0.9zM357.4 86.1h1.4v1.3h-1.4zM362.4 85.1h0.9v3.5h-0.9zM362.1 86.0h1.4v1.3h-1.4zM364.0 86.5h0.9v1.6h-0.9zM363.7 86.8h1.4v1.3h-1.4zM364.8 86.3h0.9v2.7h-0.9zM364.5 87.5h1.4v1.3h-1.4zM365.6 88.0h0.9v3.3h-0.9zM365.3 88.3h1.4v1.3h-1.4zM366.4 88.1h0.9v2.0h-0.9zM366.1 88.3h1.4v1.3h-1.4zM367.1 85.2h0.9v4.1h-0.9zM366.8 86.7h1.4v1.6h-1.4zM371.6 82.1h0.9v3.3h-0.9zM371.3 82.2h1.4v1.3h-1.4zM372.4 80.1h0.9v2.6h-0.9zM372.1 81.2h1.4v1.3h-1.4zM374.0 78.9h0.9v5.0h-0.9zM373.7 80.9h1.4v1.3h-1.4zM375.6 78.2h0.9v3.2h-0.9zM375.3 80.1h1.4v1.3h-1.4zM382.4 74.4h0.9v2.5h-0.9zM382.1 75.6h1.4v1.3h-1.4zM383.1 75.2h0.9v4.4h-0.9zM382.8 76.8h1.4v1.3h-1.4zM383.9 76.2h0.9v3.7h-0.9zM383.6 78.0h1.4v1.3h-1.4zM384.6 78.3h0.9v3.0h-0.9zM384.3 78.5h1.4v1.3h-1.4zM387.6 79.9h0.9v3.1h-0.9zM387.3 80.3h1.4v1.3h-1.4zM388.4 78.5h0.9v3.8h-0.9zM388.1 80.3h1.4v1.3h-1.4zM397.1 78.3h0.9v3.7h-0.9zM396.8 78.8h1.4v1.4h-1.4zM397.9 80.0h0.9v1.9h-0.9zM397.6 80.2h1.4v1.3h-1.4zM398.8 79.9h0.9v4.5h-0.9zM398.5 81.3h1.4v1.3h-1.4zM401.3 83.6h0.9v2.1h-0.9zM401.0 84.4h1.4v1.3h-1.4zM404.6 86.8h0.9v2.7h-0.9zM404.3 87.9h1.4v1.3h-1.4zM405.4 87.6h0.9v2.5h-0.9zM405.1 88.5h1.4v1.3h-1.4zM407.8 88.9h0.9v2.3h-0.9zM407.5 89.1h1.4v1.3h-1.4zM411.0 90.5h0.9v2.7h-0.9zM410.7 90.6h1.4v1.3h-1.4zM411.8 90.6h0.9v2.9h-0.9zM411.5 91.6h1.4v1.3h-1.4zM413.4 92.5h0.9v1.7h-0.9zM413.1 92.5h1.4v1.3h-1.4zM414.3 92.8h0.9v3.4h-0.9zM414.0 93.6h1.4v1.9h-1.4zM415.9 94.6h0.9v3.5h-0.9zM415.6 96.2h1.4v1.3h-1.4zM416.8 96.3h0.9v3.1h-0.9zM416.5 96.9h1.4v1.3h-1.4zM417.6 95.7h0.9v4.4h-0.9zM417.3 97.5h1.4v1.3h-1.4zM418.4 98.0h0.9v2.8h-0.9zM418.1 98.4h1.4v1.3h-1.4zM420.7 101.7h0.9v3.5h-0.9zM420.4 103.4h1.4v1.7h-1.4zM421.5 103.8h0.9v3.8h-0.9zM421.2 105.1h1.4v1.6h-1.4zM423.8 107.8h0.9v2.8h-0.9zM423.5 109.0h1.4v1.3h-1.4zM424.6 109.3h0.9v2.1h-0.9zM424.3 109.8h1.4v1.3h-1.4zM428.8 110.2h0.9v1.3h-0.9zM428.5 110.2h1.4v1.3h-1.4zM430.4 107.6h0.9v3.2h-0.9zM430.1 108.3h1.4v1.7h-1.4zM432.1 103.7h0.9v4.0h-0.9zM431.8 104.8h1.4v2.1h-1.4zM433.8 99.3h0.9v3.8h-0.9zM433.5 101.2h1.4v1.3h-1.4zM443.4 91.7h0.9v2.7h-0.9zM443.1 92.5h1.4v1.3h-1.4zM448.8 85.3h0.9v4.2h-0.9zM448.5 86.2h1.4v1.5h-1.4zM451.9 86.7h0.9v2.0h-0.9zM451.6 87.0h1.4v1.3h-1.4zM460.8 78.4h0.9v4.1h-0.9zM460.5 78.6h1.4v2.1h-1.4zM462.4 75.2h0.9v3.9h-0.9zM462.1 76.9h1.4v1.3h-1.4zM463.9 77.4h0.9v2.8h-0.9zM463.6 78.2h1.4v1.3h-1.4zM465.4 79.0h0.9v1.8h-0.9zM465.1 79.5h1.4v1.3h-1.4zM466.1 79.9h0.9v2.7h-0.9zM465.8 80.3h1.4v1.3h-1.4zM467.6 80.2h0.9v1.9h-0.9zM467.3 80.6h1.4v1.3h-1.4zM470.7 82.1h0.9v2.9h-0.9zM470.4 82.7h1.4v1.3h-1.4zM471.5 82.0h0.9v3.3h-0.9zM471.2 83.6h1.4v1.3h-1.4zM473.0 84.8h0.9v1.3h-0.9zM472.7 84.8h1.4v1.3h-1.4zM475.4 83.4h0.9v2.8h-0.9zM475.1 84.6h1.4v1.3h-1.4zM483.1 80.9h0.9v2.6h-0.9zM482.8 82.2h1.4v1.3h-1.4zM484.6 82.6h0.9v2.3h-0.9zM484.3 83.4h1.4v1.3h-1.4zM487.9 84.2h0.9v3.8h-0.9zM487.6 84.6h1.4v1.8h-1.4zM493.4 81.4h0.9v1.3h-0.9zM493.1 81.4h1.4v1.3h-1.4zM495.0 83.7h0.9v2.0h-0.9zM494.7 83.7h1.4v1.3h-1.4zM496.6 84.0h0.9v4.1h-0.9zM496.3 85.0h1.4v1.3h-1.4zM502.6 83.5h0.9v4.8h-0.9zM502.3 85.2h1.4v1.3h-1.4zM504.9 86.7h0.9v1.4h-0.9zM504.6 86.7h1.4v1.3h-1.4zM508.8 86.7h0.9v2.2h-0.9zM508.5 87.0h1.4v1.3h-1.4zM511.1 85.2h0.9v4.1h-0.9zM510.8 87.0h1.4v1.3h-1.4zM513.4 85.3h0.9v3.4h-0.9zM513.1 85.7h1.4v1.3h-1.4zM515.1 86.8h0.9v2.6h-0.9zM514.8 87.2h1.4v1.3h-1.4zM515.9 87.1h0.9v2.8h-0.9zM515.6 87.9h1.4v1.4h-1.4zM516.8 87.7h0.9v3.8h-0.9zM516.5 89.4h1.4v1.3h-1.4zM518.4 90.5h0.9v2.8h-0.9zM518.0 91.2h1.4v1.3h-1.4zM519.9 91.2h0.9v1.9h-0.9zM519.5 91.7h1.4v1.3h-1.4zM520.6 91.5h0.9v3.3h-0.9zM520.3 92.3h1.4v1.3h-1.4zM521.4 90.5h0.9v4.5h-0.9zM521.0 92.4h1.4v1.3h-1.4zM522.9 91.0h0.9v2.8h-0.9zM522.5 92.3h1.4v1.3h-1.4zM525.1 91.7h0.9v3.9h-0.9zM524.8 93.4h1.4v1.3h-1.4zM525.9 92.9h0.9v4.7h-0.9zM525.5 94.6h1.4v1.3h-1.4zM528.9 97.2h0.9v3.5h-0.9zM528.5 98.0h1.4v1.3h-1.4zM529.6 97.5h0.9v2.7h-0.9zM529.3 98.6h1.4v1.3h-1.4zM541.2 90.8h0.9v2.3h-0.9zM540.9 91.1h1.4v1.3h-1.4zM542.7 91.5h0.9v3.7h-0.9zM542.4 92.3h1.4v1.5h-1.4zM545.0 94.3h0.9v3.0h-0.9zM544.7 94.6h1.4v1.3h-1.4zM545.8 94.7h0.9v2.7h-0.9zM545.5 95.7h1.4v1.3h-1.4zM547.4 95.4h0.9v2.4h-0.9zM547.0 96.1h1.4v1.3h-1.4zM548.9 94.6h0.9v2.5h-0.9zM548.5 95.2h1.4v1.3h-1.4zM549.6 95.1h0.9v1.5h-0.9zM549.3 95.2h1.4v1.3h-1.4zM551.1 94.2h0.9v3.9h-0.9zM550.8 96.0h1.4v1.3h-1.4zM555.8 93.9h0.9v2.5h-0.9zM555.5 94.9h1.4v1.3h-1.4zM556.6 93.9h0.9v2.3h-0.9zM556.3 94.8h1.4v1.3h-1.4zM557.4 92.7h0.9v2.2h-0.9zM557.0 93.1h1.4v1.7h-1.4zM564.4 81.4h0.9v3.4h-0.9zM564.0 82.9h1.4v1.4h-1.4zM565.1 83.4h0.9v3.2h-0.9zM564.8 84.3h1.4v1.3h-1.4zM565.9 83.8h0.9v2.8h-0.9zM565.5 85.1h1.4v1.3h-1.4zM568.9 87.7h0.9v3.1h-0.9zM568.5 89.0h1.4v1.3h-1.4zM569.6 88.4h0.9v3.0h-0.9zM569.3 89.7h1.4v1.7h-1.4zM571.1 88.9h0.9v3.5h-0.9zM570.8 90.7h1.4v1.3h-1.4zM573.4 90.5h0.9v3.1h-0.9zM573.0 91.5h1.4v1.7h-1.4zM574.1 92.8h0.9v3.4h-0.9zM573.8 93.2h1.4v1.3h-1.4zM575.6 93.6h0.9v2.2h-0.9zM575.3 93.6h1.4v1.3h-1.4zM576.4 92.3h0.9v4.1h-0.9zM576.0 94.1h1.4v1.3h-1.4zM578.6 93.9h0.9v2.4h-0.9zM578.3 94.1h1.4v1.3h-1.4zM579.4 92.6h0.9v3.2h-0.9zM579.0 94.2h1.4v1.3h-1.4zM580.9 95.1h0.9v2.5h-0.9zM580.5 95.2h1.4v1.3h-1.4zM582.4 95.4h0.9v3.1h-0.9zM582.0 95.9h1.4v1.3h-1.4zM583.1 94.4h0.9v5.0h-0.9zM582.8 96.0h1.4v1.5h-1.4zM584.6 97.5h0.9v2.7h-0.9zM584.3 97.6h1.4v1.3h-1.4zM586.1 92.2h0.9v4.6h-0.9zM585.8 93.4h1.4v1.8h-1.4zM589.1 91.0h0.9v2.1h-0.9zM588.8 91.0h1.4v1.3h-1.4zM591.4 89.6h0.9v3.5h-0.9zM591.0 91.4h1.4v1.3h-1.4zM592.1 90.4h0.9v4.2h-0.9zM591.8 92.0h1.4v1.3h-1.4zM592.9 92.1h0.9v1.6h-0.9zM592.5 92.4h1.4v1.3h-1.4zM594.4 91.9h0.9v3.5h-0.9zM594.0 93.0h1.4v1.3h-1.4zM595.1 92.5h0.9v4.4h-0.9zM594.8 93.7h1.4v1.3h-1.4zM595.9 94.0h0.9v2.2h-0.9zM595.5 94.5h1.4v1.3h-1.4zM596.6 95.2h0.9v2.3h-0.9zM596.3 95.7h1.4v1.3h-1.4zM600.4 96.6h0.9v3.1h-0.9zM600.1 97.6h1.4v1.3h-1.4zM601.3 98.5h0.9v2.6h-0.9zM601.0 98.5h1.4v1.3h-1.4zM602.1 97.8h0.9v4.2h-0.9zM601.8 98.7h1.4v1.3h-1.4zM603.8 99.3h0.9v3.0h-0.9zM603.5 100.1h1.4v1.3h-1.4zM604.6 100.3h0.9v3.1h-0.9zM604.3 101.3h1.4v1.3h-1.4zM610.9 99.3h0.9v1.8h-0.9zM610.5 99.3h1.4v1.3h-1.4zM611.6 100.0h0.9v3.3h-0.9zM611.3 100.6h1.4v2.6h-1.4zM613.9 106.0h0.9v3.2h-0.9zM613.5 106.7h1.4v2.2h-1.4zM614.6 108.4h0.9v2.0h-0.9zM614.3 108.9h1.4v1.5h-1.4zM624.9 99.9h0.9v2.6h-0.9zM624.5 100.5h1.4v1.3h-1.4zM628.6 99.8h0.9v2.4h-0.9zM628.3 99.9h1.4v1.3h-1.4zM630.9 100.6h0.9v2.4h-0.9zM630.5 101.0h1.4v1.3h-1.4zM631.6 100.5h0.9v1.9h-0.9zM631.3 100.8h1.4v1.3h-1.4zM632.4 99.2h0.9v4.8h-0.9zM632.1 100.8h1.4v2.4h-1.4zM633.3 103.2h0.9v3.2h-0.9zM633.0 103.2h1.4v2.8h-1.4zM634.1 104.4h0.9v5.1h-0.9zM633.8 106.0h1.4v3.3h-1.4zM634.9 108.5h0.9v3.1h-0.9zM634.6 109.3h1.4v1.9h-1.4zM635.8 110.3h0.9v3.9h-0.9zM635.5 111.2h1.4v2.6h-1.4zM636.6 112.0h0.9v5.7h-0.9zM636.3 113.7h1.4v3.1h-1.4zM639.6 107.0h0.9v4.2h-0.9zM639.3 107.6h1.4v2.0h-1.4zM649.3 90.3h0.9v1.8h-0.9zM649.0 90.8h1.4v1.3h-1.4zM653.9 87.9h0.9v3.7h-0.9zM653.5 88.6h1.4v1.5h-1.4zM654.6 90.0h0.9v1.5h-0.9zM654.3 90.0h1.4v1.3h-1.4zM655.4 89.1h0.9v3.1h-0.9zM655.0 90.6h1.4v1.3h-1.4zM656.1 89.8h0.9v4.3h-0.9zM655.8 90.7h1.4v1.5h-1.4zM656.9 91.2h0.9v2.4h-0.9zM656.5 92.2h1.4v1.3h-1.4zM659.2 91.9h0.9v3.5h-0.9zM658.9 92.7h1.4v1.3h-1.4zM659.9 93.4h0.9v2.0h-0.9zM659.6 93.4h1.4v1.3h-1.4zM662.3 93.8h0.9v3.2h-0.9zM662.0 94.2h1.4v1.3h-1.4zM663.0 94.1h0.9v1.6h-0.9zM662.7 94.2h1.4v1.4h-1.4zM663.8 94.9h0.9v2.8h-0.9zM663.5 95.6h1.4v1.3h-1.4zM666.9 95.3h0.9v3.1h-0.9zM666.6 95.3h1.4v1.3h-1.4zM670.0 93.0h0.9v2.4h-0.9zM669.7 93.9h1.4v1.3h-1.4zM672.4 92.6h0.9v3.3h-0.9zM672.1 94.1h1.4v1.4h-1.4zM673.2 93.7h0.9v3.4h-0.9zM672.9 95.5h1.4v1.6h-1.4zM674.0 96.6h0.9v2.2h-0.9zM673.7 97.1h1.4v1.6h-1.4zM675.6 98.7h0.9v1.7h-0.9zM675.3 98.9h1.4v1.3h-1.4zM676.4 97.0h0.9v4.7h-0.9zM676.0 98.9h1.4v1.3h-1.4zM689.1 94.3h0.9v2.8h-0.9zM688.8 95.3h1.4v1.3h-1.4zM693.6 93.3h0.9v3.9h-0.9zM693.3 94.3h1.4v1.3h-1.4zM698.1 80.0h0.9v4.1h-0.9zM697.8 81.7h1.4v1.3h-1.4zM701.1 76.9h0.9v2.8h-0.9zM700.8 76.9h1.4v1.3h-1.4zM706.4 70.1h0.9v3.8h-0.9zM706.1 71.5h1.4v1.3h-1.4zM707.2 71.1h0.9v3.6h-0.9zM706.9 72.3h1.4v1.3h-1.4zM708.8 72.0h0.9v2.1h-0.9zM708.5 72.1h1.4v1.3h-1.4zM709.6 71.7h0.9v2.7h-0.9zM709.3 72.9h1.4v1.3h-1.4zM711.2 66.6h0.9v3.2h-0.9zM710.9 66.8h1.4v2.7h-1.4zM716.8 46.1h0.9v3.4h-0.9zM716.5 46.9h1.4v2.4h-1.4zM718.4 44.7h0.9v3.5h-0.9zM718.1 45.1h1.4v1.3h-1.4zM720.0 45.0h0.9v3.3h-0.9zM719.7 45.6h1.4v1.3h-1.4zM721.6 44.4h0.9v3.1h-0.9zM721.3 45.8h1.4v1.3h-1.4zM723.2 48.8h0.9v3.7h-0.9zM722.9 49.0h1.4v2.0h-1.4zM724.0 49.9h0.9v4.2h-0.9zM723.7 50.9h1.4v1.4h-1.4zM724.8 52.3h0.9v1.9h-0.9zM724.5 52.4h1.4v1.3h-1.4zM729.6 51.6h0.9v5.5h-0.9zM729.3 52.8h1.4v3.4h-1.4zM730.6 55.3h0.9v6.4h-0.9zM730.3 56.2h1.4v4.0h-1.4zM731.6 60.0h0.9v3.5h-0.9zM731.3 60.2h1.4v3.2h-1.4zM732.6 62.0h0.9v5.8h-0.9zM732.3 63.4h1.4v4.0h-1.4zM735.6 58.6h0.9v8.8h-0.9zM735.3 59.4h1.4v6.6h-1.4zM736.6 65.9h0.9v7.0h-0.9zM736.3 66.0h1.4v6.7h-1.4zM737.6 72.3h0.9v15.6h-0.9zM737.3 72.7h1.4v14.4h-1.4zM744.6 64.8h0.9v5.9h-0.9zM744.3 66.0h1.4v4.2h-1.4zM745.6 69.6h0.9v5.0h-0.9zM745.3 70.1h1.4v4.2h-1.4zM748.6 67.5h0.9v11.7h-0.9zM748.3 69.4h1.4v8.5h-1.4zM749.6 76.7h0.9v11.4h-0.9zM749.3 77.9h1.4v9.0h-1.4zM752.6 75.2h0.9v6.4h-0.9zM752.3 77.1h1.4v4.1h-1.4zM753.6 80.8h0.9v6.2h-0.9zM753.3 81.2h1.4v4.1h-1.4zM754.6 85.3h0.9v7.9h-0.9zM754.3 85.3h1.4v7.7h-1.4zM755.6 92.4h0.9v50.9h-0.9zM755.3 93.1h1.4v48.3h-1.4zM758.1 112.2h0.9v3.8h-0.9zM757.8 114.1h1.4v1.3h-1.4zM764.4 107.8h0.9v2.8h-0.9zM764.0 108.4h1.4v1.3h-1.4zM765.1 108.8h0.9v2.7h-0.9zM764.8 109.4h1.4v2.1h-1.4zM765.9 110.8h0.9v3.2h-0.9zM765.5 111.5h1.4v2.1h-1.4zM766.6 113.3h0.9v3.1h-0.9zM766.3 113.6h1.4v1.8h-1.4zM767.4 115.3h0.9v3.3h-0.9zM767.0 115.4h1.4v1.5h-1.4zM768.1 116.7h0.9v3.5h-0.9zM767.8 116.9h1.4v1.3h-1.4zM768.9 116.8h0.9v4.2h-0.9zM768.5 118.1h1.4v1.3h-1.4zM771.9 121.4h0.9v4.1h-0.9zM771.5 123.1h1.4v2.0h-1.4zM773.4 125.4h0.9v4.1h-0.9zM773.0 125.6h1.4v2.6h-1.4zM774.1 128.1h0.9v2.8h-0.9zM773.8 128.1h1.4v1.3h-1.4zM777.2 133.8h0.9v1.8h-0.9zM776.9 134.3h1.4v1.3h-1.4zM778.0 134.1h0.9v4.6h-0.9zM777.7 135.6h1.4v1.6h-1.4zM778.8 136.2h0.9v2.5h-0.9zM778.5 137.2h1.4v1.3h-1.4zM779.6 136.3h0.9v4.0h-0.9zM779.3 138.2h1.4v1.3h-1.4zM780.4 138.1h0.9v5.2h-0.9zM780.1 139.4h1.4v2.4h-1.4zM781.2 141.3h0.9v4.1h-0.9zM780.9 141.8h1.4v3.4h-1.4zM782.0 144.2h0.9v5.8h-0.9zM781.7 145.2h1.4v3.0h-1.4zM782.8 148.1h0.9v3.0h-0.9zM782.5 148.1h1.4v2.9h-1.4zM783.6 150.2h0.9v4.0h-0.9zM783.3 151.0h1.4v2.7h-1.4zM784.4 152.6h0.9v4.1h-0.9zM784.1 153.7h1.4v1.3h-1.4zM786.0 155.6h0.9v4.4h-0.9zM785.7 156.7h1.4v1.8h-1.4zM787.6 159.4h0.9v2.0h-0.9zM787.3 159.7h1.4v1.4h-1.4zM788.6 161.0h0.9v3.0h-0.9zM788.3 161.1h1.4v2.4h-1.4zM789.6 161.7h0.9v6.7h-0.9zM789.3 163.5h1.4v3.6h-1.4zM790.4 163.4h0.9v4.0h-0.9zM790.0 164.7h1.4v2.4h-1.4zM791.9 158.6h0.9v3.8h-0.9zM791.5 159.0h1.4v2.1h-1.4zM792.6 155.0h0.9v4.7h-0.9zM792.3 156.4h1.4v2.6h-1.4zM795.8 153.1h0.9v4.3h-0.9zM795.5 154.2h1.4v1.3h-1.4zM797.4 152.2h0.9v4.4h-0.9zM797.1 153.4h1.4v1.3h-1.4zM798.2 153.4h0.9v3.9h-0.9zM797.9 154.5h1.4v1.6h-1.4zM799.8 158.5h0.9v1.8h-0.9zM799.5 158.7h1.4v1.3h-1.4zM800.6 158.7h0.9v4.8h-0.9zM800.3 159.6h1.4v2.8h-1.4zM801.4 162.1h0.9v1.7h-0.9zM801.0 162.5h1.4v1.3h-1.4zM802.9 161.9h0.9v4.3h-0.9zM802.5 163.8h1.4v1.3h-1.4zM804.4 164.3h0.9v3.0h-0.9zM804.1 165.4h1.4v1.3h-1.4zM805.2 164.8h0.9v4.0h-0.9zM804.9 166.6h1.4v1.8h-1.4zM806.0 166.9h0.9v3.4h-0.9zM805.7 168.4h1.4v1.7h-1.4zM808.6 170.4h0.9v4.3h-0.9zM808.3 171.5h1.4v3.1h-1.4zM809.6 172.7h0.9v4.5h-0.9zM809.3 174.6h1.4v2.1h-1.4zM813.2 168.1h0.9v2.6h-0.9zM812.9 168.8h1.4v1.8h-1.4zM814.8 172.3h0.9v3.1h-0.9zM814.5 172.4h1.4v2.7h-1.4zM815.6 174.2h0.9v3.4h-0.9zM815.3 175.2h1.4v1.8h-1.4zM816.4 175.9h0.9v3.9h-0.9zM816.1 176.9h1.4v1.3h-1.4zM818.0 178.1h0.9v1.4h-0.9zM817.7 178.1h1.4v1.3h-1.4zM818.8 178.4h0.9v2.1h-0.9zM818.5 178.6h1.4v1.3h-1.4zM832.9 170.1h0.9v2.9h-0.9zM832.6 170.6h1.4v1.3h-1.4zM833.8 168.9h0.9v2.4h-0.9zM833.5 169.1h1.4v1.5h-1.4zM834.6 168.2h0.9v3.9h-0.9zM834.3 168.8h1.4v1.3h-1.4zM840.4 165.2h0.9v1.5h-0.9zM840.1 165.3h1.4v1.3h-1.4zM842.9 164.2h0.9v3.9h-0.9zM842.6 165.3h1.4v1.3h-1.4zM843.8 163.6h0.9v3.6h-0.9zM843.5 165.4h1.4v1.3h-1.4zM844.6 165.2h0.9v1.4h-0.9zM844.3 165.3h1.4v1.3h-1.4zM846.3 164.1h0.9v4.3h-0.9zM846.0 165.7h1.4v1.3h-1.4zM847.1 166.3h0.9v1.6h-0.9zM846.8 166.4h1.4v1.3h-1.4zM847.9 166.0h0.9v4.4h-0.9zM847.6 167.4h1.4v1.3h-1.4zM848.8 168.2h0.9v3.0h-0.9zM848.5 168.2h1.4v1.3h-1.4zM858.8 169.2h0.9v2.9h-0.9zM858.5 169.6h1.4v1.3h-1.4zM861.9 170.0h0.9v2.8h-0.9zM861.5 170.2h1.4v1.3h-1.4zM863.4 168.4h0.9v2.4h-0.9zM863.0 169.3h1.4v1.3h-1.4zM866.4 167.0h0.9v3.3h-0.9zM866.0 167.1h1.4v1.5h-1.4zM867.1 168.2h0.9v2.4h-0.9zM866.8 168.5h1.4v1.3h-1.4zM869.4 167.9h0.9v3.0h-0.9zM869.0 168.1h1.4v1.3h-1.4zM870.1 168.0h0.9v2.1h-0.9zM869.8 168.7h1.4v1.3h-1.4zM870.9 169.2h0.9v1.4h-0.9zM870.5 169.2h1.4v1.3h-1.4zM879.0 167.7h0.9v1.6h-0.9zM878.7 167.9h1.4v1.3h-1.4zM880.6 169.8h0.9v2.9h-0.9zM880.3 170.2h1.4v1.3h-1.4zM884.8 171.2h0.9v1.8h-0.9zM884.5 171.3h1.4v1.3h-1.4zM895.9 156.4h0.9v3.8h-0.9zM895.6 157.0h1.4v1.3h-1.4zM902.4 151.0h0.9v3.5h-0.9zM902.1 152.9h1.4v1.3h-1.4zM904.9 153.6h0.9v2.8h-0.9zM904.6 154.2h1.4v1.3h-1.4zM907.4 155.3h0.9v2.8h-0.9zM907.1 156.3h1.4v1.3h-1.4zM908.3 156.2h0.9v2.5h-0.9zM908.0 157.0h1.4v1.3h-1.4zM909.1 156.1h0.9v4.4h-0.9zM908.8 157.6h1.4v1.3h-1.4zM909.9 156.3h0.9v4.4h-0.9zM909.6 158.1h1.4v1.3h-1.4zM913.9 159.0h0.9v1.4h-0.9zM913.5 159.0h1.4v1.3h-1.4zM914.6 159.2h0.9v2.4h-0.9zM914.3 159.8h1.4v1.3h-1.4zM916.1 159.2h0.9v4.2h-0.9zM915.8 160.9h1.4v1.3h-1.4zM916.9 160.2h0.9v2.2h-0.9zM916.5 161.1h1.4v1.3h-1.4zM918.4 159.7h0.9v2.6h-0.9zM918.0 160.8h1.4v1.3h-1.4zM919.9 159.2h0.9v2.2h-0.9zM919.5 159.2h1.4v1.3h-1.4zM923.6 158.5h0.9v1.8h-0.9zM923.3 158.7h1.4v1.3h-1.4zM925.1 158.6h0.9v3.3h-0.9zM924.8 158.7h1.4v1.3h-1.4zM925.9 157.8h0.9v2.9h-0.9zM925.5 159.2h1.4v1.4h-1.4zM926.6 159.3h0.9v4.2h-0.9zM926.3 160.6h1.4v1.3h-1.4zM927.4 161.1h0.9v1.5h-0.9zM927.0 161.3h1.4v1.3h-1.4zM928.1 159.6h0.9v4.8h-0.9zM927.8 161.3h1.4v1.3h-1.4zM928.9 160.7h0.9v2.2h-0.9zM928.5 161.6h1.4v1.3h-1.4zM931.3 162.8h0.9v1.7h-0.9zM931.0 162.8h1.4v1.3h-1.4zM932.9 163.7h0.9v3.9h-0.9zM932.6 164.6h1.4v1.3h-1.4zM934.6 165.0h0.9v3.1h-0.9zM934.3 165.3h1.4v1.3h-1.4zM935.4 164.7h0.9v4.0h-0.9zM935.1 166.5h1.4v1.6h-1.4zM938.8 168.3h0.9v2.6h-0.9zM938.5 169.3h1.4v1.3h-1.4zM939.6 169.8h0.9v1.5h-0.9zM939.3 169.9h1.4v1.3h-1.4zM941.1 170.1h0.9v3.8h-0.9zM940.8 170.8h1.4v1.3h-1.4zM944.1 171.0h0.9v3.0h-0.9zM943.8 171.1h1.4v1.3h-1.4zM948.6 173.2h0.9v2.6h-0.9zM948.3 174.0h1.4v1.3h-1.4zM951.6 173.9h0.9v2.6h-0.9zM951.3 174.5h1.4v1.6h-1.4zM958.0 176.1h0.9v2.0h-0.9zM957.7 176.6h1.4v1.3h-1.4zM961.2 177.4h0.9v1.5h-0.9zM960.9 177.5h1.4v1.3h-1.4zM962.8 177.0h0.9v2.4h-0.9zM962.5 177.6h1.4v1.3h-1.4zM964.4 177.3h0.9v1.6h-0.9zM964.1 177.5h1.4v1.3h-1.4zM966.0 177.5h0.9v3.3h-0.9zM965.7 178.1h1.4v1.3h-1.4z"/>
<path fill="#e6d67a" d="M11.3 233.0h0.9v4.7h-0.9zM11.0 234.5h1.4v1.3h-1.4zM42.0 230.8h0.9v2.7h-0.9zM41.7 232.2h1.4v1.3h-1.4zM46.4 228.0h0.9v3.5h-0.9zM46.1 228.5h1.4v1.3h-1.4zM51.1 229.9h0.9v2.4h-0.9zM50.8 230.0h1.4v1.3h-1.4zM54.1 228.7h0.9v2.6h-0.9zM53.8 229.3h1.4v1.3h-1.4zM54.9 227.5h0.9v3.2h-0.9zM54.5 229.3h1.4v1.3h-1.4zM60.9 223.6h0.9v2.1h-0.9zM60.5 223.8h1.4v1.3h-1.4zM71.1 218.4h0.9v4.0h-0.9zM70.8 219.9h1.4v1.3h-1.4zM77.6 218.4h0.9v2.8h-0.9zM77.3 219.9h1.4v1.3h-1.4zM80.7 218.7h0.9v3.7h-0.9zM80.4 220.6h1.4v1.3h-1.4zM82.3 219.4h0.9v2.9h-0.9zM82.0 220.7h1.4v1.3h-1.4zM85.4 218.4h0.9v3.2h-0.9zM85.1 220.1h1.4v1.3h-1.4zM87.7 218.3h0.9v2.1h-0.9zM87.4 219.0h1.4v1.3h-1.4zM89.3 217.4h0.9v3.0h-0.9zM89.0 218.9h1.4v1.3h-1.4zM92.3 219.2h0.9v3.8h-0.9zM92.0 219.9h1.4v1.3h-1.4zM98.4 217.4h0.9v2.4h-0.9zM98.1 217.6h1.4v1.3h-1.4zM99.3 217.6h0.9v2.6h-0.9zM99.0 217.7h1.4v1.3h-1.4zM104.3 221.7h0.9v2.7h-0.9zM104.0 222.0h1.4v1.3h-1.4zM111.8 226.3h0.9v4.1h-0.9zM111.5 227.2h1.4v1.3h-1.4zM113.4 227.0h0.9v2.9h-0.9zM113.1 227.4h1.4v1.3h-1.4zM118.3 231.5h0.9v4.4h-0.9zM118.0 233.2h1.4v1.3h-1.4zM126.1 226.1h0.9v2.1h-0.9zM125.8 226.4h1.4v1.3h-1.4zM129.2 223.8h0.9v2.9h-0.9zM128.9 224.0h1.4v1.3h-1.4zM129.9 223.3h0.9v2.7h-0.9zM129.6 224.4h1.4v1.3h-1.4zM137.1 219.6h0.9v4.5h-0.9zM136.8 221.1h1.4v1.3h-1.4zM143.8 215.6h0.9v2.4h-0.9zM143.5 215.6h1.4v1.3h-1.4zM149.6 214.5h0.9v3.5h-0.9zM149.3 216.4h1.4v1.3h-1.4zM153.8 220.1h0.9v2.7h-0.9zM153.5 220.9h1.4v1.4h-1.4zM155.4 221.8h0.9v3.3h-0.9zM155.1 223.7h1.4v1.3h-1.4zM160.8 225.7h0.9v3.4h-0.9zM160.5 227.3h1.4v1.3h-1.4zM161.6 227.3h0.9v1.6h-0.9zM161.3 227.6h1.4v1.3h-1.4zM165.3 226.9h0.9v2.0h-0.9zM165.1 227.4h1.4v1.3h-1.4zM169.9 226.5h0.9v2.6h-0.9zM169.6 226.8h1.4v1.3h-1.4zM170.7 225.9h0.9v2.4h-0.9zM170.4 226.6h1.4v1.3h-1.4zM172.3 227.0h0.9v2.7h-0.9zM172.0 227.4h1.4v1.3h-1.4zM173.8 227.0h0.9v3.0h-0.9zM173.5 228.3h1.4v1.3h-1.4zM176.3 228.5h0.9v3.1h-0.9zM176.0 228.8h1.4v1.3h-1.4zM177.9 227.3h0.9v3.7h-0.9zM177.6 228.1h1.4v1.3h-1.4zM182.9 224.8h0.9v4.5h-0.9zM182.6 226.6h1.4v1.3h-1.4zM186.3 224.2h0.9v4.1h-0.9zM186.0 225.5h1.4v1.3h-1.4zM187.1 225.1h0.9v1.7h-0.9zM186.8 225.3h1.4v1.3h-1.4zM188.8 224.7h0.9v3.9h-0.9zM188.5 226.0h1.4v1.3h-1.4zM191.3 224.7h0.9v2.2h-0.9zM191.0 225.5h1.4v1.3h-1.4zM197.1 221.2h0.9v3.0h-0.9zM196.8 222.6h1.4v1.3h-1.4zM197.9 221.3h0.9v3.3h-0.9zM197.6 222.8h1.4v1.3h-1.4zM198.8 222.8h0.9v1.9h-0.9zM198.5 222.9h1.4v1.3h-1.4zM200.4 222.2h0.9v1.6h-0.9zM200.1 222.3h1.4v1.3h-1.4zM202.9 223.6h0.9v2.6h-0.9zM202.6 223.6h1.4v1.3h-1.4zM205.4 225.2h0.9v2.0h-0.9zM205.1 225.8h1.4v1.3h-1.4zM206.2 225.3h0.9v3.4h-0.9zM205.9 226.1h1.4v1.3h-1.4zM218.8 230.4h0.9v2.4h-0.9zM218.5 231.3h1.4v1.3h-1.4zM219.6 231.2h0.9v3.4h-0.9zM219.3 231.6h1.4v1.3h-1.4zM221.1 232.7h0.9v2.0h-0.9zM220.8 233.3h1.4v1.3h-1.4zM231.5 228.0h0.9v2.9h-0.9zM231.2 229.3h1.4v1.3h-1.4zM233.0 227.6h0.9v3.2h-0.9zM232.7 228.2h1.4v1.3h-1.4zM235.4 227.1h0.9v2.7h-0.9zM235.1 227.9h1.4v1.3h-1.4zM242.1 221.1h0.9v3.3h-0.9zM241.8 222.6h1.4v1.3h-1.4zM255.0 225.4h0.9v3.1h-0.9zM254.7 226.0h1.4v1.3h-1.4zM255.8 225.2h0.9v3.0h-0.9zM255.5 225.8h1.4v1.3h-1.4zM258.2 225.9h0.9v2.7h-0.9zM257.9 226.4h1.4v1.3h-1.4zM259.8 224.9h0.9v3.9h-0.9zM259.5 226.9h1.4v1.3h-1.4zM270.0 226.0h0.9v2.3h-0.9zM269.7 226.7h1.4v1.3h-1.4zM270.8 224.7h0.9v4.9h-0.9zM270.5 226.7h1.4v1.3h-1.4zM271.6 225.7h0.9v3.9h-0.9zM271.3 226.9h1.4v1.3h-1.4zM272.4 226.8h0.9v2.2h-0.9zM272.1 226.9h1.4v1.3h-1.4zM274.0 226.6h0.9v3.6h-0.9zM273.7 228.0h1.4v1.3h-1.4zM274.8 227.2h0.9v2.5h-0.9zM274.5 228.0h1.4v1.3h-1.4zM278.8 230.6h0.9v2.3h-0.9zM278.5 230.6h1.4v1.3h-1.4zM280.4 231.2h0.9v2.1h-0.9zM280.1 231.3h1.4v1.3h-1.4zM285.4 228.2h0.9v4.2h-0.9zM285.1 229.7h1.4v1.3h-1.4zM287.9 229.7h0.9v2.6h-0.9zM287.6 230.1h1.4v1.3h-1.4zM298.6 239.8h0.9v2.5h-0.9zM298.3 240.2h1.4v1.3h-1.4zM300.1 241.0h0.9v3.3h-0.9zM299.8 241.8h1.4v1.3h-1.4zM309.4 268.0h0.9v3.9h-0.9zM309.1 268.8h1.4v1.3h-1.4zM311.6 264.8h0.9v2.9h-0.9zM311.3 264.9h1.4v1.3h-1.4zM313.9 258.1h0.9v4.5h-0.9zM313.6 259.5h1.4v2.2h-1.4zM317.6 261.9h0.9v2.5h-0.9zM317.3 263.0h1.4v1.3h-1.4zM318.6 260.6h0.9v2.9h-0.9zM318.3 261.0h1.4v2.5h-1.4zM336.6 299.5h0.9v4.3h-0.9zM336.3 299.6h1.4v2.3h-1.4zM347.2 309.2h0.9v1.7h-0.9zM346.9 309.5h1.4v1.3h-1.4zM348.0 309.8h0.9v1.5h-0.9zM347.7 310.0h1.4v1.3h-1.4zM348.8 308.4h0.9v3.5h-0.9zM348.5 309.7h1.4v1.3h-1.4zM351.3 308.5h0.9v3.3h-0.9zM351.0 309.4h1.4v1.3h-1.4zM356.2 310.9h0.9v3.5h-0.9zM355.9 312.3h1.4v1.3h-1.4zM358.6 308.5h0.9v1.8h-0.9zM358.3 308.8h1.4v1.3h-1.4zM362.2 316.0h0.9v3.6h-0.9zM361.9 317.2h1.4v1.3h-1.4zM364.6 312.4h0.9v2.3h-0.9zM364.3 313.2h1.4v1.3h-1.4zM365.4 312.0h0.9v2.7h-0.9zM365.1 313.2h1.4v1.3h-1.4zM367.9 311.9h0.9v3.4h-0.9zM367.6 312.2h1.4v1.3h-1.4zM368.8 311.8h0.9v2.0h-0.9zM368.5 312.1h1.4v1.3h-1.4zM379.6 294.9h0.9v2.2h-0.9zM379.3 295.0h1.4v1.3h-1.4zM383.6 296.5h0.9v3.2h-0.9zM383.3 298.3h1.4v1.3h-1.4zM384.4 297.0h0.9v4.5h-0.9zM384.1 298.3h1.4v2.3h-1.4zM397.2 301.0h0.9v3.6h-0.9zM396.9 302.3h1.4v2.3h-1.4zM398.8 306.0h0.9v3.0h-0.9zM398.5 306.1h1.4v1.3h-1.4zM409.6 326.6h0.9v2.6h-0.9zM409.3 327.4h1.4v1.3h-1.4zM410.4 327.5h0.9v3.6h-0.9zM410.1 327.9h1.4v1.3h-1.4zM411.2 327.1h0.9v3.0h-0.9zM410.9 328.3h1.4v1.3h-1.4zM414.4 330.1h0.9v2.7h-0.9zM414.1 330.4h1.4v1.3h-1.4zM425.2 335.5h0.9v1.8h-0.9zM424.9 335.7h1.4v1.3h-1.4zM427.6 336.1h0.9v3.1h-0.9zM427.3 337.8h1.4v1.3h-1.4zM429.2 338.2h0.9v2.5h-0.9zM428.9 338.7h1.4v1.3h-1.4zM430.0 338.1h0.9v3.5h-0.9zM429.7 339.8h1.4v1.3h-1.4zM437.2 336.7h0.9v4.0h-0.9zM436.9 338.3h1.4v1.3h-1.4zM441.2 336.0h0.9v3.4h-0.9zM440.9 336.5h1.4v1.3h-1.4zM442.0 336.3h0.9v2.9h-0.9zM441.7 336.5h1.4v1.3h-1.4zM443.6 336.3h0.9v3.3h-0.9zM443.3 338.2h1.4v1.3h-1.4zM449.2 346.7h0.9v3.6h-0.9zM448.9 347.6h1.4v1.3h-1.4zM450.0 346.5h0.9v4.0h-0.9zM449.7 348.1h1.4v1.3h-1.4zM450.8 346.9h0.9v3.2h-0.9zM450.5 348.3h1.4v1.3h-1.4zM456.3 342.8h0.9v2.6h-0.9zM456.0 343.3h1.4v1.3h-1.4zM457.9 340.9h0.9v2.7h-0.9zM457.6 341.0h1.4v1.3h-1.4zM460.4 338.2h0.9v4.2h-0.9zM460.1 339.4h1.4v1.3h-1.4zM462.6 341.3h0.9v1.8h-0.9zM462.3 341.7h1.4v1.4h-1.4zM472.6 335.2h0.9v5.4h-0.9zM472.3 336.0h1.4v2.7h-1.4zM477.4 339.9h0.9v4.0h-0.9zM477.1 340.7h1.4v2.6h-1.4zM487.2 334.6h0.9v1.7h-0.9zM486.9 334.6h1.4v1.3h-1.4zM488.0 333.0h0.9v3.2h-0.9zM487.7 334.5h1.4v1.3h-1.4zM490.6 331.8h0.9v3.7h-0.9zM490.3 331.8h1.4v2.9h-1.4zM500.8 329.0h0.9v2.6h-0.9zM500.5 329.5h1.4v1.3h-1.4zM503.1 331.2h0.9v3.6h-0.9zM502.8 332.9h1.4v1.3h-1.4zM507.6 334.3h0.9v1.7h-0.9zM507.3 334.8h1.4v1.3h-1.4zM528.0 332.0h0.9v2.6h-0.9zM527.7 332.3h1.4v1.3h-1.4zM535.4 323.0h0.9v2.4h-0.9zM535.1 323.0h1.4v1.9h-1.4zM541.3 327.2h0.9v4.6h-0.9zM541.0 329.1h1.4v1.3h-1.4zM542.1 328.0h0.9v2.8h-0.9zM541.8 329.3h1.4v1.3h-1.4zM547.9 328.7h0.9v2.2h-0.9zM547.6 329.5h1.4v1.3h-1.4zM554.1 330.6h0.9v3.9h-0.9zM553.8 332.3h1.4v1.3h-1.4zM554.9 332.1h0.9v1.7h-0.9zM554.5 332.5h1.4v1.3h-1.4zM565.9 313.8h0.9v3.3h-0.9zM565.5 314.8h1.4v1.3h-1.4zM569.6 314.3h0.9v3.6h-0.9zM569.3 314.7h1.4v1.3h-1.4zM572.7 314.2h0.9v1.6h-0.9zM572.4 314.5h1.4v1.3h-1.4zM576.6 313.9h0.9v3.5h-0.9zM576.3 314.3h1.4v1.3h-1.4zM580.8 313.3h0.9v3.0h-0.9zM580.5 313.8h1.4v1.3h-1.4zM587.4 321.8h0.9v1.4h-0.9zM587.1 321.9h1.4v1.3h-1.4zM588.3 321.9h0.9v2.1h-0.9zM588.0 322.3h1.4v1.3h-1.4zM592.4 322.2h0.9v4.0h-0.9zM592.0 323.1h1.4v1.3h-1.4zM597.6 320.2h0.9v3.4h-0.9zM597.3 321.9h1.4v1.3h-1.4zM599.9 322.5h0.9v2.0h-0.9zM599.5 323.1h1.4v1.3h-1.4zM601.4 322.2h0.9v2.0h-0.9zM601.0 322.9h1.4v1.3h-1.4zM605.3 322.1h0.9v3.3h-0.9zM605.0 323.3h1.4v1.3h-1.4zM607.8 320.9h0.9v3.1h-0.9zM607.5 322.6h1.4v1.3h-1.4zM617.1 343.0h0.9v3.5h-0.9zM616.8 344.3h1.4v1.5h-1.4zM617.9 344.2h0.9v1.6h-0.9zM617.5 344.3h1.4v1.3h-1.4zM624.6 327.7h0.9v2.3h-0.9zM624.3 328.1h1.4v1.3h-1.4zM629.1 341.8h0.9v2.0h-0.9zM628.8 342.2h1.4v1.3h-1.4zM636.9 351.0h0.9v4.4h-0.9zM636.5 352.8h1.4v1.3h-1.4zM643.4 343.2h0.9v4.1h-0.9zM643.1 345.0h1.4v1.3h-1.4zM653.4 350.4h0.9v2.2h-0.9zM653.1 351.2h1.4v1.3h-1.4zM654.2 350.7h0.9v3.2h-0.9zM653.9 351.0h1.4v1.3h-1.4zM655.0 349.4h0.9v3.2h-0.9zM654.7 350.6h1.4v1.3h-1.4zM657.4 348.2h0.9v3.0h-0.9zM657.0 348.5h1.4v1.3h-1.4zM659.6 351.9h0.9v1.8h-0.9zM659.3 352.3h1.4v1.3h-1.4zM669.4 359.7h0.9v3.0h-0.9zM669.1 359.8h1.4v1.3h-1.4zM671.0 357.4h0.9v3.4h-0.9zM670.7 358.2h1.4v1.3h-1.4zM671.8 355.0h0.9v4.8h-0.9zM671.5 356.9h1.4v1.4h-1.4zM674.9 352.3h0.9v3.3h-0.9zM674.5 354.2h1.4v1.3h-1.4zM682.0 335.9h0.9v3.3h-0.9zM681.7 336.5h1.4v2.2h-1.4zM687.4 350.1h0.9v1.9h-0.9zM687.0 350.6h1.4v1.3h-1.4zM688.9 347.1h0.9v3.2h-0.9zM688.5 348.8h1.4v1.3h-1.4zM710.0 302.9h0.9v3.5h-0.9zM709.7 304.4h1.4v1.3h-1.4zM715.6 296.4h0.9v3.3h-0.9zM715.3 297.8h1.4v1.3h-1.4zM716.4 294.7h0.9v3.9h-0.9zM716.1 295.8h1.4v2.0h-1.4zM718.0 292.2h0.9v4.2h-0.9zM717.7 292.3h1.4v2.5h-1.4zM722.6 291.5h0.9v4.5h-0.9zM722.3 293.1h1.4v1.3h-1.4zM723.4 290.7h0.9v3.4h-0.9zM723.1 292.1h1.4v1.3h-1.4zM724.2 291.7h0.9v2.4h-0.9zM723.9 292.1h1.4v1.3h-1.4zM725.0 291.5h0.9v3.2h-0.9zM724.7 291.9h1.4v1.3h-1.4zM726.6 289.2h0.9v3.1h-0.9zM726.3 290.3h1.4v1.3h-1.4zM731.4 294.2h0.9v2.4h-0.9zM731.0 295.2h1.4v1.3h-1.4zM733.6 298.2h0.9v1.9h-0.9zM733.3 298.3h1.4v1.3h-1.4zM736.6 306.9h0.9v2.7h-0.9zM736.3 307.1h1.4v2.2h-1.4zM741.6 299.8h0.9v3.9h-0.9zM741.3 300.5h1.4v1.3h-1.4zM743.9 302.2h0.9v2.6h-0.9zM743.5 303.2h1.4v1.3h-1.4zM752.6 323.6h0.9v2.8h-0.9zM752.3 323.9h1.4v1.7h-1.4zM765.6 338.4h0.9v3.0h-0.9zM765.3 338.4h1.4v1.6h-1.4zM772.2 350.2h0.9v2.2h-0.9zM771.9 351.0h1.4v1.3h-1.4zM774.6 353.8h0.9v3.0h-0.9zM774.3 354.1h1.4v1.8h-1.4zM780.2 361.9h0.9v2.4h-0.9zM779.9 362.4h1.4v1.3h-1.4zM784.2 366.9h0.9v2.0h-0.9zM783.9 367.6h1.4v1.3h-1.4zM786.6 367.1h0.9v2.9h-0.9zM786.3 368.8h1.4v1.3h-1.4zM787.4 368.4h0.9v3.3h-0.9zM787.0 369.4h1.4v2.0h-1.4zM789.6 373.2h0.9v2.5h-0.9zM789.3 373.3h1.4v1.3h-1.4zM797.1 384.7h0.9v2.3h-0.9zM796.8 385.3h1.4v1.3h-1.4zM797.9 384.9h0.9v3.0h-0.9zM797.5 385.4h1.4v1.4h-1.4zM800.1 382.1h0.9v3.5h-0.9zM799.8 382.7h1.4v2.5h-1.4zM800.9 379.3h0.9v5.1h-0.9zM800.5 381.0h1.4v1.7h-1.4zM806.1 385.3h0.9v2.1h-0.9zM805.8 385.6h1.4v1.3h-1.4zM807.6 385.9h0.9v4.0h-0.9zM807.3 387.3h1.4v1.3h-1.4zM810.0 383.3h0.9v3.3h-0.9zM809.7 385.2h1.4v1.3h-1.4zM811.6 382.6h0.9v3.1h-0.9zM811.3 384.0h1.4v1.3h-1.4zM813.3 382.6h0.9v1.8h-0.9zM813.0 382.9h1.4v1.3h-1.4zM815.8 382.0h0.9v1.5h-0.9zM815.5 382.2h1.4v1.3h-1.4zM816.6 382.2h0.9v2.8h-0.9zM816.3 382.2h1.4v1.3h-1.4zM824.1 371.3h0.9v3.4h-0.9zM823.8 371.4h1.4v1.3h-1.4zM825.6 368.9h0.9v2.6h-0.9zM825.3 369.9h1.4v1.3h-1.4zM826.4 368.2h0.9v4.0h-0.9zM826.1 369.2h1.4v1.3h-1.4zM827.2 367.9h0.9v2.3h-0.9zM826.9 367.9h1.4v1.3h-1.4zM828.0 367.2h0.9v2.9h-0.9zM827.7 367.7h1.4v1.3h-1.4zM828.8 367.0h0.9v3.4h-0.9zM828.5 367.7h1.4v1.3h-1.4zM830.4 366.4h0.9v2.0h-0.9zM830.1 366.6h1.4v1.3h-1.4zM832.0 367.9h0.9v1.8h-0.9zM831.7 367.9h1.4v1.3h-1.4zM832.8 366.6h0.9v2.8h-0.9zM832.5 368.1h1.4v1.3h-1.4zM835.2 366.1h0.9v3.3h-0.9zM834.9 368.1h1.4v1.3h-1.4zM836.0 367.0h0.9v4.0h-0.9zM835.7 367.8h1.4v1.3h-1.4zM838.4 368.6h0.9v2.6h-0.9zM838.1 369.0h1.4v1.3h-1.4zM839.3 366.7h0.9v3.7h-0.9zM839.0 368.6h1.4v1.3h-1.4zM840.1 367.2h0.9v4.0h-0.9zM839.8 368.6h1.4v1.3h-1.4zM841.8 369.1h0.9v1.9h-0.9zM841.5 369.3h1.4v1.3h-1.4zM845.1 370.9h0.9v2.8h-0.9zM844.8 372.3h1.4v1.3h-1.4zM846.8 369.3h0.9v3.4h-0.9zM846.5 371.2h1.4v1.3h-1.4zM854.0 376.5h0.9v2.9h-0.9zM853.7 376.7h1.4v1.3h-1.4zM855.6 376.1h0.9v2.0h-0.9zM855.3 376.2h1.4v1.3h-1.4zM858.0 373.0h0.9v4.1h-0.9zM857.7 374.0h1.4v1.3h-1.4zM859.6 372.9h0.9v2.5h-0.9zM859.3 373.3h1.4v1.3h-1.4zM863.6 368.4h0.9v2.1h-0.9zM863.3 369.1h1.4v1.3h-1.4zM871.8 359.1h0.9v1.6h-0.9zM871.5 359.4h1.4v1.3h-1.4zM872.6 357.2h0.9v5.1h-0.9zM872.3 359.1h1.4v1.3h-1.4zM875.9 357.4h0.9v2.1h-0.9zM875.6 358.0h1.4v1.3h-1.4zM881.8 360.8h0.9v3.2h-0.9zM881.5 361.1h1.4v1.3h-1.4zM882.6 360.5h0.9v2.5h-0.9zM882.3 361.1h1.4v1.3h-1.4zM884.2 360.5h0.9v2.7h-0.9zM883.9 361.7h1.4v1.3h-1.4zM885.0 360.3h0.9v3.6h-0.9zM884.7 360.7h1.4v1.3h-1.4zM886.6 359.3h0.9v3.6h-0.9zM886.3 361.1h1.4v1.3h-1.4zM891.9 350.8h0.9v4.1h-0.9zM891.5 351.9h1.4v1.3h-1.4zM899.2 346.2h0.9v2.1h-0.9zM898.9 346.7h1.4v1.5h-1.4zM900.0 346.3h0.9v4.1h-0.9zM899.7 348.2h1.4v1.3h-1.4zM904.0 348.4h0.9v3.6h-0.9zM903.7 349.7h1.4v1.3h-1.4zM905.6 348.1h0.9v2.3h-0.9zM905.3 349.2h1.4v1.3h-1.4zM908.8 349.5h0.9v3.4h-0.9zM908.5 349.8h1.4v1.3h-1.4zM912.8 350.1h0.9v1.4h-0.9zM912.5 350.2h1.4v1.3h-1.4zM916.8 347.1h0.9v2.7h-0.9zM916.5 348.4h1.4v1.3h-1.4zM924.6 352.0h0.9v3.1h-0.9zM924.3 352.4h1.4v1.3h-1.4zM926.9 353.9h0.9v2.6h-0.9zM926.6 354.6h1.4v1.3h-1.4zM929.3 355.6h0.9v2.2h-0.9zM929.0 356.1h1.4v1.3h-1.4zM930.0 356.0h0.9v3.9h-0.9zM929.7 356.8h1.4v1.3h-1.4zM934.0 355.6h0.9v4.9h-0.9zM933.7 357.5h1.4v1.3h-1.4zM934.8 356.1h0.9v3.1h-0.9zM934.5 357.1h1.4v1.3h-1.4zM938.0 358.6h0.9v3.0h-0.9zM937.7 358.6h1.4v1.3h-1.4zM940.4 358.4h0.9v2.3h-0.9zM940.1 358.9h1.4v1.3h-1.4zM942.9 356.8h0.9v2.6h-0.9zM942.6 357.9h1.4v1.3h-1.4zM943.8 356.8h0.9v2.2h-0.9zM943.5 357.5h1.4v1.3h-1.4zM952.8 360.8h0.9v3.2h-0.9zM952.5 362.3h1.4v1.3h-1.4zM957.6 362.6h0.9v1.4h-0.9zM957.3 362.7h1.4v1.3h-1.4zM960.6 362.9h0.9v3.2h-0.9zM960.3 363.9h1.4v1.3h-1.4zM961.4 364.5h0.9v3.3h-0.9zM961.0 365.0h1.4v1.3h-1.4z"/>
<path fill="#ff2020" d="M9.6 232.0h0.9v3.2h-0.9zM9.3 233.0h1.4v1.9h-1.4zM40.4 231.6h0.9v4.4h-0.9zM40.1 233.4h1.4v1.3h-1.4zM41.2 230.8h0.9v3.9h-0.9zM40.9 232.5h1.4v1.3h-1.4zM45.6 228.2h0.9v3.5h-0.9zM45.3 228.9h1.4v1.6h-1.4zM50.4 228.9h0.9v2.6h-0.9zM50.0 230.0h1.4v1.5h-1.4zM55.6 228.0h0.9v2.2h-0.9zM55.3 228.1h1.4v1.3h-1.4zM60.1 224.4h0.9v3.1h-0.9zM59.8 224.4h1.4v1.3h-1.4zM71.8 216.5h0.9v3.7h-0.9zM71.5 218.4h1.4v1.6h-1.4zM73.4 216.6h0.9v2.1h-0.9zM73.1 217.3h1.4v1.3h-1.4zM86.9 218.9h0.9v2.1h-0.9zM86.6 219.0h1.4v1.3h-1.4zM112.6 227.1h0.9v1.7h-0.9zM112.3 227.2h1.4v1.3h-1.4zM117.4 233.3h0.9v1.7h-0.9zM117.1 233.3h1.4v1.3h-1.4zM122.3 228.4h0.9v2.3h-0.9zM122.0 228.7h1.4v1.3h-1.4zM125.3 225.9h0.9v2.3h-0.9zM125.0 226.6h1.4v1.3h-1.4zM126.8 224.4h0.9v2.7h-0.9zM126.5 225.7h1.4v1.3h-1.4zM131.5 221.9h0.9v4.3h-0.9zM131.2 222.9h1.4v1.3h-1.4zM136.3 221.3h0.9v1.9h-0.9zM136.0 221.4h1.4v1.4h-1.4zM139.6 216.4h0.9v3.4h-0.9zM139.3 216.9h1.4v2.0h-1.4zM152.1 219.3h0.9v2.9h-0.9zM151.8 219.6h1.4v1.3h-1.4zM163.1 227.1h0.9v2.0h-0.9zM162.8 227.5h1.4v1.3h-1.4zM164.6 226.9h0.9v1.9h-0.9zM164.3 227.4h1.4v1.3h-1.4zM168.4 225.8h0.9v3.1h-0.9zM168.1 226.9h1.4v1.3h-1.4zM173.0 226.9h0.9v2.4h-0.9zM172.7 227.8h1.4v1.3h-1.4zM174.6 227.4h0.9v2.4h-0.9zM174.3 228.5h1.4v1.3h-1.4zM177.1 228.3h0.9v3.0h-0.9zM176.8 228.3h1.4v1.3h-1.4zM178.8 227.5h0.9v1.7h-0.9zM178.5 227.5h1.4v1.3h-1.4zM184.6 225.4h0.9v3.8h-0.9zM184.3 226.3h1.4v1.3h-1.4zM185.4 224.4h0.9v3.3h-0.9zM185.1 225.8h1.4v1.3h-1.4zM192.9 224.3h0.9v2.9h-0.9zM192.6 225.5h1.4v1.3h-1.4zM194.6 224.2h0.9v2.6h-0.9zM194.3 224.6h1.4v1.3h-1.4zM196.3 221.1h0.9v3.6h-0.9zM196.0 222.6h1.4v1.3h-1.4zM212.4 226.9h0.9v1.5h-0.9zM212.1 227.1h1.4v1.3h-1.4zM221.8 233.8h0.9v2.5h-0.9zM221.6 233.9h1.4v1.3h-1.4zM224.3 231.2h0.9v3.4h-0.9zM224.0 232.6h1.4v1.7h-1.4zM225.1 230.7h0.9v2.6h-0.9zM224.8 231.9h1.4v1.3h-1.4zM229.2 226.6h0.9v3.7h-0.9zM228.9 228.5h1.4v1.3h-1.4zM237.9 223.6h0.9v3.1h-0.9zM237.6 225.3h1.4v1.3h-1.4zM238.8 223.6h0.9v1.9h-0.9zM238.5 224.0h1.4v1.3h-1.4zM246.3 224.0h0.9v2.5h-0.9zM246.0 224.0h1.4v1.3h-1.4zM247.1 222.6h0.9v2.2h-0.9zM246.8 223.3h1.4v1.3h-1.4zM249.6 219.3h0.9v3.4h-0.9zM249.3 220.7h1.4v1.3h-1.4zM252.7 221.6h0.9v3.4h-0.9zM252.4 223.4h1.4v1.3h-1.4zM257.4 225.9h0.9v2.3h-0.9zM257.1 226.4h1.4v1.3h-1.4zM262.2 226.5h0.9v2.1h-0.9zM261.9 226.9h1.4v1.3h-1.4zM263.0 225.8h0.9v2.5h-0.9zM262.7 226.9h1.4v1.3h-1.4zM263.8 226.0h0.9v1.8h-0.9zM263.5 226.4h1.4v1.3h-1.4zM264.6 224.2h0.9v3.2h-0.9zM264.3 225.8h1.4v1.3h-1.4zM269.3 226.6h0.9v1.6h-0.9zM269.0 226.9h1.4v1.3h-1.4zM294.9 234.3h0.9v2.3h-0.9zM294.6 235.2h1.4v1.3h-1.4zM295.6 234.0h0.9v2.6h-0.9zM295.3 235.3h1.4v1.3h-1.4zM299.4 239.6h0.9v4.4h-0.9zM299.1 240.4h1.4v1.6h-1.4zM302.4 244.4h0.9v2.8h-0.9zM302.1 244.4h1.4v1.4h-1.4zM310.1 266.6h0.9v2.3h-0.9zM309.8 266.7h1.4v2.1h-1.4zM310.9 264.5h0.9v2.3h-0.9zM310.6 265.4h1.4v1.3h-1.4zM312.4 262.1h0.9v4.5h-0.9zM312.1 263.9h1.4v1.3h-1.4zM313.1 260.1h0.9v5.3h-0.9zM312.8 261.7h1.4v2.2h-1.4zM319.6 256.8h0.9v5.6h-0.9zM319.3 257.4h1.4v3.6h-1.4zM333.4 290.1h0.9v3.9h-0.9zM333.1 291.1h1.4v1.3h-1.4zM334.1 292.3h0.9v3.6h-0.9zM333.8 292.3h1.4v2.1h-1.4zM340.6 335.8h0.9v6.9h-0.9zM340.3 337.6h1.4v4.2h-1.4zM341.6 333.4h0.9v4.6h-0.9zM341.3 333.6h1.4v4.0h-1.4zM346.4 308.4h0.9v2.9h-0.9zM346.1 309.5h1.4v1.3h-1.4zM349.6 308.8h0.9v1.7h-0.9zM349.3 309.0h1.4v1.3h-1.4zM350.4 308.4h0.9v3.1h-0.9zM350.1 309.0h1.4v1.3h-1.4zM354.6 311.6h0.9v3.9h-0.9zM354.3 313.0h1.4v1.3h-1.4zM355.4 311.5h0.9v2.8h-0.9zM355.1 312.6h1.4v1.3h-1.4zM361.4 316.7h0.9v4.2h-0.9zM361.1 317.7h1.4v1.8h-1.4zM363.0 314.8h0.9v3.7h-0.9zM362.7 315.7h1.4v1.5h-1.4zM363.8 313.9h0.9v1.9h-0.9zM363.5 314.3h1.4v1.4h-1.4zM366.3 311.4h0.9v2.3h-0.9zM366.0 312.1h1.4v1.3h-1.4zM369.6 308.9h0.9v3.2h-0.9zM369.3 310.6h1.4v1.5h-1.4zM370.6 305.0h0.9v7.3h-0.9zM370.3 305.0h1.4v5.6h-1.4zM371.6 298.2h0.9v7.3h-0.9zM371.3 298.3h1.4v6.7h-1.4zM372.4 295.9h0.9v3.2h-0.9zM372.1 296.2h1.4v2.1h-1.4zM373.2 294.1h0.9v3.4h-0.9zM372.9 294.9h1.4v1.3h-1.4zM374.0 292.3h0.9v4.4h-0.9zM373.7 294.0h1.4v1.3h-1.4zM374.8 292.2h0.9v1.9h-0.9zM374.5 292.6h1.4v1.4h-1.4zM375.6 291.7h0.9v3.1h-0.9zM375.3 291.8h1.4v1.3h-1.4zM377.2 292.4h0.9v2.4h-0.9zM376.9 292.8h1.4v1.3h-1.4zM380.4 294.9h0.9v2.3h-0.9zM380.1 295.0h1.4v1.3h-1.4zM382.0 296.1h0.9v2.2h-0.9zM381.7 296.5h1.4v1.3h-1.4zM385.2 300.5h0.9v2.7h-0.9zM384.9 300.6h1.4v1.3h-1.4zM391.2 311.9h0.9v3.6h-0.9zM390.9 311.9h1.4v1.8h-1.4zM392.0 308.2h0.9v4.0h-0.9zM391.7 309.6h1.4v2.3h-1.4zM395.6 298.9h0.9v3.8h-0.9zM395.3 300.7h1.4v2.0h-1.4zM401.2 310.5h0.9v2.6h-0.9zM400.9 310.7h1.4v2.4h-1.4zM402.8 314.5h0.9v4.0h-0.9zM402.5 315.1h1.4v1.7h-1.4zM405.9 322.6h0.9v1.6h-0.9zM405.6 322.7h1.4v1.3h-1.4zM406.6 322.5h0.9v3.6h-0.9zM406.3 323.8h1.4v1.3h-1.4zM415.2 329.3h0.9v2.0h-0.9zM414.9 329.8h1.4v1.3h-1.4zM417.6 324.9h0.9v3.1h-0.9zM417.3 326.1h1.4v1.9h-1.4zM418.6 324.3h0.9v3.6h-0.9zM418.3 324.9h1.4v1.3h-1.4zM419.6 323.6h0.9v2.3h-0.9zM419.3 323.7h1.4v1.3h-1.4zM426.0 335.0h0.9v2.3h-0.9zM425.7 335.7h1.4v1.3h-1.4zM432.4 342.2h0.9v3.1h-0.9zM432.1 343.4h1.4v1.3h-1.4zM433.2 341.9h0.9v1.9h-0.9zM432.9 342.1h1.4v1.3h-1.4zM434.0 341.1h0.9v2.5h-0.9zM433.7 341.1h1.4v1.3h-1.4zM434.8 339.5h0.9v1.8h-0.9zM434.5 339.8h1.4v1.4h-1.4zM435.6 338.9h0.9v1.9h-0.9zM435.3 339.2h1.4v1.3h-1.4zM436.4 337.9h0.9v3.1h-0.9zM436.1 338.3h1.4v1.3h-1.4zM438.0 337.3h0.9v1.7h-0.9zM437.7 337.4h1.4v1.3h-1.4zM438.8 336.5h0.9v2.7h-0.9zM438.5 337.4h1.4v1.3h-1.4zM452.4 347.7h0.9v2.1h-0.9zM452.1 347.8h1.4v1.6h-1.4zM453.1 346.4h0.9v3.2h-0.9zM452.8 346.9h1.4v1.3h-1.4zM453.9 343.2h0.9v5.3h-0.9zM453.6 345.0h1.4v1.9h-1.4zM454.6 343.9h0.9v3.5h-0.9zM454.3 344.6h1.4v1.3h-1.4zM455.4 343.5h0.9v1.6h-0.9zM455.1 343.7h1.4v1.3h-1.4zM457.1 339.9h0.9v4.8h-0.9zM456.8 341.3h1.4v2.0h-1.4zM458.8 339.7h0.9v1.8h-0.9zM458.5 340.1h1.4v1.3h-1.4zM459.6 338.0h0.9v3.1h-0.9zM459.3 339.4h1.4v1.3h-1.4zM464.2 339.5h0.9v2.6h-0.9zM463.9 340.3h1.4v1.3h-1.4zM465.0 337.6h0.9v3.1h-0.9zM464.7 339.4h1.4v1.3h-1.4zM465.8 336.3h0.9v4.2h-0.9zM465.5 337.7h1.4v1.6h-1.4zM468.9 328.4h0.9v5.2h-0.9zM468.6 329.2h1.4v2.7h-1.4zM473.4 338.1h0.9v3.5h-0.9zM473.1 338.7h1.4v1.3h-1.4zM478.1 336.6h0.9v5.9h-0.9zM477.8 338.5h1.4v2.2h-1.4zM478.9 336.9h0.9v2.0h-0.9zM478.6 337.0h1.4v1.6h-1.4zM480.4 333.9h0.9v3.3h-0.9zM480.1 334.1h1.4v2.9h-1.4zM485.6 332.2h0.9v7.8h-0.9zM485.3 333.8h1.4v4.6h-1.4zM491.6 328.2h0.9v4.1h-0.9zM491.3 328.2h1.4v3.6h-1.4zM496.6 323.7h0.9v2.6h-0.9zM496.3 324.2h1.4v1.3h-1.4zM509.3 333.1h0.9v2.5h-0.9zM509.0 333.1h1.4v1.3h-1.4zM510.9 330.0h0.9v2.3h-0.9zM510.6 330.3h1.4v1.3h-1.4zM514.1 323.3h0.9v4.2h-0.9zM513.8 325.0h1.4v2.3h-1.4zM514.9 324.0h0.9v2.3h-0.9zM514.5 324.1h1.4v1.3h-1.4zM517.2 322.4h0.9v4.3h-0.9zM516.9 324.4h1.4v1.6h-1.4zM522.6 331.2h0.9v2.4h-0.9zM522.3 332.3h1.4v1.3h-1.4zM526.4 332.9h0.9v2.7h-0.9zM526.1 334.2h1.4v1.3h-1.4zM532.9 324.3h0.9v3.3h-0.9zM532.6 325.2h1.4v2.0h-1.4zM533.8 324.0h0.9v1.7h-0.9zM533.5 324.0h1.4v1.3h-1.4zM536.3 323.5h0.9v4.1h-0.9zM536.0 324.9h1.4v1.3h-1.4zM537.9 324.5h0.9v2.3h-0.9zM537.6 325.2h1.4v1.3h-1.4zM546.3 329.2h0.9v2.2h-0.9zM546.0 329.5h1.4v1.3h-1.4zM552.6 330.3h0.9v1.7h-0.9zM552.3 330.5h1.4v1.3h-1.4zM562.9 317.9h0.9v2.1h-0.9zM562.5 317.9h1.4v1.8h-1.4zM570.4 314.7h0.9v2.0h-0.9zM570.1 314.9h1.4v1.3h-1.4zM571.2 314.2h0.9v1.7h-0.9zM570.9 314.3h1.4v1.3h-1.4zM575.8 314.4h0.9v2.7h-0.9zM575.5 314.4h1.4v1.3h-1.4zM579.9 314.0h0.9v2.9h-0.9zM579.6 314.3h1.4v1.3h-1.4zM581.6 312.4h0.9v3.0h-0.9zM581.3 313.8h1.4v1.3h-1.4zM593.1 322.7h0.9v1.7h-0.9zM592.8 323.1h1.4v1.3h-1.4zM594.6 321.2h0.9v3.5h-0.9zM594.3 323.0h1.4v1.3h-1.4zM595.4 321.9h0.9v2.3h-0.9zM595.0 322.2h1.4v1.3h-1.4zM596.9 321.3h0.9v3.2h-0.9zM596.5 321.9h1.4v1.3h-1.4zM602.9 321.3h0.9v4.1h-0.9zM602.5 323.2h1.4v1.3h-1.4zM604.4 322.4h0.9v2.8h-0.9zM604.1 323.3h1.4v1.3h-1.4zM606.1 321.1h0.9v4.9h-0.9zM605.8 322.9h1.4v1.3h-1.4zM618.6 341.8h0.9v4.2h-0.9zM618.3 342.8h1.4v1.7h-1.4zM619.4 337.8h0.9v5.3h-0.9zM619.0 339.7h1.4v3.1h-1.4zM620.9 335.0h0.9v2.3h-0.9zM620.5 335.9h1.4v1.4h-1.4zM621.6 332.3h0.9v4.4h-0.9zM621.3 333.6h1.4v2.3h-1.4zM622.4 330.6h0.9v3.1h-0.9zM622.0 331.6h1.4v2.0h-1.4zM623.1 328.6h0.9v3.9h-0.9zM622.8 330.0h1.4v1.7h-1.4zM628.4 341.4h0.9v2.3h-0.9zM628.0 342.2h1.4v1.3h-1.4zM630.6 340.4h0.9v3.2h-0.9zM630.3 340.4h1.4v1.6h-1.4zM635.4 352.3h0.9v3.8h-0.9zM635.0 354.1h1.4v1.3h-1.4zM636.1 352.7h0.9v2.4h-0.9zM635.8 352.9h1.4v1.3h-1.4zM637.6 350.6h0.9v3.4h-0.9zM637.3 351.8h1.4v1.3h-1.4zM640.6 355.5h0.9v3.8h-0.9zM640.3 356.6h1.4v1.3h-1.4zM641.6 349.7h0.9v8.5h-0.9zM641.3 351.1h1.4v6.7h-1.4zM642.6 343.9h0.9v7.3h-0.9zM642.3 345.0h1.4v6.1h-1.4zM650.4 354.4h0.9v3.1h-0.9zM650.0 355.5h1.4v2.0h-1.4zM651.9 351.7h0.9v3.8h-0.9zM651.5 352.4h1.4v1.5h-1.4zM652.6 350.5h0.9v3.4h-0.9zM652.3 351.7h1.4v1.3h-1.4zM655.8 349.8h0.9v1.7h-0.9zM655.5 349.8h1.4v1.3h-1.4zM665.9 364.9h0.9v2.9h-0.9zM665.5 366.5h1.4v1.3h-1.4zM667.6 363.4h0.9v7.6h-0.9zM667.3 365.0h1.4v4.3h-1.4zM668.6 358.9h0.9v7.2h-0.9zM668.3 360.2h1.4v4.8h-1.4zM670.2 356.8h0.9v3.4h-0.9zM669.9 358.7h1.4v1.3h-1.4zM673.4 355.4h0.9v3.4h-0.9zM673.0 356.4h1.4v1.3h-1.4zM674.1 354.2h0.9v3.7h-0.9zM673.8 354.6h1.4v1.7h-1.4zM675.6 352.3h0.9v3.7h-0.9zM675.3 352.4h1.4v1.8h-1.4zM676.6 345.9h0.9v7.2h-0.9zM676.3 347.5h1.4v4.9h-1.4zM677.6 342.5h0.9v6.9h-0.9zM677.3 343.1h1.4v4.4h-1.4zM678.6 337.8h0.9v5.4h-0.9zM678.3 338.5h1.4v4.6h-1.4zM679.6 332.3h0.9v6.7h-0.9zM679.3 333.7h1.4v4.7h-1.4zM680.4 333.6h0.9v3.1h-0.9zM680.1 333.7h1.4v1.3h-1.4zM688.1 348.9h0.9v1.9h-0.9zM687.8 349.0h1.4v1.6h-1.4zM689.6 347.5h0.9v2.5h-0.9zM689.3 347.7h1.4v1.3h-1.4zM690.4 344.5h0.9v4.3h-0.9zM690.1 345.9h1.4v1.7h-1.4zM691.3 342.7h0.9v3.7h-0.9zM691.0 343.8h1.4v2.1h-1.4zM692.1 339.3h0.9v4.9h-0.9zM691.8 341.2h1.4v2.6h-1.4zM692.9 338.3h0.9v4.4h-0.9zM692.6 339.7h1.4v1.5h-1.4zM693.8 336.8h0.9v3.1h-0.9zM693.5 337.6h1.4v2.1h-1.4zM694.6 334.1h0.9v4.2h-0.9zM694.3 335.2h1.4v2.4h-1.4zM695.4 333.6h0.9v6.0h-0.9zM695.0 335.2h1.4v2.6h-1.4zM698.4 335.6h0.9v8.5h-0.9zM698.0 336.5h1.4v6.1h-1.4zM699.1 330.8h0.9v7.2h-0.9zM698.8 331.1h1.4v5.4h-1.4zM699.9 324.8h0.9v6.7h-0.9zM699.5 325.6h1.4v5.5h-1.4zM700.6 319.2h0.9v7.8h-0.9zM700.3 320.0h1.4v5.6h-1.4zM701.4 318.1h0.9v3.3h-0.9zM701.0 318.4h1.4v1.5h-1.4zM702.1 316.9h0.9v1.5h-0.9zM701.8 317.0h1.4v1.5h-1.4zM702.9 316.2h0.9v2.0h-0.9zM702.5 316.3h1.4v1.3h-1.4zM703.6 314.8h0.9v2.7h-0.9zM703.3 315.6h1.4v1.3h-1.4zM704.4 312.1h0.9v4.4h-0.9zM704.1 313.7h1.4v1.9h-1.4zM705.2 311.5h0.9v4.0h-0.9zM704.9 311.6h1.4v2.1h-1.4zM706.0 309.6h0.9v3.0h-0.9zM705.7 310.5h1.4v1.3h-1.4zM706.8 306.9h0.9v3.8h-0.9zM706.5 308.1h1.4v2.4h-1.4zM707.6 306.6h0.9v1.7h-0.9zM707.3 306.6h1.4v1.5h-1.4zM708.4 303.9h0.9v4.3h-0.9zM708.1 305.9h1.4v1.3h-1.4zM709.2 303.0h0.9v3.8h-0.9zM708.9 304.8h1.4v1.3h-1.4zM710.8 302.6h0.9v2.7h-0.9zM710.5 302.6h1.4v1.8h-1.4zM711.6 301.1h0.9v2.7h-0.9zM711.3 301.2h1.4v1.4h-1.4zM712.4 298.8h0.9v3.5h-0.9zM712.1 300.6h1.4v1.3h-1.4zM713.2 298.3h0.9v4.5h-0.9zM712.9 300.0h1.4v1.3h-1.4zM714.0 299.1h0.9v3.3h-0.9zM713.7 299.4h1.4v1.3h-1.4zM717.2 294.8h0.9v1.9h-0.9zM716.9 294.8h1.4v1.3h-1.4zM718.8 289.1h0.9v4.3h-0.9zM718.5 290.4h1.4v1.9h-1.4zM719.6 288.2h0.9v4.0h-0.9zM719.3 289.0h1.4v1.4h-1.4zM725.8 290.5h0.9v2.2h-0.9zM725.5 290.7h1.4v1.3h-1.4zM738.6 308.4h0.9v6.7h-0.9zM738.3 308.6h1.4v6.5h-1.4zM739.6 302.4h0.9v6.2h-0.9zM739.3 303.7h1.4v4.9h-1.4zM740.6 301.7h0.9v2.6h-0.9zM740.3 301.8h1.4v1.9h-1.4zM751.6 323.9h0.9v5.1h-0.9zM751.3 325.5h1.4v3.0h-1.4zM756.6 360.0h0.9v7.9h-0.9zM756.3 361.1h1.4v5.1h-1.4zM757.6 354.3h0.9v7.1h-0.9zM757.3 355.8h1.4v5.3h-1.4zM758.6 352.1h0.9v5.4h-0.9zM758.3 352.7h1.4v3.1h-1.4zM759.6 347.8h0.9v5.8h-0.9zM759.3 349.7h1.4v3.1h-1.4zM760.6 345.9h0.9v4.5h-0.9zM760.3 346.4h1.4v3.3h-1.4zM761.6 342.5h0.9v5.4h-0.9zM761.3 342.8h1.4v3.6h-1.4zM762.6 338.3h0.9v5.2h-0.9zM762.3 339.4h1.4v3.4h-1.4zM763.6 335.4h0.9v4.6h-0.9zM763.3 335.4h1.4v4.0h-1.4zM766.4 339.8h0.9v3.6h-0.9zM766.0 340.0h1.4v1.6h-1.4zM768.6 343.6h0.9v3.4h-0.9zM768.3 343.8h1.4v1.3h-1.4zM777.8 357.4h0.9v3.2h-0.9zM777.5 358.6h1.4v1.3h-1.4zM783.4 364.3h0.9v3.7h-0.9zM783.1 366.3h1.4v1.4h-1.4zM794.1 379.1h0.9v2.8h-0.9zM793.8 380.3h1.4v1.4h-1.4zM801.6 379.4h0.9v1.7h-0.9zM801.3 379.8h1.4v1.3h-1.4zM804.6 382.7h0.9v2.3h-0.9zM804.3 383.0h1.4v1.7h-1.4zM808.4 386.6h0.9v2.5h-0.9zM808.1 386.6h1.4v1.7h-1.4zM809.2 385.0h0.9v3.3h-0.9zM808.9 385.2h1.4v1.4h-1.4zM810.8 382.6h0.9v2.8h-0.9zM810.5 384.0h1.4v1.3h-1.4zM812.4 381.7h0.9v3.2h-0.9zM812.1 382.9h1.4v1.3h-1.4zM814.1 383.2h0.9v2.6h-0.9zM813.8 383.3h1.4v1.3h-1.4zM814.9 381.9h0.9v2.9h-0.9zM814.6 382.2h1.4v1.4h-1.4zM817.4 380.8h0.9v3.1h-0.9zM817.0 381.5h1.4v1.3h-1.4zM818.1 380.0h0.9v3.4h-0.9zM817.8 380.7h1.4v1.3h-1.4zM818.9 378.2h0.9v3.1h-0.9zM818.5 379.0h1.4v1.7h-1.4zM819.6 377.0h0.9v2.3h-0.9zM819.3 377.2h1.4v1.8h-1.4zM821.1 373.5h0.9v4.4h-0.9zM820.8 374.8h1.4v1.8h-1.4zM821.9 371.9h0.9v4.1h-0.9zM821.5 373.8h1.4v1.3h-1.4zM822.6 373.2h0.9v2.2h-0.9zM822.3 373.2h1.4v1.3h-1.4zM824.9 370.4h0.9v1.5h-0.9zM824.5 370.6h1.4v1.3h-1.4zM831.2 366.0h0.9v4.0h-0.9zM830.9 366.8h1.4v1.3h-1.4zM834.4 367.6h0.9v1.9h-0.9zM834.1 368.1h1.4v1.3h-1.4zM840.9 369.0h0.9v2.4h-0.9zM840.6 369.2h1.4v1.3h-1.4zM843.4 369.5h0.9v3.8h-0.9zM843.1 370.5h1.4v1.3h-1.4zM845.9 370.6h0.9v3.4h-0.9zM845.6 371.6h1.4v1.3h-1.4zM847.6 370.1h0.9v3.0h-0.9zM847.3 371.2h1.4v1.3h-1.4zM851.6 376.6h0.9v2.3h-0.9zM851.3 376.6h1.4v1.3h-1.4zM852.4 375.7h0.9v4.0h-0.9zM852.1 376.5h1.4v1.3h-1.4zM854.8 374.5h0.9v4.0h-0.9zM854.5 376.2h1.4v1.3h-1.4zM856.4 373.1h0.9v3.7h-0.9zM856.1 375.0h1.4v1.3h-1.4zM857.2 374.3h0.9v2.3h-0.9zM856.9 374.3h1.4v1.3h-1.4zM858.8 372.4h0.9v2.9h-0.9zM858.5 373.3h1.4v1.3h-1.4zM860.4 370.8h0.9v4.3h-0.9zM860.1 372.4h1.4v1.3h-1.4zM862.0 370.6h0.9v1.5h-0.9zM861.7 370.8h1.4v1.3h-1.4zM864.4 366.8h0.9v2.9h-0.9zM864.1 368.4h1.4v1.3h-1.4zM866.8 363.6h0.9v3.3h-0.9zM866.5 365.4h1.4v1.5h-1.4zM874.3 357.0h0.9v3.4h-0.9zM874.0 357.8h1.4v1.3h-1.4zM888.1 358.9h0.9v2.3h-0.9zM887.8 358.9h1.4v1.3h-1.4zM888.9 356.8h0.9v2.9h-0.9zM888.5 358.4h1.4v1.3h-1.4zM890.4 354.6h0.9v2.1h-0.9zM890.0 355.4h1.4v1.3h-1.4zM892.6 349.3h0.9v3.1h-0.9zM892.3 350.8h1.4v1.3h-1.4zM894.3 348.9h0.9v2.9h-0.9zM894.0 349.6h1.4v1.3h-1.4zM895.9 347.0h0.9v4.1h-0.9zM895.6 348.1h1.4v1.3h-1.4zM896.8 345.3h0.9v3.1h-0.9zM896.5 346.8h1.4v1.3h-1.4zM904.8 347.8h0.9v4.4h-0.9zM904.5 349.2h1.4v1.3h-1.4zM920.7 350.7h0.9v2.2h-0.9zM920.4 351.3h1.4v1.3h-1.4zM923.0 351.4h0.9v2.5h-0.9zM922.7 352.1h1.4v1.3h-1.4zM923.8 352.4h0.9v3.3h-0.9zM923.5 352.4h1.4v1.3h-1.4zM930.8 354.3h0.9v4.5h-0.9zM930.5 356.3h1.4v1.3h-1.4zM938.8 357.0h0.9v3.4h-0.9zM938.5 358.6h1.4v1.3h-1.4zM944.6 355.5h0.9v2.9h-0.9zM944.3 356.1h1.4v1.3h-1.4zM967.6 368.7h0.9v3.2h-0.9zM967.3 370.1h1.4v1.3h-1.4z"/>
<path fill="#2a8cf0" d="M6.4 227.3h0.9v2.6h-0.9zM6.1 227.4h1.4v2.0h-1.4zM8.0 230.7h0.9v2.9h-0.9zM7.7 230.7h1.4v1.5h-1.4zM8.8 231.0h0.9v3.0h-0.9zM8.5 232.2h1.4v1.3h-1.4zM47.2 227.6h0.9v3.6h-0.9zM46.9 228.5h1.4v1.3h-1.4zM59.4 224.4h0.9v3.6h-0.9zM59.0 225.7h1.4v1.3h-1.4zM61.6 223.1h0.9v2.5h-0.9zM61.3 223.2h1.4v1.3h-1.4zM65.6 224.4h0.9v3.1h-0.9zM65.3 224.5h1.4v1.3h-1.4zM66.4 224.4h0.9v2.3h-0.9zM66.1 224.5h1.4v1.3h-1.4zM70.3 219.0h0.9v2.9h-0.9zM70.0 220.1h1.4v1.3h-1.4zM74.3 215.5h0.9v5.0h-0.9zM74.0 217.3h1.4v1.3h-1.4zM75.1 218.4h0.9v1.9h-0.9zM74.8 218.4h1.4v1.3h-1.4zM83.8 217.8h0.9v4.2h-0.9zM83.5 219.7h1.4v1.3h-1.4zM96.1 217.3h0.9v1.7h-0.9zM95.8 217.5h1.4v1.3h-1.4zM97.6 216.9h0.9v1.5h-0.9zM97.3 217.0h1.4v1.3h-1.4zM100.1 216.9h0.9v3.3h-0.9zM99.8 218.0h1.4v1.7h-1.4zM107.6 221.5h0.9v2.1h-0.9zM107.3 221.5h1.4v1.3h-1.4zM110.9 225.6h0.9v2.3h-0.9zM110.6 225.7h1.4v1.5h-1.4zM114.2 226.3h0.9v4.0h-0.9zM113.9 228.2h1.4v1.5h-1.4zM115.8 230.3h0.9v3.9h-0.9zM115.5 230.4h1.4v2.2h-1.4zM119.1 231.8h0.9v4.2h-0.9zM118.8 232.8h1.4v1.3h-1.4zM133.8 223.2h0.9v2.0h-0.9zM133.5 223.7h1.4v1.3h-1.4zM134.6 222.6h0.9v4.4h-0.9zM134.3 224.2h1.4v1.3h-1.4zM145.4 215.0h0.9v2.4h-0.9zM145.1 215.2h1.4v1.3h-1.4zM147.9 215.3h0.9v1.6h-0.9zM147.6 215.4h1.4v1.3h-1.4zM152.9 219.2h0.9v2.0h-0.9zM152.6 219.7h1.4v1.3h-1.4zM158.5 223.1h0.9v3.2h-0.9zM158.2 224.2h1.4v1.3h-1.4zM182.1 225.0h0.9v4.9h-0.9zM181.8 226.6h1.4v1.3h-1.4zM202.1 222.5h0.9v3.5h-0.9zM201.8 223.2h1.4v1.3h-1.4zM203.8 222.2h0.9v3.0h-0.9zM203.5 223.6h1.4v1.3h-1.4zM206.9 225.8h0.9v1.6h-0.9zM206.6 225.8h1.4v1.3h-1.4zM210.8 226.0h0.9v1.5h-0.9zM210.5 226.2h1.4v1.3h-1.4zM215.6 228.7h0.9v3.2h-0.9zM215.3 229.3h1.4v1.3h-1.4zM222.6 233.5h0.9v2.2h-0.9zM222.3 234.1h1.4v1.3h-1.4zM251.2 220.5h0.9v2.3h-0.9zM250.9 221.0h1.4v1.3h-1.4zM253.5 222.7h0.9v4.3h-0.9zM253.2 224.7h1.4v1.3h-1.4zM254.3 223.9h0.9v3.0h-0.9zM254.0 225.5h1.4v1.3h-1.4zM261.4 226.2h0.9v4.4h-0.9zM261.1 227.7h1.4v1.3h-1.4zM277.2 228.2h0.9v4.2h-0.9zM276.9 229.3h1.4v1.3h-1.4zM281.3 230.2h0.9v3.3h-0.9zM281.0 230.8h1.4v1.3h-1.4zM291.1 228.8h0.9v4.7h-0.9zM290.8 230.7h1.4v1.3h-1.4zM291.9 231.1h0.9v2.0h-0.9zM291.6 231.6h1.4v1.3h-1.4zM296.4 234.7h0.9v4.9h-0.9zM296.1 236.5h1.4v1.6h-1.4zM300.9 241.2h0.9v3.5h-0.9zM300.6 241.8h1.4v1.8h-1.4zM301.6 241.9h0.9v3.1h-0.9zM301.3 243.7h1.4v1.3h-1.4zM303.1 244.4h0.9v2.9h-0.9zM302.8 245.8h1.4v1.3h-1.4zM303.9 245.6h0.9v3.9h-0.9zM303.6 246.8h1.4v2.0h-1.4zM304.6 247.9h0.9v5.0h-0.9zM304.3 248.8h1.4v2.3h-1.4zM305.6 250.8h0.9v5.8h-0.9zM305.3 251.1h1.4v4.9h-1.4zM306.6 254.5h0.9v5.5h-0.9zM306.3 255.9h1.4v4.0h-1.4zM307.6 258.1h0.9v6.7h-0.9zM307.3 259.9h1.4v4.9h-1.4zM308.6 263.1h0.9v6.3h-0.9zM308.3 264.9h1.4v4.4h-1.4zM314.6 258.5h0.9v3.2h-0.9zM314.3 258.8h1.4v1.3h-1.4zM315.4 257.7h0.9v4.1h-0.9zM315.1 258.8h1.4v1.9h-1.4zM316.1 260.4h0.9v2.0h-0.9zM315.8 260.7h1.4v1.5h-1.4zM316.9 260.6h0.9v4.5h-0.9zM316.6 262.2h1.4v1.3h-1.4zM320.4 257.0h0.9v3.3h-0.9zM320.1 257.4h1.4v1.3h-1.4zM321.2 257.3h0.9v2.7h-0.9zM320.9 258.6h1.4v1.4h-1.4zM322.0 259.7h0.9v3.7h-0.9zM321.7 259.9h1.4v2.4h-1.4zM322.8 261.7h0.9v3.1h-0.9zM322.5 262.3h1.4v2.5h-1.4zM323.6 263.4h0.9v3.9h-0.9zM323.3 264.8h1.4v1.3h-1.4zM324.4 264.8h0.9v3.0h-0.9zM324.1 266.0h1.4v1.7h-1.4zM325.1 267.4h0.9v2.9h-0.9zM324.8 267.7h1.4v1.3h-1.4zM325.9 268.2h0.9v3.2h-0.9zM325.6 268.5h1.4v1.3h-1.4zM326.6 268.8h0.9v3.8h-0.9zM326.3 269.2h1.4v1.6h-1.4zM327.4 270.0h0.9v5.6h-0.9zM327.1 270.9h1.4v3.2h-1.4zM328.1 274.0h0.9v2.5h-0.9zM327.8 274.1h1.4v1.7h-1.4zM328.9 275.2h0.9v5.4h-0.9zM328.6 275.8h1.4v2.9h-1.4zM329.6 277.1h0.9v5.4h-0.9zM329.3 278.6h1.4v2.2h-1.4zM330.4 279.8h0.9v4.4h-0.9zM330.1 280.9h1.4v2.1h-1.4zM331.1 282.7h0.9v4.3h-0.9zM330.8 283.0h1.4v3.2h-1.4zM331.9 285.5h0.9v4.2h-0.9zM331.6 286.2h1.4v1.8h-1.4zM332.6 287.3h0.9v5.6h-0.9zM332.3 288.0h1.4v3.1h-1.4zM334.9 292.9h0.9v4.5h-0.9zM334.6 294.4h1.4v2.8h-1.4zM335.6 296.6h0.9v3.1h-0.9zM335.3 297.2h1.4v2.4h-1.4zM337.6 301.3h0.9v2.7h-0.9zM337.3 301.9h1.4v1.3h-1.4zM337.6 302.1h0.9v30.1h-0.9zM337.3 303.1h1.4v28.6h-1.4zM338.6 331.0h0.9v6.2h-0.9zM338.3 331.7h1.4v4.6h-1.4zM339.6 335.7h0.9v6.4h-0.9zM339.3 336.3h1.4v5.5h-1.4zM342.4 331.7h0.9v9.5h-0.9zM342.1 333.6h1.4v6.7h-1.4zM343.1 340.2h0.9v6.8h-0.9zM342.8 340.3h1.4v6.2h-1.4zM343.9 346.3h0.9v9.0h-0.9zM343.6 346.6h1.4v7.4h-1.4zM344.6 353.2h0.9v7.3h-0.9zM344.3 354.0h1.4v6.5h-1.4zM352.1 310.0h0.9v3.4h-0.9zM351.8 310.2h1.4v1.3h-1.4zM352.9 310.1h0.9v2.4h-0.9zM352.6 311.1h1.4v1.3h-1.4zM353.8 310.9h0.9v2.8h-0.9zM353.5 312.4h1.4v1.3h-1.4zM357.0 311.3h0.9v3.7h-0.9zM356.7 311.8h1.4v1.3h-1.4zM357.8 309.8h0.9v2.8h-0.9zM357.5 309.8h1.4v2.0h-1.4zM359.6 307.5h0.9v8.1h-0.9zM359.3 308.8h1.4v6.1h-1.4zM360.6 314.7h0.9v5.4h-0.9zM360.3 314.9h1.4v4.6h-1.4zM367.1 311.8h0.9v2.9h-0.9zM366.8 312.1h1.4v1.3h-1.4zM376.4 290.6h0.9v2.7h-0.9zM376.1 291.8h1.4v1.3h-1.4zM378.0 292.2h0.9v2.8h-0.9zM377.7 293.2h1.4v1.3h-1.4zM378.8 292.7h0.9v2.5h-0.9zM378.5 293.9h1.4v1.3h-1.4zM381.2 294.8h0.9v3.0h-0.9zM380.9 295.0h1.4v1.5h-1.4zM382.8 295.1h0.9v5.0h-0.9zM382.5 297.0h1.4v1.4h-1.4zM386.0 300.3h0.9v3.8h-0.9zM385.7 301.4h1.4v2.2h-1.4zM386.8 301.8h0.9v4.3h-0.9zM386.5 303.6h1.4v2.0h-1.4zM387.6 304.2h0.9v3.8h-0.9zM387.3 305.6h1.4v2.0h-1.4zM388.6 307.0h0.9v4.1h-0.9zM388.3 307.6h1.4v3.4h-1.4zM389.6 310.5h0.9v6.5h-0.9zM389.3 311.0h1.4v4.0h-1.4zM390.4 313.7h0.9v2.5h-0.9zM390.1 313.7h1.4v1.3h-1.4zM392.8 306.6h0.9v3.0h-0.9zM392.5 306.9h1.4v2.7h-1.4zM393.6 303.5h0.9v3.6h-0.9zM393.3 304.7h1.4v2.1h-1.4zM394.6 301.6h0.9v4.0h-0.9zM394.3 302.7h1.4v2.0h-1.4zM396.4 298.7h0.9v3.6h-0.9zM396.1 300.7h1.4v1.6h-1.4zM398.0 303.9h0.9v2.2h-0.9zM397.7 304.6h1.4v1.4h-1.4zM399.6 306.9h0.9v2.1h-0.9zM399.3 307.1h1.4v1.3h-1.4zM400.4 306.4h0.9v5.1h-0.9zM400.1 308.0h1.4v2.7h-1.4zM402.0 313.0h0.9v2.7h-0.9zM401.7 313.1h1.4v2.1h-1.4zM403.6 315.6h0.9v4.8h-0.9zM403.3 316.9h1.4v3.1h-1.4zM404.4 319.2h0.9v3.1h-0.9zM404.1 320.0h1.4v1.4h-1.4zM405.1 321.0h0.9v3.2h-0.9zM404.8 321.4h1.4v1.3h-1.4zM407.4 322.9h0.9v4.0h-0.9zM407.1 323.8h1.4v1.5h-1.4zM408.1 324.3h0.9v2.9h-0.9zM407.8 325.2h1.4v1.3h-1.4zM408.9 326.1h0.9v1.9h-0.9zM408.6 326.2h1.4v1.3h-1.4zM412.0 327.9h0.9v2.0h-0.9zM411.7 328.3h1.4v1.3h-1.4zM412.8 327.5h0.9v3.4h-0.9zM412.5 329.3h1.4v1.3h-1.4zM413.6 329.3h0.9v3.0h-0.9zM413.3 329.4h1.4v1.3h-1.4zM416.0 327.5h0.9v3.0h-0.9zM415.7 329.1h1.4v1.3h-1.4zM416.8 326.8h0.9v3.1h-0.9zM416.5 328.0h1.4v1.3h-1.4zM420.4 321.9h0.9v4.9h-0.9zM420.1 323.7h1.4v1.9h-1.4zM421.2 325.2h0.9v2.9h-0.9zM420.9 325.6h1.4v1.6h-1.4zM422.0 325.8h0.9v3.9h-0.9zM421.7 327.2h1.4v2.3h-1.4zM422.8 327.7h0.9v6.7h-0.9zM422.5 329.5h1.4v3.0h-1.4zM423.6 332.4h0.9v2.7h-0.9zM423.3 332.5h1.4v2.1h-1.4zM424.4 334.2h0.9v1.7h-0.9zM424.1 334.6h1.4v1.3h-1.4zM426.8 335.5h0.9v2.8h-0.9zM426.5 336.9h1.4v1.3h-1.4zM428.4 337.9h0.9v1.9h-0.9zM428.1 338.1h1.4v1.3h-1.4zM430.8 339.0h0.9v4.6h-0.9zM430.5 340.9h1.4v1.9h-1.4zM431.6 342.5h0.9v1.7h-0.9zM431.3 342.8h1.4v1.3h-1.4zM439.6 335.5h0.9v3.0h-0.9zM439.3 336.8h1.4v1.3h-1.4zM440.4 336.2h0.9v3.1h-0.9zM440.1 336.5h1.4v1.3h-1.4zM442.8 335.8h0.9v2.9h-0.9zM442.5 336.9h1.4v1.5h-1.4zM444.4 338.0h0.9v2.7h-0.9zM444.1 338.2h1.4v2.0h-1.4zM445.2 340.1h0.9v3.5h-0.9zM444.9 340.2h1.4v2.4h-1.4zM446.0 342.5h0.9v3.4h-0.9zM445.7 342.6h1.4v1.7h-1.4zM446.8 344.1h0.9v2.3h-0.9zM446.5 344.3h1.4v1.3h-1.4zM447.6 343.8h0.9v4.7h-0.9zM447.3 345.1h1.4v1.8h-1.4zM448.4 345.3h0.9v2.8h-0.9zM448.1 346.8h1.4v1.3h-1.4zM451.6 348.4h0.9v1.8h-0.9zM451.3 348.8h1.4v1.3h-1.4zM461.1 339.2h0.9v3.4h-0.9zM460.8 339.7h1.4v1.3h-1.4zM461.9 339.8h0.9v2.1h-0.9zM461.6 340.3h1.4v1.4h-1.4zM463.4 341.2h0.9v3.3h-0.9zM463.1 341.2h1.4v1.9h-1.4zM471.1 329.3h0.9v5.3h-0.9zM470.8 329.6h1.4v3.7h-1.4zM471.9 331.7h0.9v5.4h-0.9zM471.6 333.3h1.4v2.7h-1.4zM475.0 338.0h0.9v5.0h-0.9zM474.7 339.9h1.4v2.0h-1.4zM476.6 342.2h0.9v2.2h-0.9zM476.3 342.5h1.4v1.3h-1.4zM482.0 336.6h0.9v3.2h-0.9zM481.7 337.7h1.4v1.3h-1.4zM483.6 340.6h0.9v3.6h-0.9zM483.3 341.2h1.4v2.3h-1.4zM486.4 333.6h0.9v1.7h-0.9zM486.1 333.8h1.4v1.3h-1.4zM492.4 327.8h0.9v1.6h-0.9zM492.1 328.1h1.4v1.3h-1.4zM494.9 324.0h0.9v3.2h-0.9zM494.6 325.7h1.4v1.3h-1.4zM497.4 324.1h0.9v3.1h-0.9zM497.1 324.2h1.4v1.3h-1.4zM498.3 324.6h0.9v1.5h-0.9zM498.0 324.7h1.4v1.3h-1.4zM499.1 323.9h0.9v5.7h-0.9zM498.8 325.3h1.4v2.4h-1.4zM499.9 327.0h0.9v4.5h-0.9zM499.6 327.7h1.4v1.8h-1.4zM506.9 332.9h0.9v3.1h-0.9zM506.6 334.6h1.4v1.3h-1.4zM516.4 322.4h0.9v2.2h-0.9zM516.1 322.9h1.4v1.5h-1.4zM518.8 326.2h0.9v5.1h-0.9zM518.5 327.3h1.4v2.0h-1.4zM519.6 328.3h0.9v4.1h-0.9zM519.3 329.4h1.4v1.5h-1.4zM524.9 331.7h0.9v3.4h-0.9zM524.5 333.3h1.4v1.3h-1.4zM531.3 326.3h0.9v4.4h-0.9zM531.0 328.0h1.4v1.4h-1.4zM547.1 329.2h0.9v3.2h-0.9zM546.8 329.5h1.4v1.3h-1.4zM550.4 327.6h0.9v2.7h-0.9zM550.0 327.8h1.4v1.3h-1.4zM551.1 328.3h0.9v2.6h-0.9zM550.8 329.1h1.4v1.3h-1.4zM555.6 333.4h0.9v1.7h-0.9zM555.3 333.5h1.4v1.4h-1.4zM564.4 314.9h0.9v2.1h-0.9zM564.0 315.0h1.4v1.3h-1.4zM567.4 312.4h0.9v3.0h-0.9zM567.0 314.1h1.4v1.3h-1.4zM571.9 312.8h0.9v4.2h-0.9zM571.6 314.3h1.4v1.3h-1.4zM574.3 313.8h0.9v2.4h-0.9zM574.0 314.0h1.4v1.3h-1.4zM578.3 313.0h0.9v3.4h-0.9zM578.0 314.3h1.4v1.3h-1.4zM579.1 312.6h0.9v4.5h-0.9zM578.8 314.5h1.4v1.3h-1.4zM584.9 318.6h0.9v2.0h-0.9zM584.6 318.7h1.4v1.3h-1.4zM593.9 323.2h0.9v2.6h-0.9zM593.5 323.2h1.4v1.3h-1.4zM600.6 322.0h0.9v3.7h-0.9zM600.3 322.9h1.4v1.3h-1.4zM602.1 321.6h0.9v3.2h-0.9zM601.8 322.9h1.4v1.3h-1.4zM603.6 323.8h0.9v1.7h-0.9zM603.3 323.9h1.4v1.3h-1.4zM606.9 322.4h0.9v2.4h-0.9zM606.6 322.9h1.4v1.3h-1.4zM608.6 320.6h0.9v3.6h-0.9zM608.3 322.3h1.4v1.3h-1.4zM609.4 321.6h0.9v4.2h-0.9zM609.0 322.3h1.4v2.1h-1.4zM610.1 322.5h0.9v4.4h-0.9zM609.8 324.4h1.4v2.5h-1.4zM610.9 325.6h0.9v5.2h-0.9zM610.5 326.9h1.4v3.3h-1.4zM611.6 328.6h0.9v5.5h-0.9zM611.3 330.3h1.4v3.6h-1.4zM612.4 333.8h0.9v2.2h-0.9zM612.1 333.9h1.4v1.7h-1.4zM613.2 334.4h0.9v4.9h-0.9zM612.9 335.6h1.4v3.7h-1.4zM614.0 339.2h0.9v3.4h-0.9zM613.7 339.3h1.4v2.5h-1.4zM614.8 340.3h0.9v5.1h-0.9zM614.5 341.8h1.4v2.5h-1.4zM615.6 344.2h0.9v2.3h-0.9zM615.3 344.2h1.4v2.0h-1.4zM616.4 343.9h0.9v4.8h-0.9zM616.0 345.8h1.4v1.3h-1.4zM620.1 337.2h0.9v3.9h-0.9zM619.8 337.3h1.4v2.4h-1.4zM623.9 328.0h0.9v2.4h-0.9zM623.5 328.9h1.4v1.3h-1.4zM625.4 327.1h0.9v5.1h-0.9zM625.0 328.1h1.4v4.0h-1.4zM626.1 331.4h0.9v5.7h-0.9zM625.8 332.1h1.4v3.9h-1.4zM626.9 335.6h0.9v4.1h-0.9zM626.5 335.9h1.4v2.8h-1.4zM627.6 337.8h0.9v5.8h-0.9zM627.3 338.8h1.4v4.5h-1.4zM629.9 340.2h0.9v3.3h-0.9zM629.5 342.0h1.4v1.3h-1.4zM631.4 339.8h0.9v5.1h-0.9zM631.1 340.4h1.4v3.4h-1.4zM632.2 342.4h0.9v4.8h-0.9zM631.9 343.8h1.4v2.3h-1.4zM633.0 345.9h0.9v3.7h-0.9zM632.7 346.1h1.4v3.3h-1.4zM633.8 348.5h0.9v4.8h-0.9zM633.5 349.4h1.4v2.2h-1.4zM634.6 350.9h0.9v4.8h-0.9zM634.3 351.6h1.4v3.4h-1.4zM638.4 351.8h0.9v2.3h-0.9zM638.0 351.8h1.4v1.6h-1.4zM639.1 353.4h0.9v1.8h-0.9zM638.8 353.4h1.4v1.7h-1.4zM639.9 354.9h0.9v2.8h-0.9zM639.5 355.1h1.4v1.5h-1.4zM644.2 344.6h0.9v3.1h-0.9zM643.9 345.5h1.4v2.1h-1.4zM645.0 346.9h0.9v1.9h-0.9zM644.7 347.5h1.4v1.3h-1.4zM645.8 346.5h0.9v4.4h-0.9zM645.5 348.2h1.4v1.4h-1.4zM646.6 348.8h0.9v3.9h-0.9zM646.3 349.6h1.4v1.3h-1.4zM647.4 348.7h0.9v3.4h-0.9zM647.0 349.8h1.4v2.1h-1.4zM648.1 350.2h0.9v5.2h-0.9zM647.8 351.9h1.4v2.8h-1.4zM648.9 353.5h0.9v3.1h-0.9zM648.5 354.7h1.4v1.3h-1.4zM649.6 354.8h0.9v2.8h-0.9zM649.3 356.0h1.4v1.4h-1.4zM651.1 353.6h0.9v3.2h-0.9zM650.8 353.9h1.4v1.6h-1.4zM656.6 346.8h0.9v4.1h-0.9zM656.3 348.5h1.4v1.3h-1.4zM658.1 347.9h0.9v3.1h-0.9zM657.8 349.1h1.4v1.6h-1.4zM658.9 349.4h0.9v4.4h-0.9zM658.5 350.7h1.4v1.6h-1.4zM660.4 352.0h0.9v4.2h-0.9zM660.1 352.7h1.4v2.7h-1.4zM661.2 354.9h0.9v4.0h-0.9zM660.9 355.4h1.4v2.4h-1.4zM662.0 357.5h0.9v2.1h-0.9zM661.7 357.8h1.4v1.6h-1.4zM662.8 357.6h0.9v5.5h-0.9zM662.5 359.4h1.4v2.0h-1.4zM663.6 360.7h0.9v3.3h-0.9zM663.3 361.4h1.4v2.5h-1.4zM664.4 363.2h0.9v3.9h-0.9zM664.0 363.9h1.4v1.3h-1.4zM665.1 364.4h0.9v3.8h-0.9zM664.8 364.7h1.4v1.8h-1.4zM666.6 366.5h0.9v3.4h-0.9zM666.3 367.0h1.4v2.4h-1.4zM672.6 355.6h0.9v3.3h-0.9zM672.3 356.8h1.4v1.3h-1.4zM681.2 334.9h0.9v1.8h-0.9zM680.9 335.1h1.4v1.5h-1.4zM682.8 338.4h0.9v4.1h-0.9zM682.5 338.7h1.4v2.0h-1.4zM683.6 339.9h0.9v2.7h-0.9zM683.3 340.7h1.4v1.5h-1.4zM684.4 341.1h0.9v4.1h-0.9zM684.0 342.2h1.4v2.6h-1.4zM685.1 344.2h0.9v3.6h-0.9zM684.8 344.8h1.4v2.6h-1.4zM685.9 346.4h0.9v3.3h-0.9zM685.5 347.4h1.4v1.6h-1.4zM686.6 348.5h0.9v3.4h-0.9zM686.3 349.1h1.4v2.0h-1.4zM696.1 337.7h0.9v4.0h-0.9zM695.8 337.8h1.4v2.0h-1.4zM696.9 338.8h0.9v3.4h-0.9zM696.5 339.7h1.4v1.8h-1.4zM697.6 340.8h0.9v2.4h-0.9zM697.3 341.6h1.4v1.3h-1.4zM714.8 298.5h0.9v3.2h-0.9zM714.5 298.9h1.4v1.3h-1.4zM720.4 288.4h0.9v2.4h-0.9zM720.0 289.0h1.4v1.3h-1.4zM721.1 289.1h0.9v4.4h-0.9zM720.8 290.2h1.4v1.5h-1.4zM721.9 291.3h0.9v1.9h-0.9zM721.5 291.7h1.4v1.4h-1.4zM727.4 290.0h0.9v2.4h-0.9zM727.1 290.3h1.4v1.3h-1.4zM728.2 290.3h0.9v2.2h-0.9zM727.9 290.3h1.4v2.0h-1.4zM729.0 291.6h0.9v2.1h-0.9zM728.7 292.3h1.4v1.3h-1.4zM729.8 292.4h0.9v1.8h-0.9zM729.5 292.6h1.4v1.3h-1.4zM730.6 293.1h0.9v3.1h-0.9zM730.3 293.3h1.4v1.9h-1.4zM732.1 294.1h0.9v3.5h-0.9zM731.8 295.4h1.4v1.3h-1.4zM732.9 296.4h0.9v2.0h-0.9zM732.5 296.6h1.4v1.7h-1.4zM734.4 297.7h0.9v4.6h-0.9zM734.0 299.3h1.4v2.2h-1.4zM735.1 301.2h0.9v4.4h-0.9zM734.8 301.4h1.4v3.2h-1.4zM735.9 303.9h0.9v4.3h-0.9zM735.5 304.6h1.4v2.4h-1.4zM737.6 308.8h0.9v8.1h-0.9zM737.3 309.3h1.4v5.8h-1.4zM742.4 298.7h0.9v5.2h-0.9zM742.0 300.5h1.4v1.8h-1.4zM743.1 302.1h0.9v1.8h-0.9zM742.8 302.2h1.4v1.3h-1.4zM744.6 302.1h0.9v3.1h-0.9zM744.3 303.5h1.4v1.5h-1.4zM745.6 304.1h0.9v6.1h-0.9zM745.3 305.1h1.4v4.8h-1.4zM746.6 308.7h0.9v6.5h-0.9zM746.3 309.9h1.4v4.4h-1.4zM747.6 313.0h0.9v4.1h-0.9zM747.3 314.3h1.4v2.8h-1.4zM748.6 315.9h0.9v5.6h-0.9zM748.3 317.1h1.4v4.0h-1.4zM749.6 319.9h0.9v5.0h-0.9zM749.3 321.1h1.4v3.7h-1.4zM750.6 323.9h0.9v4.9h-0.9zM750.3 324.8h1.4v3.8h-1.4zM753.6 322.9h0.9v10.6h-0.9zM753.3 323.9h1.4v9.6h-1.4zM754.6 332.3h0.9v12.2h-0.9zM754.3 333.4h1.4v10.8h-1.4zM755.6 344.2h0.9v23.5h-0.9zM755.3 344.3h1.4v22.0h-1.4zM764.6 334.8h0.9v3.7h-0.9zM764.3 335.4h1.4v3.0h-1.4zM767.1 339.8h0.9v3.9h-0.9zM766.8 341.6h1.4v1.3h-1.4zM767.9 342.4h0.9v1.7h-0.9zM767.5 342.4h1.4v1.5h-1.4zM769.6 343.0h0.9v4.5h-0.9zM769.3 344.2h1.4v3.0h-1.4zM770.6 345.7h0.9v5.4h-0.9zM770.3 347.2h1.4v2.5h-1.4zM771.4 349.3h0.9v1.8h-0.9zM771.1 349.7h1.4v1.3h-1.4zM773.0 351.9h0.9v1.3h-0.9zM772.7 351.9h1.4v1.3h-1.4zM773.8 351.1h0.9v3.1h-0.9zM773.5 352.8h1.4v1.4h-1.4zM775.4 355.5h0.9v4.2h-0.9zM775.1 356.0h1.4v1.8h-1.4zM776.2 357.4h0.9v2.2h-0.9zM775.9 357.7h1.4v1.3h-1.4zM777.0 356.3h0.9v4.1h-0.9zM776.7 358.0h1.4v1.3h-1.4zM778.6 358.2h0.9v4.2h-0.9zM778.3 359.1h1.4v1.9h-1.4zM779.4 361.0h0.9v2.1h-0.9zM779.1 361.0h1.4v1.4h-1.4zM781.0 361.1h0.9v3.3h-0.9zM780.7 362.8h1.4v1.3h-1.4zM781.8 363.8h0.9v2.9h-0.9zM781.5 363.8h1.4v1.3h-1.4zM782.6 364.0h0.9v4.0h-0.9zM782.3 364.4h1.4v1.9h-1.4zM785.0 366.5h0.9v2.5h-0.9zM784.7 367.6h1.4v1.3h-1.4zM785.8 368.2h0.9v1.4h-0.9zM785.5 368.2h1.4v1.3h-1.4zM788.1 371.4h0.9v3.5h-0.9zM787.8 371.4h1.4v1.6h-1.4zM788.9 371.7h0.9v2.6h-0.9zM788.5 373.0h1.4v1.3h-1.4zM790.4 373.0h0.9v2.7h-0.9zM790.0 373.7h1.4v1.9h-1.4zM791.1 374.4h0.9v4.1h-0.9zM790.8 375.5h1.4v2.0h-1.4zM791.9 376.1h0.9v3.4h-0.9zM791.5 377.5h1.4v1.3h-1.4zM792.6 376.5h0.9v3.7h-0.9zM792.3 377.8h1.4v1.6h-1.4zM793.4 379.2h0.9v1.5h-0.9zM793.0 379.4h1.4v1.3h-1.4zM794.9 380.8h0.9v2.8h-0.9zM794.5 381.7h1.4v1.3h-1.4zM795.6 381.4h0.9v3.7h-0.9zM795.3 383.1h1.4v1.3h-1.4zM796.4 384.3h0.9v1.6h-0.9zM796.0 384.3h1.4v1.3h-1.4zM798.6 385.7h0.9v4.1h-0.9zM798.3 386.7h1.4v1.3h-1.4zM799.4 383.8h0.9v4.2h-0.9zM799.0 385.2h1.4v2.4h-1.4zM802.4 379.7h0.9v2.1h-0.9zM802.0 379.8h1.4v1.3h-1.4zM803.1 379.9h0.9v2.1h-0.9zM802.8 380.4h1.4v1.3h-1.4zM803.9 381.1h0.9v3.4h-0.9zM803.5 381.1h1.4v1.9h-1.4zM805.4 382.8h0.9v4.2h-0.9zM805.0 384.7h1.4v1.3h-1.4zM806.9 385.1h0.9v2.2h-0.9zM806.5 386.1h1.4v1.3h-1.4zM820.4 376.0h0.9v3.5h-0.9zM820.0 376.6h1.4v1.3h-1.4zM823.4 371.1h0.9v3.7h-0.9zM823.0 372.1h1.4v1.3h-1.4zM829.6 364.8h0.9v3.5h-0.9zM829.3 366.6h1.4v1.3h-1.4zM833.6 367.3h0.9v2.1h-0.9zM833.3 368.1h1.4v1.3h-1.4zM836.8 367.0h0.9v2.5h-0.9zM836.5 367.8h1.4v1.3h-1.4zM837.6 367.5h0.9v2.5h-0.9zM837.3 368.4h1.4v1.3h-1.4zM842.6 367.6h0.9v3.0h-0.9zM842.3 369.3h1.4v1.3h-1.4zM844.3 370.0h0.9v2.9h-0.9zM844.0 371.5h1.4v1.3h-1.4zM848.4 372.1h0.9v1.4h-0.9zM848.1 372.2h1.4v1.3h-1.4zM849.2 371.3h0.9v3.4h-0.9zM848.9 373.0h1.4v1.3h-1.4zM850.0 371.9h0.9v5.2h-0.9zM849.7 373.6h1.4v1.8h-1.4zM850.8 375.2h0.9v2.4h-0.9zM850.5 375.4h1.4v1.3h-1.4zM853.2 374.6h0.9v5.0h-0.9zM852.9 376.5h1.4v1.3h-1.4zM869.3 361.5h0.9v2.8h-0.9zM869.0 362.9h1.4v1.3h-1.4zM877.6 357.9h0.9v3.1h-0.9zM877.3 358.8h1.4v1.3h-1.4zM878.4 359.1h0.9v3.1h-0.9zM878.1 359.2h1.4v1.3h-1.4zM879.3 358.5h0.9v4.2h-0.9zM879.0 359.6h1.4v1.3h-1.4zM880.1 359.4h0.9v1.6h-0.9zM879.8 359.6h1.4v1.3h-1.4zM891.1 353.0h0.9v3.4h-0.9zM890.8 353.1h1.4v2.3h-1.4zM893.4 349.4h0.9v3.1h-0.9zM893.1 350.7h1.4v1.3h-1.4zM911.2 349.8h0.9v1.7h-0.9zM910.9 350.0h1.4v1.3h-1.4zM915.2 348.8h0.9v2.9h-0.9zM914.9 349.4h1.4v1.3h-1.4zM916.0 347.2h0.9v3.1h-0.9zM915.7 348.9h1.4v1.3h-1.4zM918.4 348.8h0.9v2.5h-0.9zM918.1 348.8h1.4v1.3h-1.4zM919.2 349.4h0.9v3.1h-0.9zM918.9 349.8h1.4v1.3h-1.4zM921.5 349.8h0.9v3.4h-0.9zM921.2 351.3h1.4v1.3h-1.4zM922.3 350.7h0.9v3.8h-0.9zM922.0 352.0h1.4v1.3h-1.4zM925.4 352.7h0.9v2.9h-0.9zM925.1 352.7h1.4v1.3h-1.4zM927.7 353.6h0.9v3.1h-0.9zM927.4 354.9h1.4v1.3h-1.4zM931.6 356.2h0.9v2.9h-0.9zM931.3 356.3h1.4v1.3h-1.4zM932.4 356.5h0.9v2.7h-0.9zM932.1 357.2h1.4v1.3h-1.4zM946.3 355.5h0.9v2.5h-0.9zM946.0 356.3h1.4v1.3h-1.4zM947.1 355.8h0.9v3.9h-0.9zM946.8 357.0h1.4v1.3h-1.4zM948.8 357.4h0.9v3.6h-0.9zM948.5 358.5h1.4v1.7h-1.4zM950.4 359.9h0.9v4.7h-0.9zM950.1 361.6h1.4v1.3h-1.4zM955.2 361.3h0.9v2.1h-0.9zM954.9 361.6h1.4v1.3h-1.4zM959.1 363.0h0.9v1.8h-0.9zM958.8 363.5h1.4v1.3h-1.4zM962.9 364.5h0.9v2.4h-0.9zM962.5 365.0h1.4v1.3h-1.4zM966.0 367.2h0.9v2.1h-0.9zM965.7 367.9h1.4v1.3h-1.4zM966.8 368.7h0.9v1.8h-0.9zM966.5 368.9h1.4v1.3h-1.4z"/>
<polyline points="6.00,520.28 6.75,520.06 7.50,520.50 8.25,518.81 9.00,518.42 9.75,517.73 10.50,515.78 11.25,515.73 12.00,515.14 12.75,516.16 13.50,514.94 14.25,516.09 15.00,516.14 15.75,517.11 16.50,515.90 17.25,513.31 18.00,514.85 18.80,515.05 19.60,514.48 20.40,514.62 21.20,513.67 22.00,513.54 22.80,514.53 23.60,512.97 24.40,512.97 25.20,512.77 26.00,511.88 27.00,513.26 28.00,513.45 29.00,521.29 29.80,520.79 30.60,521.44 31.40,521.42 32.20,522.18 33.00,521.99 33.80,521.76 34.60,523.87 35.40,524.11 36.20,523.94 37.00,523.84 37.75,521.92 38.50,520.80 39.25,520.05 40.00,518.58 40.80,520.13 41.60,518.92 42.40,519.82 43.20,518.36 44.00,519.59 45.00,513.85 46.00,506.20 46.80,506.25 47.60,507.57 48.40,505.92 49.20,506.75 50.00,504.73 50.83,504.17 51.67,505.90 52.50,506.57 53.33,505.53 54.17,505.34 55.00,506.26 55.83,508.04 56.67,507.64 57.50,506.11 58.33,506.57 59.17,506.33 60.00,506.36 60.80,508.75 61.60,507.62 62.40,509.09 63.20,509.28 64.00,509.10 64.75,510.20 65.50,508.34 66.25,509.37 67.00,507.70 67.75,509.09 68.50,509.15 69.25,509.90 70.00,512.32 70.83,512.31 71.67,511.42 72.50,513.35 73.33,512.01 74.17,512.91 75.00,514.52 75.83,514.29 76.67,513.19 77.50,515.82 78.33,514.12 79.17,514.55 80.00,516.21 80.75,514.97 81.50,514.80 82.25,514.13 83.00,514.08 83.75,515.28 84.50,514.31 85.25,515.15 86.00,514.47 86.80,515.32 87.60,517.27 88.40,516.68 89.20,517.55 90.00,518.95 90.78,517.22 91.56,517.19 92.33,519.20 93.11,519.00 93.89,517.57 94.67,517.46 95.44,518.93 96.22,519.50 97.00,517.61 97.78,519.53 98.56,519.30 99.33,518.54 100.11,518.02 100.89,517.15 101.67,516.93 102.44,519.29 103.22,517.36 104.00,518.53 104.75,518.39 105.50,520.89 106.25,521.33 107.00,521.56 107.75,520.66 108.50,521.47 109.25,519.18 110.00,518.99 110.83,519.32 111.67,519.55 112.50,518.40 113.33,517.00 114.17,518.12 115.00,515.73 115.75,514.64 116.50,514.70 117.25,514.56 118.00,512.96 118.78,513.47 119.56,514.18 120.33,514.92 121.11,513.99 121.89,514.80 122.67,516.38 123.44,516.83 124.22,516.20 125.00,516.50 125.83,516.42 126.67,515.46 127.50,515.39 128.33,515.55 129.17,518.07 130.00,517.72 130.83,518.00 131.67,515.16 132.50,516.35 133.33,515.55 134.17,515.80 135.00,514.33 135.83,516.50 136.67,514.50 137.50,516.12 138.33,517.02 139.17,517.84 140.00,517.82 140.83,517.53 141.67,517.56 142.50,517.68 143.33,516.01 144.17,516.68 145.00,517.04 145.78,516.83 146.56,515.52 147.33,516.36 148.11,516.41 148.89,515.52 149.67,515.52 150.44,514.76 151.22,515.15 152.00,515.08 152.80,513.54 153.60,514.82 154.40,515.57 155.20,515.11 156.00,514.54 156.80,513.49 157.60,514.22 158.40,513.65 159.20,513.12 160.00,513.98 160.80,511.71 161.60,513.13 162.40,510.95 163.20,512.12 164.00,511.50 164.80,510.54 165.60,511.45 166.40,510.61 167.20,510.61 168.00,511.09 168.80,509.29 169.60,508.57 170.40,509.24 171.20,510.14 172.00,508.83 172.80,508.66 173.60,510.49 174.40,509.78 175.20,509.13 176.00,510.22 176.82,508.48 177.64,509.09 178.45,507.60 179.27,507.93 180.09,508.63 180.91,508.64 181.73,508.28 182.55,506.72 183.36,506.96 184.18,506.00 185.00,505.25 185.78,506.61 186.56,507.92 187.33,508.37 188.11,508.44 188.89,509.48 189.67,508.15 190.44,508.30 191.22,509.45 192.00,509.42 192.80,509.37 193.60,510.00 194.40,510.66 195.20,510.42 196.00,510.07 196.80,511.54 197.60,512.02 198.40,510.76 199.20,509.88 200.00,509.88 200.83,511.47 201.67,508.71 202.50,509.84 203.33,508.88 204.17,507.60 205.00,508.26 205.78,506.25 206.56,506.55 207.33,507.38 208.11,506.26 208.89,508.36 209.67,506.82 210.44,506.57 211.22,506.32 212.00,507.84 212.80,507.19 213.60,507.50 214.40,507.39 215.20,507.62 216.00,507.84 216.80,506.96 217.60,505.53 218.40,506.08 219.20,505.13 220.00,504.53 220.75,505.84 221.50,506.58 222.25,505.30 223.00,505.66 223.75,505.96 224.50,506.99 225.25,506.64 226.00,507.00 226.82,507.44 227.64,506.57 228.45,507.68 229.27,508.05 230.09,505.99 230.91,508.26 231.73,507.79 232.55,506.32 233.36,507.23 234.18,507.75 235.00,508.57 235.83,507.98 236.67,509.28 237.50,510.89 238.33,511.47 239.17,512.66 240.00,512.21 240.83,512.49 241.67,511.13 242.50,512.28 243.33,512.33 244.17,511.67 245.00,511.67 245.83,511.09 246.67,513.61 247.50,514.55 248.33,515.27 249.17,514.86 250.00,516.26 250.83,514.72 251.67,515.93 252.50,515.48 253.33,513.84 254.17,512.83 255.00,513.45 255.78,513.45 256.56,513.74 257.33,512.73 258.11,511.26 258.89,513.01 259.67,510.80 260.44,512.44 261.22,510.53 262.00,510.67 262.75,511.71 263.50,509.89 264.25,509.77 265.00,510.59 265.75,510.99 266.50,511.16 267.25,510.63 268.00,511.16 269.00,509.08 270.00,509.37 270.75,507.42 271.50,508.08 272.25,509.17 273.00,508.85 273.75,510.29 274.50,510.36 275.25,510.36 276.00,511.49 276.80,510.70 277.60,509.99 278.40,510.11 279.20,511.26 280.00,511.34 280.80,509.48 281.60,511.09 282.40,511.34 283.20,510.12 284.00,510.19 284.75,509.22 285.50,510.09 286.25,510.01 287.00,510.27 287.75,508.77 288.50,511.22 289.25,510.04 290.00,509.74 290.83,510.97 291.67,510.53 292.50,510.53 293.33,511.23 294.17,509.79 295.00,511.20 295.83,510.48 296.67,511.49 297.50,511.00 298.33,508.90 299.17,509.03 300.00,507.73 300.80,508.13 301.60,508.72 302.40,508.54 303.20,507.04 304.00,506.22 305.00,503.25 306.00,501.71 306.75,501.58 307.50,498.59 308.25,499.35 309.00,496.46 309.80,496.90 310.60,496.99 311.40,498.19 312.20,497.24 313.00,497.32 313.75,497.41 314.50,495.47 315.25,496.50 316.00,494.32 317.00,494.68 318.00,493.35 318.80,492.97 319.60,493.60 320.40,493.12 321.20,492.72 322.00,492.57 322.75,491.85 323.50,489.87 324.25,488.96 325.00,489.04 325.75,488.26 326.50,487.18 327.25,487.21 328.00,485.79 328.75,485.20 329.50,482.35 330.25,482.45 331.00,481.41 332.00,478.60 333.00,474.02 334.00,469.77 335.00,467.10 336.00,461.57 337.00,461.80 338.00,459.71 339.00,441.85 340.00,432.42 341.00,432.49 342.00,439.77 343.00,432.65 344.00,427.86 345.00,421.90 346.00,464.35 346.80,462.37 347.60,462.83 348.40,463.30 349.20,461.31 350.00,461.52 350.75,462.05 351.50,461.92 352.25,461.34 353.00,458.40 353.75,458.64 354.50,458.52 355.25,457.08 356.00,456.78 356.75,456.39 357.50,456.98 358.25,457.98 359.00,458.70 359.75,458.33 360.50,456.54 361.25,454.98 362.00,452.18 362.75,453.25 363.50,454.28 364.25,456.91 365.00,458.27 365.80,458.45 366.60,456.63 367.40,456.88 368.20,459.53 369.00,458.60 369.75,460.29 370.50,460.05 371.25,461.31 372.00,462.34 372.75,463.64 373.50,465.61 374.25,465.61 375.00,468.92 375.75,469.62 376.50,468.22 377.25,469.26 378.00,470.32 378.75,468.23 379.50,466.46 380.25,465.15 381.00,464.83 381.80,463.78 382.60,466.30 383.40,466.30 384.20,466.29 385.00,466.94 385.75,463.59 386.50,460.25 387.25,458.01 388.00,455.01 388.80,456.01 389.60,455.31 390.40,453.65 391.20,455.11 392.00,454.44 392.80,455.98 393.60,457.54 394.40,457.93 395.20,460.67 396.00,462.09 396.80,461.13 397.60,460.83 398.40,460.35 399.20,458.93 400.00,459.28 400.75,456.06 401.50,455.24 402.25,454.04 403.00,451.33 403.75,451.92 404.50,452.36 405.25,452.02 406.00,450.70 406.80,451.82 407.60,450.35 408.40,448.76 409.20,448.86 410.00,447.88 410.80,448.27 411.60,448.37 412.40,450.44 413.20,449.99 414.00,450.62 414.80,451.52 415.60,452.83 416.40,451.08 417.20,453.36 418.00,454.42 418.75,453.59 419.50,454.39 420.25,453.91 421.00,454.71 421.75,454.15 422.50,452.41 423.25,451.78 424.00,452.45 424.75,451.21 425.50,450.77 426.25,451.64 427.00,450.28 427.75,452.01 428.50,451.71 429.25,452.78 430.00,451.50 430.75,451.63 431.50,450.82 432.25,447.74 433.00,448.82 433.80,446.58 434.60,447.15 435.40,446.12 436.20,446.73 437.00,446.79 437.80,444.85 438.60,446.66 439.40,444.79 440.20,444.57 441.00,444.25 441.75,442.15 442.50,440.44 443.25,439.90 444.00,438.16 444.75,436.21 445.50,436.11 446.25,433.79 447.00,431.84 447.75,431.51 448.50,430.06 449.25,429.43 450.00,430.06 450.75,430.94 451.50,434.08 452.25,435.52 453.00,435.53 453.75,438.60 454.50,439.11 455.25,437.47 456.00,440.25 456.80,438.04 457.60,437.18 458.40,437.49 459.20,434.61 460.00,434.36 460.80,436.66 461.60,437.32 462.40,437.88 463.20,440.42 464.00,441.22 464.75,441.57 465.50,441.20 466.25,443.42 467.00,443.88 467.80,442.27 468.60,440.92 469.40,441.19 470.20,439.18 471.00,439.05 471.80,438.66 472.60,437.12 473.40,435.64 474.20,435.49 475.00,434.09 475.75,436.85 476.50,438.03 477.25,441.07 478.00,442.78 479.00,441.61 480.00,439.72 480.75,438.17 481.50,438.97 482.25,437.46 483.00,435.82 484.00,434.18 485.00,433.01 486.00,436.88 487.00,439.37 487.75,440.04 488.50,440.75 489.25,441.66 490.00,440.79 490.75,441.87 491.50,444.70 492.25,445.46 493.00,446.28 493.80,444.00 494.60,443.96 495.40,444.40 496.20,444.71 497.00,445.12 497.75,444.37 498.50,446.11 499.25,445.49 500.00,446.12 500.80,447.38 501.60,446.77 502.40,446.70 503.20,445.75 504.00,445.74 504.75,444.17 505.50,443.64 506.25,443.81 507.00,443.18 507.75,441.02 508.50,440.96 509.25,442.58 510.00,441.92 510.75,442.47 511.50,441.20 512.25,441.93 513.00,441.67 514.00,445.21 515.00,446.16 516.00,449.35 517.00,452.67 517.75,450.62 518.50,450.88 519.25,451.06 520.00,451.19 520.75,449.31 521.50,448.56 522.25,447.25 523.00,448.68 523.75,446.13 524.50,445.67 525.25,446.44 526.00,445.76 526.75,446.76 527.50,446.23 528.25,447.94 529.00,446.60 529.75,448.18 530.50,450.57 531.25,450.29 532.00,452.09 532.75,453.48 533.50,453.70 534.25,452.94 535.00,452.87 535.75,453.01 536.50,453.54 537.25,452.18 538.00,451.11 538.75,452.27 539.50,451.53 540.25,452.06 541.00,451.74 541.75,451.55 542.50,450.19 543.25,451.01 544.00,449.59 544.75,450.13 545.50,450.84 546.25,452.73 547.00,453.13 547.83,451.45 548.67,451.74 549.50,451.75 550.33,451.74 551.17,451.83 552.00,451.81 552.80,450.91 553.60,451.47 554.40,451.67 555.20,450.61 556.00,450.97 556.80,449.78 557.60,448.30 558.40,449.33 559.20,449.17 560.00,447.13 560.75,446.33 561.50,447.49 562.25,447.44 563.00,447.38 564.00,447.71 565.00,456.69 566.00,458.64 567.00,458.27 567.75,459.17 568.50,459.45 569.25,457.27 570.00,456.91 570.75,458.79 571.50,459.39 572.25,457.45 573.00,459.05 573.80,458.11 574.60,460.02 575.40,460.11 576.20,459.40 577.00,459.67 577.75,461.46 578.50,461.21 579.25,462.21 580.00,461.63 580.75,461.58 581.50,463.32 582.25,462.65 583.00,462.28 584.00,463.05 585.00,464.17 585.75,463.22 586.50,462.83 587.25,460.59 588.00,460.75 589.00,454.23 589.75,455.14 590.50,455.45 591.25,455.94 592.00,456.51 592.75,457.19 593.50,456.86 594.25,457.06 595.00,458.05 596.00,459.49 597.00,459.70 597.75,459.09 598.50,457.78 599.25,458.73 600.00,458.78 600.83,457.18 601.67,456.64 602.50,456.73 603.33,457.30 604.17,456.96 605.00,458.72 605.80,456.25 606.60,456.80 607.40,456.20 608.20,457.48 609.00,457.72 609.75,454.77 610.50,453.06 611.25,452.69 612.00,451.62 612.75,451.41 613.50,448.09 614.25,447.23 615.00,446.38 616.00,444.87 617.00,443.31 617.75,445.36 618.50,445.85 619.25,445.68 620.00,446.38 620.75,447.08 621.50,447.25 622.25,449.22 623.00,448.51 624.00,448.48 625.00,448.52 626.00,454.95 627.00,440.98 627.75,442.91 628.50,443.28 629.25,442.09 630.00,442.92 630.75,445.21 631.50,445.20 632.25,445.75 633.00,446.53 634.00,446.41 635.00,443.58 635.75,442.03 636.50,441.92 637.25,441.42 638.00,440.31 638.75,442.35 639.50,441.66 640.25,440.74 641.00,440.33 641.75,440.93 642.50,440.07 643.25,440.57 644.00,439.75 644.75,439.18 645.50,437.71 646.25,437.41 647.00,437.54 647.75,436.45 648.50,437.11 649.25,435.27 650.00,434.66 650.75,434.06 651.50,430.64 652.25,429.81 653.00,427.29 653.75,428.78 654.50,426.65 655.25,428.66 656.00,428.60 656.75,429.39 657.50,428.31 658.25,429.65 659.00,431.66 659.75,430.25 660.50,431.45 661.25,431.62 662.00,433.08 663.00,434.53 664.00,437.63 664.75,434.99 665.50,435.05 666.25,432.88 667.00,432.98 667.75,428.81 668.50,428.70 669.25,425.07 670.00,423.91 671.00,422.42 672.00,420.01 672.75,422.99 673.50,422.86 674.25,424.08 675.00,424.70 675.75,426.82 676.50,428.76 677.25,430.93 678.00,431.54 678.75,434.81 679.50,435.72 680.25,438.90 681.00,441.50 682.00,445.26 683.00,447.36 683.75,446.48 684.50,444.38 685.25,444.91 686.00,445.35 686.75,442.72 687.50,442.17 688.25,440.49 689.00,437.93 689.75,439.25 690.50,437.53 691.25,434.76 692.00,434.60 692.75,434.56 693.50,435.58 694.25,436.80 695.00,436.98 696.00,438.53 697.00,440.12 698.00,437.78 699.00,433.67 699.75,432.92 700.50,433.70 701.25,432.06 702.00,433.06 702.75,433.59 703.50,435.53 704.25,436.04 705.00,438.85 705.75,438.44 706.50,440.07 707.25,441.45 708.00,444.46 709.00,446.39 710.00,446.87 710.75,445.32 711.50,444.33 712.25,441.57 713.00,438.13 713.75,438.79 714.50,438.91 715.25,439.12 716.00,440.16 717.00,442.94 718.00,448.79 719.00,447.21 720.00,447.13 720.75,448.73 721.50,450.29 722.25,451.68 723.00,451.80 723.75,451.96 724.50,452.47 725.25,451.74 726.00,453.04 726.75,454.74 727.50,456.40 728.25,456.83 729.00,457.42 729.75,458.23 730.50,457.65 731.25,459.41 732.00,460.39 732.75,459.64 733.50,456.68 734.25,455.83 735.00,454.62 735.75,455.95 736.50,456.65 737.25,456.69 738.00,456.11 738.80,457.95 739.60,458.57 740.40,457.91 741.20,457.66 742.00,458.30 742.75,455.49 743.50,455.10 744.25,453.94 745.00,450.84 745.75,449.81 746.50,448.57 747.25,445.36 748.00,445.76 748.75,445.13 749.50,444.21 750.25,444.12 751.00,444.74 751.75,444.77 752.50,444.26 753.25,442.48 754.00,443.22 755.00,446.74 756.00,452.00 757.00,439.92 757.75,443.68 758.50,443.05 759.25,446.60 760.00,447.21 760.75,447.88 761.50,448.51 762.25,448.36 763.00,450.66 763.75,452.13 764.50,452.93 765.25,453.61 766.00,453.62 766.75,454.19 767.50,451.55 768.25,451.88 769.00,448.93 769.75,450.72 770.50,452.31 771.25,451.56 772.00,453.42 772.80,452.20 773.60,452.08 774.40,452.47 775.20,454.57 776.00,454.44 776.80,454.31 777.60,454.00 778.40,455.55 779.20,456.32 780.00,455.99 781.00,458.14 782.00,460.29 782.80,458.10 783.60,458.44 784.40,459.00 785.20,458.01 786.00,458.50 786.80,458.78 787.60,457.55 788.40,458.25 789.20,457.39 790.00,457.98 790.75,456.24 791.50,455.92 792.25,453.22 793.00,453.74 793.75,449.90 794.50,449.54 795.25,446.14 796.00,443.32 797.00,442.52 798.00,442.42 798.75,443.54 799.50,444.67 800.25,445.60 801.00,445.86 802.00,449.64 803.00,451.68 803.75,452.05 804.50,451.21 805.25,451.60 806.00,452.27 806.80,453.65 807.60,453.17 808.40,453.67 809.20,453.92 810.00,455.65 810.75,453.68 811.50,452.54 812.25,453.84 813.00,453.84 814.00,456.75 815.00,459.75 815.80,459.65 816.60,457.99 817.40,458.24 818.20,456.38 819.00,456.02 820.00,460.61 821.00,464.51 821.80,464.97 822.60,464.82 823.40,467.23 824.20,467.53 825.00,467.52 825.75,467.40 826.50,467.33 827.25,466.61 828.00,465.88 828.75,467.44 829.50,466.96 830.25,465.56 831.00,465.45 831.80,464.06 832.60,464.81 833.40,463.06 834.20,464.18 835.00,463.47 835.80,464.59 836.60,462.74 837.40,464.78 838.20,463.28 839.00,464.60 839.80,465.17 840.60,462.20 841.40,462.33 842.20,461.98 843.00,461.54 844.00,460.26 845.00,461.83 845.80,462.12 846.60,461.53 847.40,461.93 848.20,463.02 849.00,462.12 849.75,460.51 850.50,461.19 851.25,458.08 852.00,457.00 852.80,458.39 853.60,458.76 854.40,457.71 855.20,457.28 856.00,457.77 856.80,459.80 857.60,460.13 858.40,458.71 859.20,460.78 860.00,459.92 860.80,460.33 861.60,459.65 862.40,461.59 863.20,461.99 864.00,460.03 864.75,462.99 865.50,463.70 866.25,467.34 867.00,467.03 867.80,467.68 868.60,469.79 869.40,469.21 870.20,471.24 871.00,471.66 871.80,471.85 872.60,470.95 873.40,473.01 874.20,474.24 875.00,473.56 875.75,472.18 876.50,472.13 877.25,471.92 878.00,472.55 878.80,471.05 879.60,470.85 880.40,470.83 881.20,471.79 882.00,471.96 882.80,471.03 883.60,471.94 884.40,472.68 885.20,472.07 886.00,471.30 886.80,471.48 887.60,473.11 888.40,472.43 889.20,471.42 890.00,472.36 891.00,469.03 892.00,469.46 892.75,469.42 893.50,471.02 894.25,472.41 895.00,472.52 895.80,473.36 896.60,471.94 897.40,471.25 898.20,472.09 899.00,469.63 899.80,469.90 900.60,470.88 901.40,469.32 902.20,469.17 903.00,469.63 903.80,469.18 904.60,471.53 905.40,472.27 906.20,470.29 907.00,471.90 907.80,472.65 908.60,471.70 909.40,473.12 910.20,472.00 911.00,471.17 911.80,472.49 912.60,473.06 913.40,472.66 914.20,473.77 915.00,474.44 915.80,473.54 916.60,473.31 917.40,474.00 918.20,473.38 919.00,472.75 919.80,474.23 920.60,472.57 921.40,474.51 922.20,473.27 923.00,474.78 923.80,473.45 924.60,473.63 925.40,474.13 926.20,473.81 927.00,473.46 927.75,471.64 928.50,471.92 929.25,470.85 930.00,471.41 931.00,469.70 932.00,466.99 932.75,469.40 933.50,470.66 934.25,471.24 935.00,472.97 935.80,471.31 936.60,471.37 937.40,471.17 938.20,472.55 939.00,472.53 939.80,473.15 940.60,473.28 941.40,475.28 942.20,473.99 943.00,476.76 943.75,475.58 944.50,475.21 945.25,475.56 946.00,473.82 946.80,474.08 947.60,475.01 948.40,474.81 949.20,476.02 950.00,477.32 950.75,477.87 951.50,477.99 952.25,479.63 953.00,479.13 953.75,479.91 954.50,477.10 955.25,476.19 956.00,474.82 956.80,476.30 957.60,476.76 958.40,476.75 959.20,474.96 960.00,475.97 960.75,475.42 961.50,474.61 962.25,476.15 963.00,473.31 963.75,474.15 964.50,474.53 965.25,474.79 966.00,472.28 966.75,472.46 967.50,472.59 968.25,470.13 969.00,470.03 970.00,471.11 971.00,468.57" fill="none" stroke="#ff0000" stroke-width="1.75" stroke-linejoin="miter" stroke-miterlimit="2"/>
<use href="#g_ji" x="6.729" y="40.099999999999994" width="8.6" height="8.6" stroke-width="1.1" style="color:#d6d6d6"/>
<use href="#g_koku" x="16.449" y="40.099999999999994" width="8.6" height="8.6" stroke-width="1.1" style="color:#d6d6d6"/>
<g transform="translate(25.44 0) scale(0.8 1)"><text x="0.61 6.68 12.76 18.83 24.91 30.98 37.06" y="48.4" font-size="10.5" fill="#d6d6d6" font-family="Liberation Sans, sans-serif" font-weight="normal">:06:00 </text></g>
<use href="#g_shi" x="60.18900000000001" y="40.099999999999994" width="8.6" height="8.6" stroke-width="1.1" style="color:#d6d6d6"/>
<use href="#g_ne" x="69.909" y="40.099999999999994" width="8.6" height="8.6" stroke-width="1.1" style="color:#d6d6d6"/>
<g transform="translate(78.90 0) scale(0.8 1)"><text x="0.61 6.68 12.76 18.83 24.91 30.98 37.06" y="48.4" font-size="10.5" fill="#d6d6d6" font-family="Liberation Sans, sans-serif" font-weight="normal">:6,439 </text></g>
<use href="#g_taka" x="113.64900000000002" y="40.099999999999994" width="8.6" height="8.6" stroke-width="1.1" style="color:#d6d6d6"/>
<use href="#g_ne" x="123.36900000000001" y="40.099999999999994" width="8.6" height="8.6" stroke-width="1.1" style="color:#d6d6d6"/>
<g transform="translate(132.36 0) scale(0.8 1)"><text x="0.61 6.68 12.76 18.83 24.91 30.98 37.06" y="48.4" font-size="10.5" fill="#d6d6d6" font-family="Liberation Sans, sans-serif" font-weight="normal">:6,439 </text></g>
<use href="#g_an" x="167.10900000000004" y="40.099999999999994" width="8.6" height="8.6" stroke-width="1.1" style="color:#d6d6d6"/>
<use href="#g_ne" x="176.82900000000004" y="40.099999999999994" width="8.6" height="8.6" stroke-width="1.1" style="color:#d6d6d6"/>
<g transform="translate(185.82 0) scale(0.8 1)"><text x="0.61 6.68 12.76 18.83 24.91 30.98 37.06" y="48.4" font-size="10.5" fill="#d6d6d6" font-family="Liberation Sans, sans-serif" font-weight="normal">:6,439 </text></g>
<use href="#g_shu" x="220.56900000000005" y="40.099999999999994" width="8.6" height="8.6" stroke-width="1.1" style="color:#d6d6d6"/>
<use href="#g_ne" x="230.28900000000004" y="40.099999999999994" width="8.6" height="8.6" stroke-width="1.1" style="color:#d6d6d6"/>
<g transform="translate(239.28 0) scale(0.8 1)"><text x="0.61 6.68 12.76 18.83 24.91 30.98" y="48.4" font-size="10.5" fill="#d6d6d6" font-family="Liberation Sans, sans-serif" font-weight="normal">:6,439</text></g>
<use href="#g_ji" x="6.729" y="206.1" width="8.6" height="8.6" stroke-width="1.1" style="color:#d6d6d6"/>
<use href="#g_koku" x="16.449" y="206.1" width="8.6" height="8.6" stroke-width="1.1" style="color:#d6d6d6"/>
<g transform="translate(25.44 0) scale(0.8 1)"><text x="0.61 6.68 12.76 18.83 24.91 30.98 37.06" y="214.4" font-size="10.5" fill="#d6d6d6" font-family="Liberation Sans, sans-serif" font-weight="normal">:06:00 </text></g>
<use href="#g_shi" x="60.18900000000001" y="206.1" width="8.6" height="8.6" stroke-width="1.1" style="color:#d6d6d6"/>
<use href="#g_ne" x="69.909" y="206.1" width="8.6" height="8.6" stroke-width="1.1" style="color:#d6d6d6"/>
<g transform="translate(78.90 0) scale(0.8 1)"><text x="0.61 6.68 12.76 18.83 24.91 30.98 37.06" y="214.4" font-size="10.5" fill="#d6d6d6" font-family="Liberation Sans, sans-serif" font-weight="normal">:3,395 </text></g>
<use href="#g_taka" x="113.64900000000002" y="206.1" width="8.6" height="8.6" stroke-width="1.1" style="color:#d6d6d6"/>
<use href="#g_ne" x="123.36900000000001" y="206.1" width="8.6" height="8.6" stroke-width="1.1" style="color:#d6d6d6"/>
<g transform="translate(132.36 0) scale(0.8 1)"><text x="0.61 6.68 12.76 18.83 24.91 30.98 37.06" y="214.4" font-size="10.5" fill="#d6d6d6" font-family="Liberation Sans, sans-serif" font-weight="normal">:3,395 </text></g>
<use href="#g_an" x="167.10900000000004" y="206.1" width="8.6" height="8.6" stroke-width="1.1" style="color:#d6d6d6"/>
<use href="#g_ne" x="176.82900000000004" y="206.1" width="8.6" height="8.6" stroke-width="1.1" style="color:#d6d6d6"/>
<g transform="translate(185.82 0) scale(0.8 1)"><text x="0.61 6.68 12.76 18.83 24.91 30.98 37.06" y="214.4" font-size="10.5" fill="#d6d6d6" font-family="Liberation Sans, sans-serif" font-weight="normal">:3,395 </text></g>
<use href="#g_shu" x="220.56900000000005" y="206.1" width="8.6" height="8.6" stroke-width="1.1" style="color:#d6d6d6"/>
<use href="#g_ne" x="230.28900000000004" y="206.1" width="8.6" height="8.6" stroke-width="1.1" style="color:#d6d6d6"/>
<g transform="translate(239.28 0) scale(0.8 1)"><text x="0.61 6.68 12.76 18.83 24.91 30.98" y="214.4" font-size="10.5" fill="#d6d6d6" font-family="Liberation Sans, sans-serif" font-weight="normal">:3,395</text></g>
<g transform="translate(6.00 0) scale(0.8 1)"><text x="0.61" y="425.5" font-size="10.5" fill="#d6d6d6" font-family="Liberation Sans, sans-serif" font-weight="normal">[</text></g>
<use href="#g_kin" x="11.588999999999999" y="417.2" width="8.6" height="8.6" stroke-width="1.1" style="color:#d6d6d6"/>
<g transform="translate(20.58 0) scale(0.8 1)"><text x="0.61 6.68 12.76 18.83 24.91 30.98 37.06 43.13 49.21 55.28 61.36 67.43" y="425.5" font-size="10.5" fill="#d6d6d6" font-family="Liberation Sans, sans-serif" font-weight="normal"> 22/10 6,439</text></g>
<path d="M80.60 418.70L86.92 424.70M86.92 418.70L80.60 424.70" stroke="#d6d6d6" stroke-width="0.9"/>
<g transform="translate(88.62 0) scale(0.8 1)"><text x="0.61 6.68 12.76 18.83 24.91 30.98 37.06" y="425.5" font-size="10.5" fill="#d6d6d6" font-family="Liberation Sans, sans-serif" font-weight="normal">1.00]-[</text></g>
<use href="#g_haku" x="123.36900000000001" y="417.2" width="8.6" height="8.6" stroke-width="1.1" style="color:#d6d6d6"/>
<use href="#g_kin" x="133.08900000000003" y="417.2" width="8.6" height="8.6" stroke-width="1.1" style="color:#d6d6d6"/>
<g transform="translate(142.08 0) scale(0.8 1)"><text x="0.61 6.68 12.76 18.83 24.91 30.98 37.06 43.13 49.21 55.28 61.36 67.43" y="425.5" font-size="10.5" fill="#d6d6d6" font-family="Liberation Sans, sans-serif" font-weight="normal"> 22/10 3,395</text></g>
<path d="M202.10 418.70L208.42 424.70M208.42 418.70L202.10 424.70" stroke="#d6d6d6" stroke-width="0.9"/>
<g transform="translate(210.12 0) scale(0.8 1)"><text x="0.61 6.68 12.76 18.83 24.91 30.98" y="425.5" font-size="10.5" fill="#d6d6d6" font-family="Liberation Sans, sans-serif" font-weight="normal">1.00] </text></g>
<use href="#g_shu" x="240.00900000000004" y="417.2" width="8.6" height="8.6" stroke-width="1.1" style="color:#d6d6d6"/>
<use href="#g_ne" x="249.72900000000004" y="417.2" width="8.6" height="8.6" stroke-width="1.1" style="color:#d6d6d6"/>
<g transform="translate(258.72 0) scale(0.8 1)"><text x="0.61" y="425.5" font-size="10.5" fill="#d6d6d6" font-family="Liberation Sans, sans-serif" font-weight="normal"> </text></g>
<use href="#g_ji" x="264.309" y="417.2" width="8.6" height="8.6" stroke-width="1.1" style="color:#d6d6d6"/>
<use href="#g_koku" x="274.02900000000005" y="417.2" width="8.6" height="8.6" stroke-width="1.1" style="color:#d6d6d6"/>
<g transform="translate(283.02 0) scale(0.8 1)"><text x="0.61 6.68 12.76 18.83 24.91 30.98 37.06 43.13 49.21 55.28 61.36 67.43" y="425.5" font-size="10.5" fill="#d6d6d6" font-family="Liberation Sans, sans-serif" font-weight="normal">:06:00 3,044</text></g>
<g transform="translate(974.80 0) scale(0.78 1)"><text x="0.60 6.63 12.65 18.68 24.71" y="66.95" font-size="10.4" fill="#bdbdbd" font-family="Liberation Sans, sans-serif" font-weight="normal">6,525</text></g>
<g transform="translate(974.80 0) scale(0.78 1)"><text x="0.60 6.63 12.65 18.68 24.71" y="98.20" font-size="10.4" fill="#bdbdbd" font-family="Liberation Sans, sans-serif" font-weight="normal">6,500</text></g>
<g transform="translate(974.80 0) scale(0.78 1)"><text x="0.60 6.63 12.65 18.68 24.71" y="129.45" font-size="10.4" fill="#bdbdbd" font-family="Liberation Sans, sans-serif" font-weight="normal">6,475</text></g>
<g transform="translate(974.80 0) scale(0.78 1)"><text x="0.60 6.63 12.65 18.68 24.71" y="160.70" font-size="10.4" fill="#bdbdbd" font-family="Liberation Sans, sans-serif" font-weight="normal">6,450</text></g>
<g transform="translate(974.80 0) scale(0.78 1)"><text x="0.60 6.63 12.65 18.68 24.71" y="191.95" font-size="10.4" fill="#bdbdbd" font-family="Liberation Sans, sans-serif" font-weight="normal">6,425</text></g>
<g transform="translate(974.80 0) scale(0.78 1)"><text x="0.60 6.63 12.65 18.68 24.71" y="214.40" font-size="10.4" fill="#bdbdbd" font-family="Liberation Sans, sans-serif" font-weight="normal">3,550</text></g>
<g transform="translate(974.80 0) scale(0.78 1)"><text x="0.60 6.63 12.65 18.68 24.71" y="263.90" font-size="10.4" fill="#bdbdbd" font-family="Liberation Sans, sans-serif" font-weight="normal">3,500</text></g>
<g transform="translate(974.80 0) scale(0.78 1)"><text x="0.60 6.63 12.65 18.68 24.71" y="313.70" font-size="10.4" fill="#bdbdbd" font-family="Liberation Sans, sans-serif" font-weight="normal">3,450</text></g>
<g transform="translate(974.80 0) scale(0.78 1)"><text x="0.60 6.63 12.65 18.68 24.71" y="364.60" font-size="10.4" fill="#bdbdbd" font-family="Liberation Sans, sans-serif" font-weight="normal">3,400</text></g>
<g transform="translate(974.80 0) scale(0.78 1)"><text x="0.60 6.63 12.65 18.68 24.71" y="413.70" font-size="10.4" fill="#bdbdbd" font-family="Liberation Sans, sans-serif" font-weight="normal">3,350</text></g>
<g transform="translate(974.80 0) scale(0.78 1)"><text x="0.60 6.63 12.65 18.68 24.71" y="424.70" font-size="10.4" fill="#bdbdbd" font-family="Liberation Sans, sans-serif" font-weight="normal">3,100</text></g>
<g transform="translate(974.80 0) scale(0.78 1)"><text x="0.60 6.63 12.65 18.68 24.71" y="462.50" font-size="10.4" fill="#bdbdbd" font-family="Liberation Sans, sans-serif" font-weight="normal">3,050</text></g>
<g transform="translate(974.80 0) scale(0.78 1)"><text x="0.60 6.63 12.65 18.68 24.71" y="500.80" font-size="10.4" fill="#bdbdbd" font-family="Liberation Sans, sans-serif" font-weight="normal">3,000</text></g>
<g transform="translate(974.80 0) scale(0.78 1)"><text x="0.60 6.63 12.65 18.68 24.71" y="539.20" font-size="10.4" fill="#bdbdbd" font-family="Liberation Sans, sans-serif" font-weight="normal">2,950</text></g>
<rect x="974" y="170" width="47" height="16" fill="#d6d6d6"/>
<g transform="translate(984.00 0) scale(0.8 1)"><text x="0.64 7.01 13.39 19.76 26.14" y="181.30" font-size="11" fill="#101010" font-family="Liberation Sans, sans-serif" font-weight="bold">6,439</text></g>
<rect x="974" y="363.5" width="47" height="17.0" fill="#d6d6d6"/>
<g transform="translate(984.00 0) scale(0.8 1)"><text x="0.64 7.01 13.39 19.76 26.14" y="375.30" font-size="11" fill="#101010" font-family="Liberation Sans, sans-serif" font-weight="bold">3,395</text></g>
<rect x="974" y="462" width="47" height="16.5" fill="#d6d6d6"/>
<g transform="translate(984.00 0) scale(0.8 1)"><text x="0.64 7.01 13.39 19.76 26.14" y="473.55" font-size="11" fill="#101010" font-family="Liberation Sans, sans-serif" font-weight="bold">3,044</text></g>
<rect x="974" y="200.5" width="1047" height="3" fill="#f4f4f4"/>
<rect x="974" y="412" width="1047" height="3" fill="#f4f4f4"/>
<rect x="1021" y="20" width="3" height="527" fill="#c4c4c4"/><rect x="1023" y="0" width="1" height="547" fill="#a9a9a9"/>
<rect x="2" y="541.6" width="1022" height="3.8" fill="#c6c6c6"/><rect x="0" y="545.4" width="1024" height="1.6" fill="#e6e6e6"/><rect x="0" y="0" width="2" height="545.4" fill="#a2a2a2"/>
</svg>
</body></html>
